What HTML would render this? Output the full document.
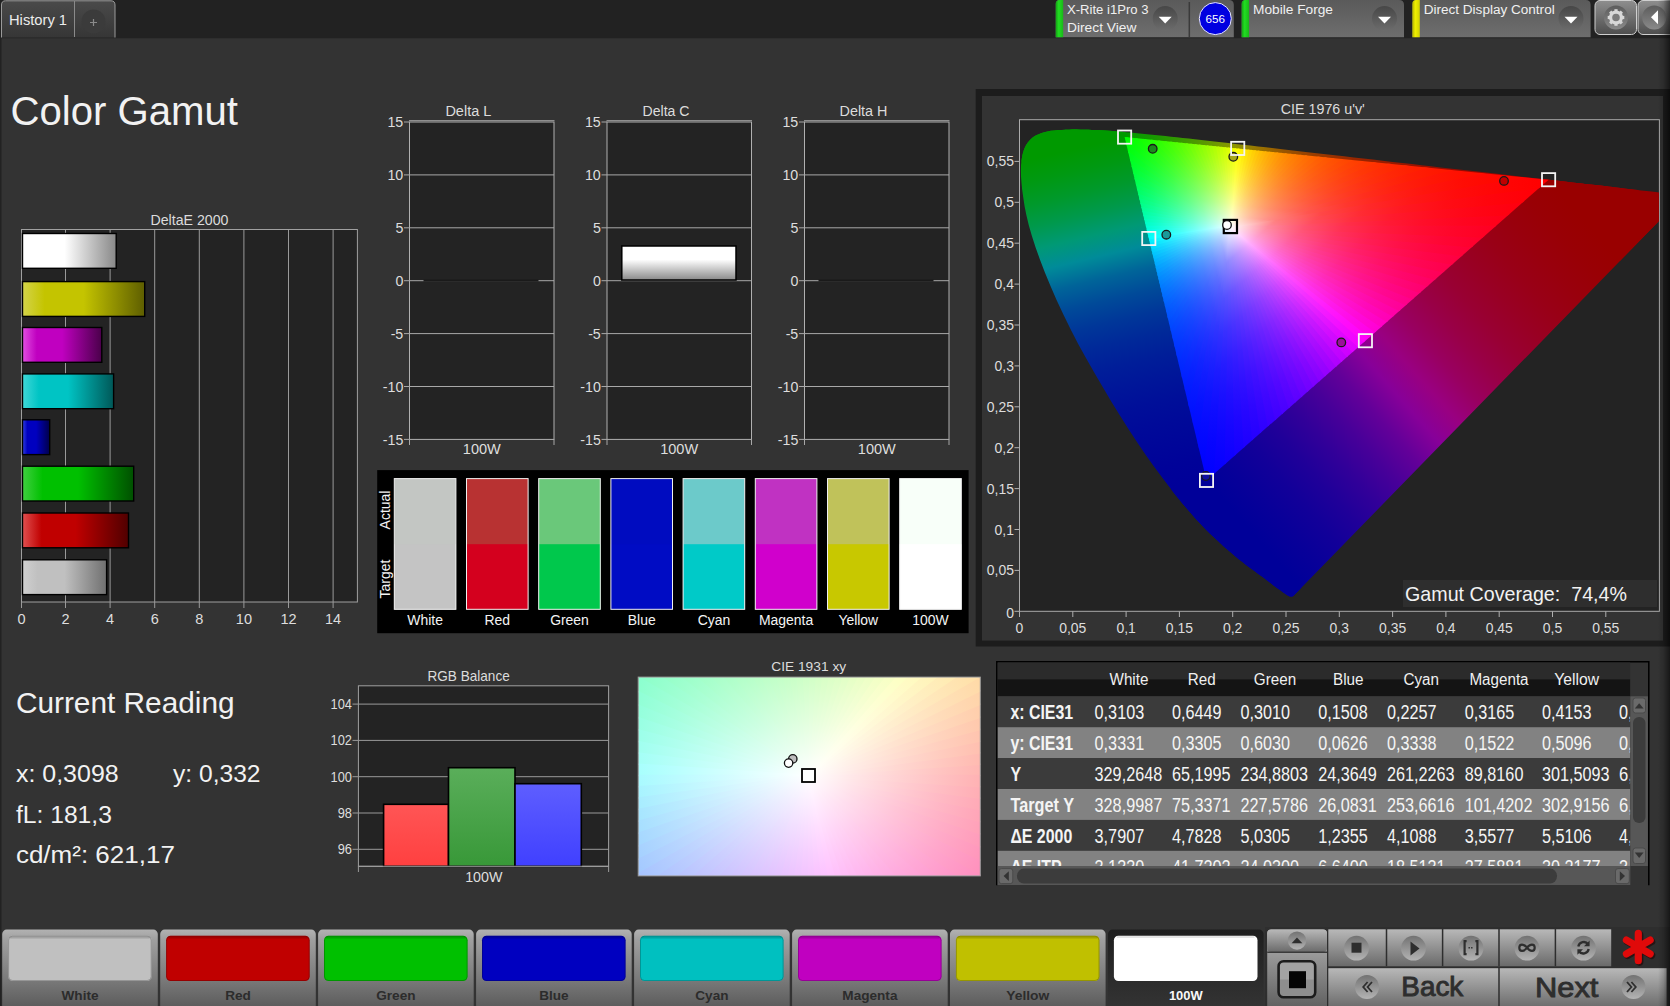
<!DOCTYPE html>
<html><head><meta charset="utf-8"><title>Color Gamut</title>
<style>html,body{margin:0;padding:0;background:#333;overflow:hidden}svg{display:block}text{font-family:"Liberation Sans", sans-serif}</style></head>
<body><svg width="1670" height="1006" viewBox="0 0 1670 1006" font-family='"Liberation Sans", sans-serif' fill="#e6e6e6">
<defs><linearGradient id="rshadow" x1="0" x2="1" y1="0" y2="0"><stop offset="0" stop-color="#333"/><stop offset="1" stop-color="#141414"/></linearGradient><linearGradient id="tabg" x1="0" x2="0" y1="0" y2="1"><stop offset="0" stop-color="#4a4a4a"/><stop offset="1" stop-color="#363636"/></linearGradient><radialGradient id="plusg" cx="0.5" cy="0.4" r="0.6"><stop offset="0" stop-color="#3a3a3a"/><stop offset="1" stop-color="#444"/></radialGradient><linearGradient id="wg" x1="0" x2="0" y1="0" y2="1"><stop offset="0" stop-color="#5a5a5a"/><stop offset="1" stop-color="#6e6e6e"/></linearGradient><linearGradient id="ddg" x1="0" x2="0" y1="0" y2="1"><stop offset="0" stop-color="#474747"/><stop offset="1" stop-color="#6c6c6c"/></linearGradient><linearGradient id="grn" x1="0" x2="1" y1="0" y2="0"><stop offset="0" stop-color="#14a014"/><stop offset="0.4" stop-color="#22dd22"/><stop offset="1" stop-color="#19b819"/></linearGradient><linearGradient id="yel" x1="0" x2="1" y1="0" y2="0"><stop offset="0" stop-color="#b0b000"/><stop offset="0.4" stop-color="#f0f000"/><stop offset="1" stop-color="#d0d000"/></linearGradient><linearGradient id="btg" x1="0" x2="0" y1="0" y2="1"><stop offset="0" stop-color="#8e8e8e"/><stop offset="1" stop-color="#4e4e4e"/></linearGradient><linearGradient id="btc" x1="0" x2="0" y1="0" y2="1"><stop offset="0" stop-color="#5c5c5c"/><stop offset="1" stop-color="#8a8a8a"/></linearGradient><linearGradient id="deb0" x1="0" x2="1" y1="0" y2="0"><stop offset="0" stop-color="#fff"/><stop offset="0.45" stop-color="#fff"/><stop offset="1" stop-color="#888"/></linearGradient><linearGradient id="deb1" x1="0" x2="1" y1="0" y2="0"><stop offset="0" stop-color="#d4d44a"/><stop offset="0.18" stop-color="#c4c400"/><stop offset="0.5" stop-color="#c4c400"/><stop offset="1" stop-color="#5e5e00"/></linearGradient><linearGradient id="deb2" x1="0" x2="1" y1="0" y2="0"><stop offset="0" stop-color="#e050e0"/><stop offset="0.18" stop-color="#c000c0"/><stop offset="0.5" stop-color="#c000c0"/><stop offset="1" stop-color="#4a004a"/></linearGradient><linearGradient id="deb3" x1="0" x2="1" y1="0" y2="0"><stop offset="0" stop-color="#40d8d8"/><stop offset="0.18" stop-color="#00c4c4"/><stop offset="0.5" stop-color="#00c4c4"/><stop offset="1" stop-color="#005858"/></linearGradient><linearGradient id="deb4" x1="0" x2="1" y1="0" y2="0"><stop offset="0" stop-color="#3040e0"/><stop offset="0.18" stop-color="#0000c0"/><stop offset="0.5" stop-color="#0000c0"/><stop offset="1" stop-color="#00004a"/></linearGradient><linearGradient id="deb5" x1="0" x2="1" y1="0" y2="0"><stop offset="0" stop-color="#40d040"/><stop offset="0.18" stop-color="#00c000"/><stop offset="0.5" stop-color="#00c000"/><stop offset="1" stop-color="#005000"/></linearGradient><linearGradient id="deb6" x1="0" x2="1" y1="0" y2="0"><stop offset="0" stop-color="#e05050"/><stop offset="0.18" stop-color="#c00000"/><stop offset="0.5" stop-color="#c00000"/><stop offset="1" stop-color="#500000"/></linearGradient><linearGradient id="deb7" x1="0" x2="1" y1="0" y2="0"><stop offset="0" stop-color="#d0d0d0"/><stop offset="0.18" stop-color="#c0c0c0"/><stop offset="0.5" stop-color="#c0c0c0"/><stop offset="1" stop-color="#707070"/></linearGradient><linearGradient id="dcb" x1="0" x2="0" y1="0" y2="1"><stop offset="0" stop-color="#fff"/><stop offset="0.4" stop-color="#fff"/><stop offset="1" stop-color="#8a8a8a"/></linearGradient><clipPath id="plotclip"><rect x="1020" y="120.2" width="639" height="490.6"/></clipPath><clipPath id="locclip"><path d="M1293.3,596.0 L1293.2,596.0 L1293.2,596.0 L1293.1,596.0 L1293.1,596.0 L1293.0,596.1 L1293.0,596.2 L1292.9,596.2 L1292.8,596.3 L1292.8,596.3 L1292.7,596.3 L1292.6,596.3 L1292.5,596.3 L1292.4,596.4 L1292.3,596.4 L1292.2,596.5 L1292.1,596.6 L1292.0,596.6 L1291.8,596.6 L1291.7,596.6 L1291.5,596.6 L1291.4,596.6 L1291.2,596.6 L1291.0,596.6 L1290.8,596.6 L1290.6,596.6 L1290.4,596.6 L1290.2,596.6 L1289.9,596.6 L1289.6,596.5 L1289.3,596.3 L1288.9,596.1 L1288.4,595.8 L1287.7,595.4 L1287.0,595.0 L1286.2,594.5 L1285.4,594.0 L1284.5,593.3 L1283.5,592.7 L1282.5,591.9 L1281.3,591.1 L1280.0,590.1 L1278.5,589.1 L1277.0,588.0 L1275.3,586.7 L1273.6,585.4 L1271.8,584.0 L1269.9,582.5 L1267.8,581.0 L1265.6,579.3 L1263.4,577.6 L1260.9,575.8 L1258.3,573.9 L1255.4,571.8 L1252.4,569.5 L1249.1,567.2 L1245.8,564.7 L1242.5,562.1 L1239.1,559.4 L1235.5,556.5 L1231.8,553.3 L1227.9,550.0 L1223.8,546.4 L1219.6,542.6 L1215.1,538.3 L1210.5,533.9 L1205.7,529.2 L1200.7,524.0 L1195.1,518.0 L1189.1,511.1 L1182.6,503.5 L1175.7,495.2 L1168.6,486.1 L1161.2,476.3 L1153.4,465.7 L1145.4,454.4 L1137.3,442.4 L1128.9,429.7 L1120.4,416.2 L1111.7,402.2 L1103.3,388.1 L1094.8,373.6 L1086.4,358.8 L1078.2,343.9 L1070.6,329.3 L1063.5,314.8 L1056.8,300.4 L1050.6,286.3 L1045.0,272.8 L1040.1,260.0 L1035.7,247.7 L1031.9,236.1 L1028.8,225.3 L1026.4,215.3 L1024.6,206.2 L1023.3,197.7 L1022.2,189.9 L1021.5,182.8 L1021.0,176.5 L1020.9,170.7 L1021.0,165.3 L1021.5,160.4 L1022.2,156.0 L1023.2,152.0 L1024.4,148.4 L1026.1,145.1 L1028.0,142.3 L1030.2,139.8 L1032.6,137.6 L1035.2,135.8 L1038.0,134.4 L1041.0,133.2 L1044.1,132.2 L1047.4,131.4 L1050.8,130.8 L1054.3,130.5 L1057.9,130.1 L1061.5,129.9 L1065.3,129.7 L1069.1,129.7 L1072.9,129.6 L1076.6,129.6 L1080.4,129.7 L1084.2,129.7 L1088.1,129.8 L1092.0,130.0 L1095.9,130.1 L1099.9,130.3 L1104.0,130.6 L1108.1,130.8 L1112.3,131.1 L1116.6,131.4 L1121.1,131.8 L1125.6,132.2 L1130.1,132.6 L1134.8,133.0 L1139.6,133.5 L1144.6,133.9 L1149.6,134.4 L1154.8,135.0 L1160.1,135.5 L1165.5,136.1 L1171.1,136.7 L1176.8,137.3 L1182.7,137.9 L1188.7,138.6 L1194.9,139.3 L1201.2,140.0 L1207.7,140.7 L1214.4,141.5 L1221.3,142.3 L1228.3,143.0 L1235.5,143.9 L1242.8,144.7 L1250.4,145.6 L1258.1,146.4 L1265.9,147.3 L1274.0,148.3 L1282.2,149.2 L1290.6,150.2 L1299.2,151.2 L1307.9,152.2 L1316.8,153.2 L1325.8,154.2 L1335.0,155.3 L1344.3,156.3 L1353.8,157.4 L1363.3,158.5 L1372.9,159.6 L1382.6,160.7 L1392.4,161.9 L1402.2,163.0 L1411.9,164.1 L1421.4,165.2 L1430.9,166.3 L1440.3,167.4 L1449.6,168.4 L1458.9,169.5 L1468.3,170.6 L1477.4,171.6 L1486.3,172.6 L1495.0,173.6 L1503.4,174.6 L1511.7,175.5 L1519.6,176.4 L1527.4,177.3 L1534.9,178.2 L1542.1,179.0 L1549.1,179.8 L1555.7,180.6 L1562.1,181.3 L1568.2,182.0 L1574.1,182.7 L1579.7,183.3 L1585.0,183.9 L1590.1,184.5 L1595.1,185.1 L1599.8,185.6 L1604.2,186.1 L1608.6,186.6 L1612.7,187.1 L1616.8,187.6 L1620.7,188.0 L1624.4,188.5 L1628.1,188.9 L1631.5,189.3 L1634.8,189.7 L1638.0,190.0 L1641.0,190.4 L1643.9,190.7 L1646.6,191.0 L1649.1,191.3 L1651.5,191.5 L1653.6,191.8 L1655.5,192.0 L1657.4,192.2 L1659.6,192.5 L1662.1,192.8 L1664.8,193.1 L1667.7,193.4 L1670.7,193.8 L1674.2,194.2 L1678.1,194.6 L1681.6,195.0 L1684.0,195.3 L1685.0,195.4 L1684.9,195.4 L1684.3,195.3 L1684.0,195.3 Z"/></clipPath><clipPath id="triclip"><path d="M1548.61,179.70 L1124.61,137.06 L1206.52,480.44 Z"/></clipPath><linearGradient id="oe0" gradientUnits="userSpaceOnUse" x1="1548.6" y1="179.7" x2="1124.6" y2="137.1"><stop offset="0.000" stop-color="#990000"/><stop offset="0.062" stop-color="#990200"/><stop offset="0.125" stop-color="#990500"/><stop offset="0.188" stop-color="#990800"/><stop offset="0.250" stop-color="#990d00"/><stop offset="0.312" stop-color="#991200"/><stop offset="0.375" stop-color="#991a00"/><stop offset="0.438" stop-color="#992300"/><stop offset="0.500" stop-color="#992f00"/><stop offset="0.562" stop-color="#993f00"/><stop offset="0.625" stop-color="#995500"/><stop offset="0.688" stop-color="#997600"/><stop offset="0.750" stop-color="#8a9900"/><stop offset="0.812" stop-color="#5a9900"/><stop offset="0.875" stop-color="#339900"/><stop offset="0.938" stop-color="#159900"/><stop offset="1.000" stop-color="#009900"/></linearGradient><linearGradient id="oe1" gradientUnits="userSpaceOnUse" x1="1124.6" y1="137.1" x2="1206.5" y2="480.4"><stop offset="0.000" stop-color="#009900"/><stop offset="0.062" stop-color="#009912"/><stop offset="0.125" stop-color="#00992b"/><stop offset="0.188" stop-color="#00994c"/><stop offset="0.250" stop-color="#009975"/><stop offset="0.312" stop-color="#008b99"/><stop offset="0.375" stop-color="#006499"/><stop offset="0.438" stop-color="#004a99"/><stop offset="0.500" stop-color="#003799"/><stop offset="0.562" stop-color="#002999"/><stop offset="0.625" stop-color="#001e99"/><stop offset="0.688" stop-color="#001699"/><stop offset="0.750" stop-color="#000f99"/><stop offset="0.812" stop-color="#000a99"/><stop offset="0.875" stop-color="#000699"/><stop offset="0.938" stop-color="#000299"/><stop offset="1.000" stop-color="#000099"/></linearGradient><linearGradient id="oe2" gradientUnits="userSpaceOnUse" x1="1206.5" y1="480.4" x2="1548.6" y2="179.7"><stop offset="0.000" stop-color="#000099"/><stop offset="0.062" stop-color="#080099"/><stop offset="0.125" stop-color="#120099"/><stop offset="0.188" stop-color="#200099"/><stop offset="0.250" stop-color="#320099"/><stop offset="0.312" stop-color="#480099"/><stop offset="0.375" stop-color="#630099"/><stop offset="0.438" stop-color="#870099"/><stop offset="0.500" stop-color="#990081"/><stop offset="0.562" stop-color="#990060"/><stop offset="0.625" stop-color="#990047"/><stop offset="0.688" stop-color="#990033"/><stop offset="0.750" stop-color="#990024"/><stop offset="0.812" stop-color="#990017"/><stop offset="0.875" stop-color="#99000d"/><stop offset="0.938" stop-color="#990005"/><stop offset="1.000" stop-color="#990000"/></linearGradient><linearGradient id="in0" gradientUnits="userSpaceOnUse" x1="1230.4" y1="226.5" x2="1501.8" y2="220.8"><stop offset="0.000" stop-color="#ffffff"/><stop offset="0.143" stop-color="#ff8898"/><stop offset="0.286" stop-color="#ff5066"/><stop offset="0.429" stop-color="#ff2f49"/><stop offset="0.571" stop-color="#ff1b36"/><stop offset="0.714" stop-color="#ff0e29"/><stop offset="0.857" stop-color="#ff0520"/><stop offset="1.000" stop-color="#ff0019"/></linearGradient><linearGradient id="in1" gradientUnits="userSpaceOnUse" x1="1230.4" y1="226.5" x2="1515.8" y2="208.6"><stop offset="0.000" stop-color="#ffffff"/><stop offset="0.143" stop-color="#ff8590"/><stop offset="0.286" stop-color="#ff4d5c"/><stop offset="0.429" stop-color="#ff2e3e"/><stop offset="0.571" stop-color="#ff1a2c"/><stop offset="0.714" stop-color="#ff0e1f"/><stop offset="0.857" stop-color="#ff0516"/><stop offset="1.000" stop-color="#ff000f"/></linearGradient><linearGradient id="in2" gradientUnits="userSpaceOnUse" x1="1230.4" y1="226.5" x2="1531.3" y2="194.9"><stop offset="0.000" stop-color="#ffffff"/><stop offset="0.143" stop-color="#ff8287"/><stop offset="0.286" stop-color="#ff4a52"/><stop offset="0.429" stop-color="#ff2c34"/><stop offset="0.571" stop-color="#ff1922"/><stop offset="0.714" stop-color="#ff0d15"/><stop offset="0.857" stop-color="#ff050d"/><stop offset="1.000" stop-color="#ff0007"/></linearGradient><linearGradient id="in3" gradientUnits="userSpaceOnUse" x1="1230.4" y1="226.5" x2="1547.9" y2="179.6"><stop offset="0.000" stop-color="#ffffff"/><stop offset="0.143" stop-color="#ff7f7e"/><stop offset="0.286" stop-color="#ff4747"/><stop offset="0.429" stop-color="#ff2a2a"/><stop offset="0.571" stop-color="#ff1818"/><stop offset="0.714" stop-color="#ff0c0c"/><stop offset="0.857" stop-color="#ff0505"/><stop offset="1.000" stop-color="#ff0000"/></linearGradient><linearGradient id="in4" gradientUnits="userSpaceOnUse" x1="1230.4" y1="226.5" x2="1500.9" y2="174.9"><stop offset="0.000" stop-color="#ffffff"/><stop offset="0.143" stop-color="#ff8c86"/><stop offset="0.286" stop-color="#ff554e"/><stop offset="0.429" stop-color="#ff372e"/><stop offset="0.571" stop-color="#ff231b"/><stop offset="0.714" stop-color="#ff160e"/><stop offset="0.857" stop-color="#ff0d05"/><stop offset="1.000" stop-color="#ff0700"/></linearGradient><linearGradient id="in5" gradientUnits="userSpaceOnUse" x1="1230.4" y1="226.5" x2="1465.6" y2="171.4"><stop offset="0.000" stop-color="#ffffff"/><stop offset="0.143" stop-color="#ff968d"/><stop offset="0.286" stop-color="#ff6254"/><stop offset="0.429" stop-color="#ff4233"/><stop offset="0.571" stop-color="#ff2e1d"/><stop offset="0.714" stop-color="#ff200f"/><stop offset="0.857" stop-color="#ff1606"/><stop offset="1.000" stop-color="#ff0f00"/></linearGradient><linearGradient id="in6" gradientUnits="userSpaceOnUse" x1="1230.4" y1="226.5" x2="1437.9" y2="168.6"><stop offset="0.000" stop-color="#ffffff"/><stop offset="0.143" stop-color="#ffa092"/><stop offset="0.286" stop-color="#ff6d59"/><stop offset="0.429" stop-color="#ff4d36"/><stop offset="0.571" stop-color="#ff3920"/><stop offset="0.714" stop-color="#ff2a11"/><stop offset="0.857" stop-color="#ff1f06"/><stop offset="1.000" stop-color="#ff1700"/></linearGradient><linearGradient id="in7" gradientUnits="userSpaceOnUse" x1="1230.4" y1="226.5" x2="1415.6" y2="166.3"><stop offset="0.000" stop-color="#ffffff"/><stop offset="0.143" stop-color="#ffa897"/><stop offset="0.286" stop-color="#ff775e"/><stop offset="0.429" stop-color="#ff583a"/><stop offset="0.571" stop-color="#ff4222"/><stop offset="0.714" stop-color="#ff3312"/><stop offset="0.857" stop-color="#ff2807"/><stop offset="1.000" stop-color="#ff1f00"/></linearGradient><linearGradient id="in8" gradientUnits="userSpaceOnUse" x1="1230.4" y1="226.5" x2="1397.2" y2="164.5"><stop offset="0.000" stop-color="#ffffff"/><stop offset="0.143" stop-color="#ffaf9b"/><stop offset="0.286" stop-color="#ff8062"/><stop offset="0.429" stop-color="#ff613d"/><stop offset="0.571" stop-color="#ff4c25"/><stop offset="0.714" stop-color="#ff3c14"/><stop offset="0.857" stop-color="#ff3008"/><stop offset="1.000" stop-color="#ff2700"/></linearGradient><linearGradient id="in9" gradientUnits="userSpaceOnUse" x1="1230.4" y1="226.5" x2="1381.7" y2="162.9"><stop offset="0.000" stop-color="#ffffff"/><stop offset="0.143" stop-color="#ffb59f"/><stop offset="0.286" stop-color="#ff8865"/><stop offset="0.429" stop-color="#ff6a40"/><stop offset="0.571" stop-color="#ff5427"/><stop offset="0.714" stop-color="#ff4415"/><stop offset="0.857" stop-color="#ff3808"/><stop offset="1.000" stop-color="#ff2f00"/></linearGradient><linearGradient id="in10" gradientUnits="userSpaceOnUse" x1="1230.4" y1="226.5" x2="1368.4" y2="161.6"><stop offset="0.000" stop-color="#ffffff"/><stop offset="0.143" stop-color="#ffbaa2"/><stop offset="0.286" stop-color="#ff8f69"/><stop offset="0.429" stop-color="#ff7243"/><stop offset="0.571" stop-color="#ff5d29"/><stop offset="0.714" stop-color="#ff4d16"/><stop offset="0.857" stop-color="#ff4009"/><stop offset="1.000" stop-color="#ff3700"/></linearGradient><linearGradient id="in11" gradientUnits="userSpaceOnUse" x1="1230.4" y1="226.5" x2="1356.8" y2="160.4"><stop offset="0.000" stop-color="#ffffff"/><stop offset="0.143" stop-color="#ffbfa5"/><stop offset="0.286" stop-color="#ff966c"/><stop offset="0.429" stop-color="#ff7a46"/><stop offset="0.571" stop-color="#ff652b"/><stop offset="0.714" stop-color="#ff5517"/><stop offset="0.857" stop-color="#ff4809"/><stop offset="1.000" stop-color="#ff3e00"/></linearGradient><linearGradient id="in12" gradientUnits="userSpaceOnUse" x1="1230.4" y1="226.5" x2="1346.6" y2="159.4"><stop offset="0.000" stop-color="#ffffff"/><stop offset="0.143" stop-color="#ffc4a8"/><stop offset="0.286" stop-color="#ff9d6f"/><stop offset="0.429" stop-color="#ff8148"/><stop offset="0.571" stop-color="#ff6c2c"/><stop offset="0.714" stop-color="#ff5c18"/><stop offset="0.857" stop-color="#ff5009"/><stop offset="1.000" stop-color="#ff4600"/></linearGradient><linearGradient id="in13" gradientUnits="userSpaceOnUse" x1="1230.4" y1="226.5" x2="1337.6" y2="158.5"><stop offset="0.000" stop-color="#ffffff"/><stop offset="0.143" stop-color="#ffc8aa"/><stop offset="0.286" stop-color="#ffa372"/><stop offset="0.429" stop-color="#ff884a"/><stop offset="0.571" stop-color="#ff732e"/><stop offset="0.714" stop-color="#ff6419"/><stop offset="0.857" stop-color="#ff570a"/><stop offset="1.000" stop-color="#ff4d00"/></linearGradient><linearGradient id="in14" gradientUnits="userSpaceOnUse" x1="1230.4" y1="226.5" x2="1329.5" y2="157.7"><stop offset="0.000" stop-color="#ffffff"/><stop offset="0.143" stop-color="#ffccac"/><stop offset="0.286" stop-color="#ffa874"/><stop offset="0.429" stop-color="#ff8e4d"/><stop offset="0.571" stop-color="#ff7a30"/><stop offset="0.714" stop-color="#ff6b1a"/><stop offset="0.857" stop-color="#ff5e0a"/><stop offset="1.000" stop-color="#ff5400"/></linearGradient><linearGradient id="in15" gradientUnits="userSpaceOnUse" x1="1230.4" y1="226.5" x2="1322.1" y2="156.9"><stop offset="0.000" stop-color="#ffffff"/><stop offset="0.143" stop-color="#ffd0af"/><stop offset="0.286" stop-color="#ffae77"/><stop offset="0.429" stop-color="#ff954f"/><stop offset="0.571" stop-color="#ff8131"/><stop offset="0.714" stop-color="#ff721b"/><stop offset="0.857" stop-color="#ff660b"/><stop offset="1.000" stop-color="#ff5b00"/></linearGradient><linearGradient id="in16" gradientUnits="userSpaceOnUse" x1="1230.4" y1="226.5" x2="1315.3" y2="156.2"><stop offset="0.000" stop-color="#ffffff"/><stop offset="0.143" stop-color="#ffd3b0"/><stop offset="0.286" stop-color="#ffb379"/><stop offset="0.429" stop-color="#ff9b51"/><stop offset="0.571" stop-color="#ff8833"/><stop offset="0.714" stop-color="#ff791c"/><stop offset="0.857" stop-color="#ff6d0b"/><stop offset="1.000" stop-color="#ff6300"/></linearGradient><linearGradient id="in17" gradientUnits="userSpaceOnUse" x1="1230.4" y1="226.5" x2="1309.1" y2="155.6"><stop offset="0.000" stop-color="#ffffff"/><stop offset="0.143" stop-color="#ffd6b2"/><stop offset="0.286" stop-color="#ffb87b"/><stop offset="0.429" stop-color="#ffa153"/><stop offset="0.571" stop-color="#ff8e34"/><stop offset="0.714" stop-color="#ff801d"/><stop offset="0.857" stop-color="#ff740c"/><stop offset="1.000" stop-color="#ff6a00"/></linearGradient><linearGradient id="in18" gradientUnits="userSpaceOnUse" x1="1230.4" y1="226.5" x2="1303.4" y2="155.0"><stop offset="0.000" stop-color="#ffffff"/><stop offset="0.143" stop-color="#ffd9b4"/><stop offset="0.286" stop-color="#ffbc7e"/><stop offset="0.429" stop-color="#ffa655"/><stop offset="0.571" stop-color="#ff9536"/><stop offset="0.714" stop-color="#ff861e"/><stop offset="0.857" stop-color="#ff7b0c"/><stop offset="1.000" stop-color="#ff7100"/></linearGradient><linearGradient id="in19" gradientUnits="userSpaceOnUse" x1="1230.4" y1="226.5" x2="1298.0" y2="154.5"><stop offset="0.000" stop-color="#ffffff"/><stop offset="0.143" stop-color="#ffdcb6"/><stop offset="0.286" stop-color="#ffc180"/><stop offset="0.429" stop-color="#ffac57"/><stop offset="0.571" stop-color="#ff9b37"/><stop offset="0.714" stop-color="#ff8d1f"/><stop offset="0.857" stop-color="#ff820c"/><stop offset="1.000" stop-color="#ff7800"/></linearGradient><linearGradient id="in20" gradientUnits="userSpaceOnUse" x1="1230.4" y1="226.5" x2="1293.0" y2="154.0"><stop offset="0.000" stop-color="#ffffff"/><stop offset="0.143" stop-color="#ffdeb7"/><stop offset="0.286" stop-color="#ffc582"/><stop offset="0.429" stop-color="#ffb158"/><stop offset="0.571" stop-color="#ffa139"/><stop offset="0.714" stop-color="#ff9420"/><stop offset="0.857" stop-color="#ff880d"/><stop offset="1.000" stop-color="#ff7f00"/></linearGradient><linearGradient id="in21" gradientUnits="userSpaceOnUse" x1="1230.4" y1="226.5" x2="1288.2" y2="153.5"><stop offset="0.000" stop-color="#ffffff"/><stop offset="0.143" stop-color="#ffe1b9"/><stop offset="0.286" stop-color="#ffca83"/><stop offset="0.429" stop-color="#ffb75a"/><stop offset="0.571" stop-color="#ffa73a"/><stop offset="0.714" stop-color="#ff9a21"/><stop offset="0.857" stop-color="#ff8f0d"/><stop offset="1.000" stop-color="#ff8600"/></linearGradient><linearGradient id="in22" gradientUnits="userSpaceOnUse" x1="1230.4" y1="226.5" x2="1283.7" y2="153.1"><stop offset="0.000" stop-color="#ffffff"/><stop offset="0.143" stop-color="#ffe3ba"/><stop offset="0.286" stop-color="#ffce85"/><stop offset="0.429" stop-color="#ffbc5c"/><stop offset="0.571" stop-color="#ffad3b"/><stop offset="0.714" stop-color="#ffa122"/><stop offset="0.857" stop-color="#ff960e"/><stop offset="1.000" stop-color="#ff8d00"/></linearGradient><linearGradient id="in23" gradientUnits="userSpaceOnUse" x1="1230.4" y1="226.5" x2="1279.5" y2="152.6"><stop offset="0.000" stop-color="#ffffff"/><stop offset="0.143" stop-color="#ffe6bc"/><stop offset="0.286" stop-color="#ffd287"/><stop offset="0.429" stop-color="#ffc15e"/><stop offset="0.571" stop-color="#ffb33d"/><stop offset="0.714" stop-color="#ffa723"/><stop offset="0.857" stop-color="#ff9d0e"/><stop offset="1.000" stop-color="#ff9500"/></linearGradient><linearGradient id="in24" gradientUnits="userSpaceOnUse" x1="1230.4" y1="226.5" x2="1275.4" y2="152.2"><stop offset="0.000" stop-color="#ffffff"/><stop offset="0.143" stop-color="#ffe8bd"/><stop offset="0.286" stop-color="#ffd689"/><stop offset="0.429" stop-color="#ffc65f"/><stop offset="0.571" stop-color="#ffb93e"/><stop offset="0.714" stop-color="#ffae23"/><stop offset="0.857" stop-color="#ffa50e"/><stop offset="1.000" stop-color="#ff9c00"/></linearGradient><linearGradient id="in25" gradientUnits="userSpaceOnUse" x1="1230.4" y1="226.5" x2="1271.4" y2="151.8"><stop offset="0.000" stop-color="#ffffff"/><stop offset="0.143" stop-color="#ffeabe"/><stop offset="0.286" stop-color="#ffd98b"/><stop offset="0.429" stop-color="#ffcb61"/><stop offset="0.571" stop-color="#ffbf3f"/><stop offset="0.714" stop-color="#ffb524"/><stop offset="0.857" stop-color="#ffac0f"/><stop offset="1.000" stop-color="#ffa400"/></linearGradient><linearGradient id="in26" gradientUnits="userSpaceOnUse" x1="1230.4" y1="226.5" x2="1267.7" y2="151.4"><stop offset="0.000" stop-color="#ffffff"/><stop offset="0.143" stop-color="#ffedc0"/><stop offset="0.286" stop-color="#ffdd8c"/><stop offset="0.429" stop-color="#ffd063"/><stop offset="0.571" stop-color="#ffc541"/><stop offset="0.714" stop-color="#ffbc25"/><stop offset="0.857" stop-color="#ffb30f"/><stop offset="1.000" stop-color="#ffac00"/></linearGradient><linearGradient id="in27" gradientUnits="userSpaceOnUse" x1="1230.4" y1="226.5" x2="1264.0" y2="151.1"><stop offset="0.000" stop-color="#ffffff"/><stop offset="0.143" stop-color="#ffefc1"/><stop offset="0.286" stop-color="#ffe18e"/><stop offset="0.429" stop-color="#ffd564"/><stop offset="0.571" stop-color="#ffcb42"/><stop offset="0.714" stop-color="#ffc226"/><stop offset="0.857" stop-color="#ffbb10"/><stop offset="1.000" stop-color="#ffb400"/></linearGradient><linearGradient id="in28" gradientUnits="userSpaceOnUse" x1="1230.4" y1="226.5" x2="1260.4" y2="150.7"><stop offset="0.000" stop-color="#ffffff"/><stop offset="0.143" stop-color="#fff1c2"/><stop offset="0.286" stop-color="#ffe590"/><stop offset="0.429" stop-color="#ffda66"/><stop offset="0.571" stop-color="#ffd144"/><stop offset="0.714" stop-color="#ffc927"/><stop offset="0.857" stop-color="#ffc210"/><stop offset="1.000" stop-color="#ffbc00"/></linearGradient><linearGradient id="in29" gradientUnits="userSpaceOnUse" x1="1230.4" y1="226.5" x2="1256.9" y2="150.4"><stop offset="0.000" stop-color="#ffffff"/><stop offset="0.143" stop-color="#fff3c3"/><stop offset="0.286" stop-color="#ffe991"/><stop offset="0.429" stop-color="#ffe068"/><stop offset="0.571" stop-color="#ffd845"/><stop offset="0.714" stop-color="#ffd128"/><stop offset="0.857" stop-color="#ffca11"/><stop offset="1.000" stop-color="#ffc500"/></linearGradient><linearGradient id="in30" gradientUnits="userSpaceOnUse" x1="1230.4" y1="226.5" x2="1253.5" y2="150.0"><stop offset="0.000" stop-color="#ffffff"/><stop offset="0.143" stop-color="#fff5c4"/><stop offset="0.286" stop-color="#ffec93"/><stop offset="0.429" stop-color="#ffe56a"/><stop offset="0.571" stop-color="#ffde46"/><stop offset="0.714" stop-color="#ffd829"/><stop offset="0.857" stop-color="#ffd311"/><stop offset="1.000" stop-color="#ffce00"/></linearGradient><linearGradient id="in31" gradientUnits="userSpaceOnUse" x1="1230.4" y1="226.5" x2="1250.1" y2="149.7"><stop offset="0.000" stop-color="#ffffff"/><stop offset="0.143" stop-color="#fff7c6"/><stop offset="0.286" stop-color="#fff095"/><stop offset="0.429" stop-color="#ffea6b"/><stop offset="0.571" stop-color="#ffe548"/><stop offset="0.714" stop-color="#ffe02a"/><stop offset="0.857" stop-color="#ffdb12"/><stop offset="1.000" stop-color="#ffd700"/></linearGradient><linearGradient id="in32" gradientUnits="userSpaceOnUse" x1="1230.4" y1="226.5" x2="1246.8" y2="149.3"><stop offset="0.000" stop-color="#ffffff"/><stop offset="0.143" stop-color="#fff9c7"/><stop offset="0.286" stop-color="#fff497"/><stop offset="0.429" stop-color="#ffef6d"/><stop offset="0.571" stop-color="#ffeb49"/><stop offset="0.714" stop-color="#ffe82b"/><stop offset="0.857" stop-color="#ffe412"/><stop offset="1.000" stop-color="#ffe100"/></linearGradient><linearGradient id="in33" gradientUnits="userSpaceOnUse" x1="1230.4" y1="226.5" x2="1243.5" y2="149.0"><stop offset="0.000" stop-color="#ffffff"/><stop offset="0.143" stop-color="#fffbc8"/><stop offset="0.286" stop-color="#fff898"/><stop offset="0.429" stop-color="#fff56f"/><stop offset="0.571" stop-color="#fff24b"/><stop offset="0.714" stop-color="#fff02c"/><stop offset="0.857" stop-color="#ffed13"/><stop offset="1.000" stop-color="#ffeb00"/></linearGradient><linearGradient id="in34" gradientUnits="userSpaceOnUse" x1="1230.4" y1="226.5" x2="1240.2" y2="148.7"><stop offset="0.000" stop-color="#ffffff"/><stop offset="0.143" stop-color="#fffdc9"/><stop offset="0.286" stop-color="#fffc9a"/><stop offset="0.429" stop-color="#fffb71"/><stop offset="0.571" stop-color="#fff94d"/><stop offset="0.714" stop-color="#fff82d"/><stop offset="0.857" stop-color="#fff713"/><stop offset="1.000" stop-color="#fff600"/></linearGradient><linearGradient id="in35" gradientUnits="userSpaceOnUse" x1="1230.4" y1="226.5" x2="1236.9" y2="148.4"><stop offset="0.000" stop-color="#ffffff"/><stop offset="0.143" stop-color="#feffca"/><stop offset="0.286" stop-color="#feff9b"/><stop offset="0.429" stop-color="#feff72"/><stop offset="0.571" stop-color="#fdff4e"/><stop offset="0.714" stop-color="#fdff2e"/><stop offset="0.857" stop-color="#fdff14"/><stop offset="1.000" stop-color="#fcff00"/></linearGradient><linearGradient id="in36" gradientUnits="userSpaceOnUse" x1="1230.4" y1="226.5" x2="1233.7" y2="148.0"><stop offset="0.000" stop-color="#ffffff"/><stop offset="0.143" stop-color="#fcffca"/><stop offset="0.286" stop-color="#faff9b"/><stop offset="0.429" stop-color="#f8ff71"/><stop offset="0.571" stop-color="#f6ff4d"/><stop offset="0.714" stop-color="#f4ff2e"/><stop offset="0.857" stop-color="#f2ff13"/><stop offset="1.000" stop-color="#f1ff00"/></linearGradient><linearGradient id="in37" gradientUnits="userSpaceOnUse" x1="1230.4" y1="226.5" x2="1230.4" y2="147.7"><stop offset="0.000" stop-color="#ffffff"/><stop offset="0.143" stop-color="#faffc9"/><stop offset="0.286" stop-color="#f6ff9a"/><stop offset="0.429" stop-color="#f2ff71"/><stop offset="0.571" stop-color="#eeff4c"/><stop offset="0.714" stop-color="#ebff2d"/><stop offset="0.857" stop-color="#e8ff13"/><stop offset="1.000" stop-color="#e5ff00"/></linearGradient><linearGradient id="in38" gradientUnits="userSpaceOnUse" x1="1230.4" y1="226.5" x2="1227.1" y2="147.4"><stop offset="0.000" stop-color="#ffffff"/><stop offset="0.143" stop-color="#f8ffc9"/><stop offset="0.286" stop-color="#f2ff99"/><stop offset="0.429" stop-color="#ecff70"/><stop offset="0.571" stop-color="#e7ff4c"/><stop offset="0.714" stop-color="#e2ff2d"/><stop offset="0.857" stop-color="#deff13"/><stop offset="1.000" stop-color="#daff00"/></linearGradient><linearGradient id="in39" gradientUnits="userSpaceOnUse" x1="1230.4" y1="226.5" x2="1223.7" y2="147.0"><stop offset="0.000" stop-color="#ffffff"/><stop offset="0.143" stop-color="#f6ffc8"/><stop offset="0.286" stop-color="#eeff99"/><stop offset="0.429" stop-color="#e7ff6f"/><stop offset="0.571" stop-color="#e0ff4b"/><stop offset="0.714" stop-color="#daff2c"/><stop offset="0.857" stop-color="#d4ff13"/><stop offset="1.000" stop-color="#cfff00"/></linearGradient><linearGradient id="in40" gradientUnits="userSpaceOnUse" x1="1230.4" y1="226.5" x2="1220.3" y2="146.7"><stop offset="0.000" stop-color="#ffffff"/><stop offset="0.143" stop-color="#f4ffc8"/><stop offset="0.286" stop-color="#eaff98"/><stop offset="0.429" stop-color="#e1ff6f"/><stop offset="0.571" stop-color="#d9ff4b"/><stop offset="0.714" stop-color="#d1ff2c"/><stop offset="0.857" stop-color="#cbff13"/><stop offset="1.000" stop-color="#c5ff00"/></linearGradient><linearGradient id="in41" gradientUnits="userSpaceOnUse" x1="1230.4" y1="226.5" x2="1216.8" y2="146.3"><stop offset="0.000" stop-color="#ffffff"/><stop offset="0.143" stop-color="#f2ffc7"/><stop offset="0.286" stop-color="#e6ff97"/><stop offset="0.429" stop-color="#dbff6e"/><stop offset="0.571" stop-color="#d2ff4a"/><stop offset="0.714" stop-color="#c9ff2c"/><stop offset="0.857" stop-color="#c1ff12"/><stop offset="1.000" stop-color="#baff00"/></linearGradient><linearGradient id="in42" gradientUnits="userSpaceOnUse" x1="1230.4" y1="226.5" x2="1213.3" y2="146.0"><stop offset="0.000" stop-color="#ffffff"/><stop offset="0.143" stop-color="#efffc7"/><stop offset="0.286" stop-color="#e2ff97"/><stop offset="0.429" stop-color="#d5ff6d"/><stop offset="0.571" stop-color="#caff49"/><stop offset="0.714" stop-color="#c0ff2b"/><stop offset="0.857" stop-color="#b7ff12"/><stop offset="1.000" stop-color="#afff00"/></linearGradient><linearGradient id="in43" gradientUnits="userSpaceOnUse" x1="1230.4" y1="226.5" x2="1209.6" y2="145.6"><stop offset="0.000" stop-color="#ffffff"/><stop offset="0.143" stop-color="#edffc6"/><stop offset="0.286" stop-color="#ddff96"/><stop offset="0.429" stop-color="#d0ff6c"/><stop offset="0.571" stop-color="#c3ff49"/><stop offset="0.714" stop-color="#b8ff2b"/><stop offset="0.857" stop-color="#aeff12"/><stop offset="1.000" stop-color="#a5ff00"/></linearGradient><linearGradient id="in44" gradientUnits="userSpaceOnUse" x1="1230.4" y1="226.5" x2="1205.8" y2="145.2"><stop offset="0.000" stop-color="#ffffff"/><stop offset="0.143" stop-color="#ebffc6"/><stop offset="0.286" stop-color="#d9ff95"/><stop offset="0.429" stop-color="#caff6c"/><stop offset="0.571" stop-color="#bcff48"/><stop offset="0.714" stop-color="#afff2a"/><stop offset="0.857" stop-color="#a4ff12"/><stop offset="1.000" stop-color="#9aff00"/></linearGradient><linearGradient id="in45" gradientUnits="userSpaceOnUse" x1="1230.4" y1="226.5" x2="1201.9" y2="144.8"><stop offset="0.000" stop-color="#ffffff"/><stop offset="0.143" stop-color="#e8ffc5"/><stop offset="0.286" stop-color="#d5ff95"/><stop offset="0.429" stop-color="#c4ff6b"/><stop offset="0.571" stop-color="#b4ff48"/><stop offset="0.714" stop-color="#a7ff2a"/><stop offset="0.857" stop-color="#9aff12"/><stop offset="1.000" stop-color="#90ff00"/></linearGradient><linearGradient id="in46" gradientUnits="userSpaceOnUse" x1="1230.4" y1="226.5" x2="1197.9" y2="144.4"><stop offset="0.000" stop-color="#ffffff"/><stop offset="0.143" stop-color="#e6ffc5"/><stop offset="0.286" stop-color="#d0ff94"/><stop offset="0.429" stop-color="#bdff6a"/><stop offset="0.571" stop-color="#adff47"/><stop offset="0.714" stop-color="#9eff29"/><stop offset="0.857" stop-color="#91ff11"/><stop offset="1.000" stop-color="#85ff00"/></linearGradient><linearGradient id="in47" gradientUnits="userSpaceOnUse" x1="1230.4" y1="226.5" x2="1193.7" y2="144.0"><stop offset="0.000" stop-color="#ffffff"/><stop offset="0.143" stop-color="#e3ffc4"/><stop offset="0.286" stop-color="#ccff93"/><stop offset="0.429" stop-color="#b7ff69"/><stop offset="0.571" stop-color="#a5ff46"/><stop offset="0.714" stop-color="#95ff29"/><stop offset="0.857" stop-color="#87ff11"/><stop offset="1.000" stop-color="#7aff00"/></linearGradient><linearGradient id="in48" gradientUnits="userSpaceOnUse" x1="1230.4" y1="226.5" x2="1189.2" y2="143.6"><stop offset="0.000" stop-color="#ffffff"/><stop offset="0.143" stop-color="#e1ffc4"/><stop offset="0.286" stop-color="#c7ff92"/><stop offset="0.429" stop-color="#b0ff69"/><stop offset="0.571" stop-color="#9dff46"/><stop offset="0.714" stop-color="#8cff28"/><stop offset="0.857" stop-color="#7dff11"/><stop offset="1.000" stop-color="#6fff00"/></linearGradient><linearGradient id="in49" gradientUnits="userSpaceOnUse" x1="1230.4" y1="226.5" x2="1184.5" y2="143.1"><stop offset="0.000" stop-color="#ffffff"/><stop offset="0.143" stop-color="#deffc3"/><stop offset="0.286" stop-color="#c2ff91"/><stop offset="0.429" stop-color="#aaff68"/><stop offset="0.571" stop-color="#95ff45"/><stop offset="0.714" stop-color="#82ff28"/><stop offset="0.857" stop-color="#72ff11"/><stop offset="1.000" stop-color="#64ff00"/></linearGradient><linearGradient id="in50" gradientUnits="userSpaceOnUse" x1="1230.4" y1="226.5" x2="1179.6" y2="142.6"><stop offset="0.000" stop-color="#ffffff"/><stop offset="0.143" stop-color="#dbffc3"/><stop offset="0.286" stop-color="#bdff90"/><stop offset="0.429" stop-color="#a3ff67"/><stop offset="0.571" stop-color="#8cff44"/><stop offset="0.714" stop-color="#79ff28"/><stop offset="0.857" stop-color="#68ff10"/><stop offset="1.000" stop-color="#59ff00"/></linearGradient><linearGradient id="in51" gradientUnits="userSpaceOnUse" x1="1230.4" y1="226.5" x2="1174.3" y2="142.1"><stop offset="0.000" stop-color="#ffffff"/><stop offset="0.143" stop-color="#d8ffc2"/><stop offset="0.286" stop-color="#b7ff90"/><stop offset="0.429" stop-color="#9bff66"/><stop offset="0.571" stop-color="#84ff43"/><stop offset="0.714" stop-color="#6fff27"/><stop offset="0.857" stop-color="#5dff10"/><stop offset="1.000" stop-color="#4eff00"/></linearGradient><linearGradient id="in52" gradientUnits="userSpaceOnUse" x1="1230.4" y1="226.5" x2="1168.6" y2="141.5"><stop offset="0.000" stop-color="#ffffff"/><stop offset="0.143" stop-color="#d5ffc1"/><stop offset="0.286" stop-color="#b1ff8f"/><stop offset="0.429" stop-color="#94ff65"/><stop offset="0.571" stop-color="#7aff43"/><stop offset="0.714" stop-color="#65ff26"/><stop offset="0.857" stop-color="#52ff10"/><stop offset="1.000" stop-color="#43ff00"/></linearGradient><linearGradient id="in53" gradientUnits="userSpaceOnUse" x1="1230.4" y1="226.5" x2="1162.5" y2="140.9"><stop offset="0.000" stop-color="#ffffff"/><stop offset="0.143" stop-color="#d1ffc0"/><stop offset="0.286" stop-color="#abff8e"/><stop offset="0.429" stop-color="#8cff64"/><stop offset="0.571" stop-color="#71ff42"/><stop offset="0.714" stop-color="#5aff26"/><stop offset="0.857" stop-color="#47ff10"/><stop offset="1.000" stop-color="#37ff00"/></linearGradient><linearGradient id="in54" gradientUnits="userSpaceOnUse" x1="1230.4" y1="226.5" x2="1155.9" y2="140.2"><stop offset="0.000" stop-color="#ffffff"/><stop offset="0.143" stop-color="#cdffc0"/><stop offset="0.286" stop-color="#a5ff8c"/><stop offset="0.429" stop-color="#83ff63"/><stop offset="0.571" stop-color="#67ff41"/><stop offset="0.714" stop-color="#4fff25"/><stop offset="0.857" stop-color="#3cff0f"/><stop offset="1.000" stop-color="#2bff00"/></linearGradient><linearGradient id="in55" gradientUnits="userSpaceOnUse" x1="1230.4" y1="226.5" x2="1148.7" y2="139.5"><stop offset="0.000" stop-color="#ffffff"/><stop offset="0.143" stop-color="#c9ffbf"/><stop offset="0.286" stop-color="#9eff8b"/><stop offset="0.429" stop-color="#7aff62"/><stop offset="0.571" stop-color="#5dff40"/><stop offset="0.714" stop-color="#44ff25"/><stop offset="0.857" stop-color="#30ff0f"/><stop offset="1.000" stop-color="#1fff00"/></linearGradient><linearGradient id="in56" gradientUnits="userSpaceOnUse" x1="1230.4" y1="226.5" x2="1140.7" y2="138.7"><stop offset="0.000" stop-color="#ffffff"/><stop offset="0.143" stop-color="#c5ffbe"/><stop offset="0.286" stop-color="#96ff8a"/><stop offset="0.429" stop-color="#70ff60"/><stop offset="0.571" stop-color="#52ff3f"/><stop offset="0.714" stop-color="#38ff24"/><stop offset="0.857" stop-color="#24ff0f"/><stop offset="1.000" stop-color="#13ff00"/></linearGradient><linearGradient id="in57" gradientUnits="userSpaceOnUse" x1="1230.4" y1="226.5" x2="1131.8" y2="137.8"><stop offset="0.000" stop-color="#ffffff"/><stop offset="0.143" stop-color="#c0ffbd"/><stop offset="0.286" stop-color="#8eff88"/><stop offset="0.429" stop-color="#66ff5f"/><stop offset="0.571" stop-color="#46ff3e"/><stop offset="0.714" stop-color="#2cff23"/><stop offset="0.857" stop-color="#17ff0e"/><stop offset="1.000" stop-color="#07ff00"/></linearGradient><linearGradient id="in58" gradientUnits="userSpaceOnUse" x1="1230.4" y1="226.5" x2="1125.2" y2="139.5"><stop offset="0.000" stop-color="#ffffff"/><stop offset="0.143" stop-color="#bcffbd"/><stop offset="0.286" stop-color="#88ff8a"/><stop offset="0.429" stop-color="#5eff61"/><stop offset="0.571" stop-color="#3dff40"/><stop offset="0.714" stop-color="#23ff26"/><stop offset="0.857" stop-color="#0eff11"/><stop offset="1.000" stop-color="#00ff02"/></linearGradient><linearGradient id="in59" gradientUnits="userSpaceOnUse" x1="1230.4" y1="226.5" x2="1127.3" y2="148.3"><stop offset="0.000" stop-color="#ffffff"/><stop offset="0.143" stop-color="#bdffc3"/><stop offset="0.286" stop-color="#8aff93"/><stop offset="0.429" stop-color="#60ff6c"/><stop offset="0.571" stop-color="#3fff4c"/><stop offset="0.714" stop-color="#24ff33"/><stop offset="0.857" stop-color="#0fff1e"/><stop offset="1.000" stop-color="#00ff0d"/></linearGradient><linearGradient id="in60" gradientUnits="userSpaceOnUse" x1="1230.4" y1="226.5" x2="1129.2" y2="156.2"><stop offset="0.000" stop-color="#ffffff"/><stop offset="0.143" stop-color="#bfffc7"/><stop offset="0.286" stop-color="#8bff9b"/><stop offset="0.429" stop-color="#62ff76"/><stop offset="0.571" stop-color="#40ff58"/><stop offset="0.714" stop-color="#25ff3f"/><stop offset="0.857" stop-color="#0fff2a"/><stop offset="1.000" stop-color="#00ff1a"/></linearGradient><linearGradient id="in61" gradientUnits="userSpaceOnUse" x1="1230.4" y1="226.5" x2="1130.9" y2="163.4"><stop offset="0.000" stop-color="#ffffff"/><stop offset="0.143" stop-color="#c0ffcc"/><stop offset="0.286" stop-color="#8dffa2"/><stop offset="0.429" stop-color="#63ff80"/><stop offset="0.571" stop-color="#41ff63"/><stop offset="0.714" stop-color="#25ff4b"/><stop offset="0.857" stop-color="#0fff37"/><stop offset="1.000" stop-color="#00ff26"/></linearGradient><linearGradient id="in62" gradientUnits="userSpaceOnUse" x1="1230.4" y1="226.5" x2="1132.5" y2="170.0"><stop offset="0.000" stop-color="#ffffff"/><stop offset="0.143" stop-color="#c1ffd0"/><stop offset="0.286" stop-color="#8effaa"/><stop offset="0.429" stop-color="#64ff89"/><stop offset="0.571" stop-color="#42ff6e"/><stop offset="0.714" stop-color="#26ff57"/><stop offset="0.857" stop-color="#10ff43"/><stop offset="1.000" stop-color="#00ff33"/></linearGradient><linearGradient id="in63" gradientUnits="userSpaceOnUse" x1="1230.4" y1="226.5" x2="1133.9" y2="176.1"><stop offset="0.000" stop-color="#ffffff"/><stop offset="0.143" stop-color="#c2ffd4"/><stop offset="0.286" stop-color="#8fffb0"/><stop offset="0.429" stop-color="#66ff92"/><stop offset="0.571" stop-color="#43ff79"/><stop offset="0.714" stop-color="#27ff63"/><stop offset="0.857" stop-color="#10ff50"/><stop offset="1.000" stop-color="#00ff3f"/></linearGradient><linearGradient id="in64" gradientUnits="userSpaceOnUse" x1="1230.4" y1="226.5" x2="1135.3" y2="181.8"><stop offset="0.000" stop-color="#ffffff"/><stop offset="0.143" stop-color="#c3ffd8"/><stop offset="0.286" stop-color="#91ffb7"/><stop offset="0.429" stop-color="#67ff9b"/><stop offset="0.571" stop-color="#44ff83"/><stop offset="0.714" stop-color="#28ff6e"/><stop offset="0.857" stop-color="#10ff5c"/><stop offset="1.000" stop-color="#00ff4c"/></linearGradient><linearGradient id="in65" gradientUnits="userSpaceOnUse" x1="1230.4" y1="226.5" x2="1136.5" y2="187.1"><stop offset="0.000" stop-color="#ffffff"/><stop offset="0.143" stop-color="#c3ffdb"/><stop offset="0.286" stop-color="#92ffbd"/><stop offset="0.429" stop-color="#68ffa3"/><stop offset="0.571" stop-color="#45ff8c"/><stop offset="0.714" stop-color="#28ff79"/><stop offset="0.857" stop-color="#11ff68"/><stop offset="1.000" stop-color="#00ff59"/></linearGradient><linearGradient id="in66" gradientUnits="userSpaceOnUse" x1="1230.4" y1="226.5" x2="1137.7" y2="192.1"><stop offset="0.000" stop-color="#ffffff"/><stop offset="0.143" stop-color="#c4ffdf"/><stop offset="0.286" stop-color="#93ffc3"/><stop offset="0.429" stop-color="#69ffab"/><stop offset="0.571" stop-color="#46ff96"/><stop offset="0.714" stop-color="#29ff84"/><stop offset="0.857" stop-color="#11ff73"/><stop offset="1.000" stop-color="#00ff65"/></linearGradient><linearGradient id="in67" gradientUnits="userSpaceOnUse" x1="1230.4" y1="226.5" x2="1138.9" y2="196.8"><stop offset="0.000" stop-color="#ffffff"/><stop offset="0.143" stop-color="#c5ffe2"/><stop offset="0.286" stop-color="#94ffc9"/><stop offset="0.429" stop-color="#6affb3"/><stop offset="0.571" stop-color="#47ff9f"/><stop offset="0.714" stop-color="#29ff8e"/><stop offset="0.857" stop-color="#11ff7f"/><stop offset="1.000" stop-color="#00ff72"/></linearGradient><linearGradient id="in68" gradientUnits="userSpaceOnUse" x1="1230.4" y1="226.5" x2="1139.9" y2="201.3"><stop offset="0.000" stop-color="#ffffff"/><stop offset="0.143" stop-color="#c6ffe5"/><stop offset="0.286" stop-color="#95ffce"/><stop offset="0.429" stop-color="#6bffba"/><stop offset="0.571" stop-color="#48ffa8"/><stop offset="0.714" stop-color="#2aff99"/><stop offset="0.857" stop-color="#12ff8a"/><stop offset="1.000" stop-color="#00ff7e"/></linearGradient><linearGradient id="in69" gradientUnits="userSpaceOnUse" x1="1230.4" y1="226.5" x2="1140.9" y2="205.5"><stop offset="0.000" stop-color="#ffffff"/><stop offset="0.143" stop-color="#c6ffe8"/><stop offset="0.286" stop-color="#96ffd3"/><stop offset="0.429" stop-color="#6cffc1"/><stop offset="0.571" stop-color="#49ffb1"/><stop offset="0.714" stop-color="#2bffa3"/><stop offset="0.857" stop-color="#12ff96"/><stop offset="1.000" stop-color="#00ff8a"/></linearGradient><linearGradient id="in70" gradientUnits="userSpaceOnUse" x1="1230.4" y1="226.5" x2="1141.9" y2="209.6"><stop offset="0.000" stop-color="#ffffff"/><stop offset="0.143" stop-color="#c7ffeb"/><stop offset="0.286" stop-color="#97ffd8"/><stop offset="0.429" stop-color="#6dffc8"/><stop offset="0.571" stop-color="#4affba"/><stop offset="0.714" stop-color="#2bffad"/><stop offset="0.857" stop-color="#12ffa1"/><stop offset="1.000" stop-color="#00ff97"/></linearGradient><linearGradient id="in71" gradientUnits="userSpaceOnUse" x1="1230.4" y1="226.5" x2="1142.9" y2="213.6"><stop offset="0.000" stop-color="#ffffff"/><stop offset="0.143" stop-color="#c8ffed"/><stop offset="0.286" stop-color="#98ffde"/><stop offset="0.429" stop-color="#6effcf"/><stop offset="0.571" stop-color="#4affc3"/><stop offset="0.714" stop-color="#2cffb7"/><stop offset="0.857" stop-color="#12ffad"/><stop offset="1.000" stop-color="#00ffa3"/></linearGradient><linearGradient id="in72" gradientUnits="userSpaceOnUse" x1="1230.4" y1="226.5" x2="1143.8" y2="217.4"><stop offset="0.000" stop-color="#ffffff"/><stop offset="0.143" stop-color="#c8fff0"/><stop offset="0.286" stop-color="#99ffe2"/><stop offset="0.429" stop-color="#6fffd6"/><stop offset="0.571" stop-color="#4bffcb"/><stop offset="0.714" stop-color="#2cffc1"/><stop offset="0.857" stop-color="#13ffb8"/><stop offset="1.000" stop-color="#00ffb0"/></linearGradient><linearGradient id="in73" gradientUnits="userSpaceOnUse" x1="1230.4" y1="226.5" x2="1144.7" y2="221.1"><stop offset="0.000" stop-color="#ffffff"/><stop offset="0.143" stop-color="#c9fff3"/><stop offset="0.286" stop-color="#9affe7"/><stop offset="0.429" stop-color="#70ffdd"/><stop offset="0.571" stop-color="#4cffd4"/><stop offset="0.714" stop-color="#2dffcb"/><stop offset="0.857" stop-color="#13ffc4"/><stop offset="1.000" stop-color="#00ffbc"/></linearGradient><linearGradient id="in74" gradientUnits="userSpaceOnUse" x1="1230.4" y1="226.5" x2="1145.5" y2="224.7"><stop offset="0.000" stop-color="#ffffff"/><stop offset="0.143" stop-color="#cafff5"/><stop offset="0.286" stop-color="#9affec"/><stop offset="0.429" stop-color="#71ffe4"/><stop offset="0.571" stop-color="#4dffdc"/><stop offset="0.714" stop-color="#2effd5"/><stop offset="0.857" stop-color="#13ffcf"/><stop offset="1.000" stop-color="#00ffc9"/></linearGradient><linearGradient id="in75" gradientUnits="userSpaceOnUse" x1="1230.4" y1="226.5" x2="1146.4" y2="228.3"><stop offset="0.000" stop-color="#ffffff"/><stop offset="0.143" stop-color="#cafff8"/><stop offset="0.286" stop-color="#9bfff1"/><stop offset="0.429" stop-color="#72ffeb"/><stop offset="0.571" stop-color="#4effe5"/><stop offset="0.714" stop-color="#2effe0"/><stop offset="0.857" stop-color="#14ffdb"/><stop offset="1.000" stop-color="#00ffd6"/></linearGradient><linearGradient id="in76" gradientUnits="userSpaceOnUse" x1="1230.4" y1="226.5" x2="1147.2" y2="231.7"><stop offset="0.000" stop-color="#ffffff"/><stop offset="0.143" stop-color="#cbfffa"/><stop offset="0.286" stop-color="#9cfff6"/><stop offset="0.429" stop-color="#73fff1"/><stop offset="0.571" stop-color="#4fffee"/><stop offset="0.714" stop-color="#2fffea"/><stop offset="0.857" stop-color="#14ffe7"/><stop offset="1.000" stop-color="#00ffe4"/></linearGradient><linearGradient id="in77" gradientUnits="userSpaceOnUse" x1="1230.4" y1="226.5" x2="1148.0" y2="235.2"><stop offset="0.000" stop-color="#ffffff"/><stop offset="0.143" stop-color="#cbfffd"/><stop offset="0.286" stop-color="#9dfffa"/><stop offset="0.429" stop-color="#74fff8"/><stop offset="0.571" stop-color="#4ffff6"/><stop offset="0.714" stop-color="#2ffff5"/><stop offset="0.857" stop-color="#14fff3"/><stop offset="1.000" stop-color="#00fff1"/></linearGradient><linearGradient id="in78" gradientUnits="userSpaceOnUse" x1="1230.4" y1="226.5" x2="1148.8" y2="238.6"><stop offset="0.000" stop-color="#ffffff"/><stop offset="0.143" stop-color="#ccffff"/><stop offset="0.286" stop-color="#9effff"/><stop offset="0.429" stop-color="#75ffff"/><stop offset="0.571" stop-color="#50ffff"/><stop offset="0.714" stop-color="#30ffff"/><stop offset="0.857" stop-color="#14ffff"/><stop offset="1.000" stop-color="#00ffff"/></linearGradient><linearGradient id="in79" gradientUnits="userSpaceOnUse" x1="1230.4" y1="226.5" x2="1149.6" y2="241.9"><stop offset="0.000" stop-color="#ffffff"/><stop offset="0.143" stop-color="#cbfdff"/><stop offset="0.286" stop-color="#9cfaff"/><stop offset="0.429" stop-color="#73f8ff"/><stop offset="0.571" stop-color="#4ef6ff"/><stop offset="0.714" stop-color="#2ff4ff"/><stop offset="0.857" stop-color="#14f3ff"/><stop offset="1.000" stop-color="#00f1ff"/></linearGradient><linearGradient id="in80" gradientUnits="userSpaceOnUse" x1="1230.4" y1="226.5" x2="1150.4" y2="245.3"><stop offset="0.000" stop-color="#ffffff"/><stop offset="0.143" stop-color="#c9faff"/><stop offset="0.286" stop-color="#9af6ff"/><stop offset="0.429" stop-color="#70f2ff"/><stop offset="0.571" stop-color="#4ceeff"/><stop offset="0.714" stop-color="#2debff"/><stop offset="0.857" stop-color="#13e8ff"/><stop offset="1.000" stop-color="#00e5ff"/></linearGradient><linearGradient id="in81" gradientUnits="userSpaceOnUse" x1="1230.4" y1="226.5" x2="1151.2" y2="248.6"><stop offset="0.000" stop-color="#ffffff"/><stop offset="0.143" stop-color="#c8f8ff"/><stop offset="0.286" stop-color="#98f1ff"/><stop offset="0.429" stop-color="#6eebff"/><stop offset="0.571" stop-color="#4be6ff"/><stop offset="0.714" stop-color="#2ce1ff"/><stop offset="0.857" stop-color="#13ddff"/><stop offset="1.000" stop-color="#00d9ff"/></linearGradient><linearGradient id="in82" gradientUnits="userSpaceOnUse" x1="1230.4" y1="226.5" x2="1152.0" y2="252.0"><stop offset="0.000" stop-color="#ffffff"/><stop offset="0.143" stop-color="#c7f5ff"/><stop offset="0.286" stop-color="#96edff"/><stop offset="0.429" stop-color="#6de5ff"/><stop offset="0.571" stop-color="#49dfff"/><stop offset="0.714" stop-color="#2bd9ff"/><stop offset="0.857" stop-color="#12d3ff"/><stop offset="1.000" stop-color="#00ceff"/></linearGradient><linearGradient id="in83" gradientUnits="userSpaceOnUse" x1="1230.4" y1="226.5" x2="1152.8" y2="255.4"><stop offset="0.000" stop-color="#ffffff"/><stop offset="0.143" stop-color="#c5f3ff"/><stop offset="0.286" stop-color="#94e9ff"/><stop offset="0.429" stop-color="#6be0ff"/><stop offset="0.571" stop-color="#47d7ff"/><stop offset="0.714" stop-color="#2ad0ff"/><stop offset="0.857" stop-color="#11c9ff"/><stop offset="1.000" stop-color="#00c4ff"/></linearGradient><linearGradient id="in84" gradientUnits="userSpaceOnUse" x1="1230.4" y1="226.5" x2="1153.6" y2="258.8"><stop offset="0.000" stop-color="#ffffff"/><stop offset="0.143" stop-color="#c4f1ff"/><stop offset="0.286" stop-color="#92e5ff"/><stop offset="0.429" stop-color="#69daff"/><stop offset="0.571" stop-color="#46d0ff"/><stop offset="0.714" stop-color="#29c8ff"/><stop offset="0.857" stop-color="#11c0ff"/><stop offset="1.000" stop-color="#00baff"/></linearGradient><linearGradient id="in85" gradientUnits="userSpaceOnUse" x1="1230.4" y1="226.5" x2="1154.5" y2="262.2"><stop offset="0.000" stop-color="#ffffff"/><stop offset="0.143" stop-color="#c3efff"/><stop offset="0.286" stop-color="#91e0ff"/><stop offset="0.429" stop-color="#67d4ff"/><stop offset="0.571" stop-color="#44caff"/><stop offset="0.714" stop-color="#28c0ff"/><stop offset="0.857" stop-color="#10b8ff"/><stop offset="1.000" stop-color="#00b0ff"/></linearGradient><linearGradient id="in86" gradientUnits="userSpaceOnUse" x1="1230.4" y1="226.5" x2="1155.3" y2="265.8"><stop offset="0.000" stop-color="#ffffff"/><stop offset="0.143" stop-color="#c1ecff"/><stop offset="0.286" stop-color="#8fdcff"/><stop offset="0.429" stop-color="#65cfff"/><stop offset="0.571" stop-color="#43c3ff"/><stop offset="0.714" stop-color="#27b9ff"/><stop offset="0.857" stop-color="#10b0ff"/><stop offset="1.000" stop-color="#00a8ff"/></linearGradient><linearGradient id="in87" gradientUnits="userSpaceOnUse" x1="1230.4" y1="226.5" x2="1156.2" y2="269.4"><stop offset="0.000" stop-color="#ffffff"/><stop offset="0.143" stop-color="#c0eaff"/><stop offset="0.286" stop-color="#8dd8ff"/><stop offset="0.429" stop-color="#63c9ff"/><stop offset="0.571" stop-color="#41bcff"/><stop offset="0.714" stop-color="#26b1ff"/><stop offset="0.857" stop-color="#0fa7ff"/><stop offset="1.000" stop-color="#009fff"/></linearGradient><linearGradient id="in88" gradientUnits="userSpaceOnUse" x1="1230.4" y1="226.5" x2="1157.1" y2="273.1"><stop offset="0.000" stop-color="#ffffff"/><stop offset="0.143" stop-color="#bfe7ff"/><stop offset="0.286" stop-color="#8bd4ff"/><stop offset="0.429" stop-color="#62c4ff"/><stop offset="0.571" stop-color="#40b6ff"/><stop offset="0.714" stop-color="#25aaff"/><stop offset="0.857" stop-color="#0fa0ff"/><stop offset="1.000" stop-color="#0097ff"/></linearGradient><linearGradient id="in89" gradientUnits="userSpaceOnUse" x1="1230.4" y1="226.5" x2="1158.0" y2="276.9"><stop offset="0.000" stop-color="#ffffff"/><stop offset="0.143" stop-color="#bde5ff"/><stop offset="0.286" stop-color="#89d0ff"/><stop offset="0.429" stop-color="#60beff"/><stop offset="0.571" stop-color="#3eb0ff"/><stop offset="0.714" stop-color="#24a3ff"/><stop offset="0.857" stop-color="#0f98ff"/><stop offset="1.000" stop-color="#008fff"/></linearGradient><linearGradient id="in90" gradientUnits="userSpaceOnUse" x1="1230.4" y1="226.5" x2="1158.9" y2="280.8"><stop offset="0.000" stop-color="#ffffff"/><stop offset="0.143" stop-color="#bce3ff"/><stop offset="0.286" stop-color="#87ccff"/><stop offset="0.429" stop-color="#5eb9ff"/><stop offset="0.571" stop-color="#3da9ff"/><stop offset="0.714" stop-color="#239cff"/><stop offset="0.857" stop-color="#0e91ff"/><stop offset="1.000" stop-color="#0087ff"/></linearGradient><linearGradient id="in91" gradientUnits="userSpaceOnUse" x1="1230.4" y1="226.5" x2="1159.9" y2="284.9"><stop offset="0.000" stop-color="#ffffff"/><stop offset="0.143" stop-color="#bae0ff"/><stop offset="0.286" stop-color="#86c8ff"/><stop offset="0.429" stop-color="#5cb4ff"/><stop offset="0.571" stop-color="#3ca3ff"/><stop offset="0.714" stop-color="#2295ff"/><stop offset="0.857" stop-color="#0e8aff"/><stop offset="1.000" stop-color="#0080ff"/></linearGradient><linearGradient id="in92" gradientUnits="userSpaceOnUse" x1="1230.4" y1="226.5" x2="1160.9" y2="289.1"><stop offset="0.000" stop-color="#ffffff"/><stop offset="0.143" stop-color="#b9deff"/><stop offset="0.286" stop-color="#84c3ff"/><stop offset="0.429" stop-color="#5baeff"/><stop offset="0.571" stop-color="#3a9dff"/><stop offset="0.714" stop-color="#218fff"/><stop offset="0.857" stop-color="#0d83ff"/><stop offset="1.000" stop-color="#0078ff"/></linearGradient><linearGradient id="in93" gradientUnits="userSpaceOnUse" x1="1230.4" y1="226.5" x2="1161.9" y2="293.5"><stop offset="0.000" stop-color="#ffffff"/><stop offset="0.143" stop-color="#b7dbff"/><stop offset="0.286" stop-color="#82bfff"/><stop offset="0.429" stop-color="#59a9ff"/><stop offset="0.571" stop-color="#3997ff"/><stop offset="0.714" stop-color="#2088ff"/><stop offset="0.857" stop-color="#0d7cff"/><stop offset="1.000" stop-color="#0071ff"/></linearGradient><linearGradient id="in94" gradientUnits="userSpaceOnUse" x1="1230.4" y1="226.5" x2="1163.1" y2="298.2"><stop offset="0.000" stop-color="#ffffff"/><stop offset="0.143" stop-color="#b6d8ff"/><stop offset="0.286" stop-color="#80bbff"/><stop offset="0.429" stop-color="#57a3ff"/><stop offset="0.571" stop-color="#3791ff"/><stop offset="0.714" stop-color="#1f81ff"/><stop offset="0.857" stop-color="#0d75ff"/><stop offset="1.000" stop-color="#006aff"/></linearGradient><linearGradient id="in95" gradientUnits="userSpaceOnUse" x1="1230.4" y1="226.5" x2="1164.2" y2="303.2"><stop offset="0.000" stop-color="#ffffff"/><stop offset="0.143" stop-color="#b4d5ff"/><stop offset="0.286" stop-color="#7eb6ff"/><stop offset="0.429" stop-color="#559eff"/><stop offset="0.571" stop-color="#368aff"/><stop offset="0.714" stop-color="#1e7bff"/><stop offset="0.857" stop-color="#0c6eff"/><stop offset="1.000" stop-color="#0063ff"/></linearGradient><linearGradient id="in96" gradientUnits="userSpaceOnUse" x1="1230.4" y1="226.5" x2="1165.5" y2="308.4"><stop offset="0.000" stop-color="#ffffff"/><stop offset="0.143" stop-color="#b3d2ff"/><stop offset="0.286" stop-color="#7cb1ff"/><stop offset="0.429" stop-color="#5398ff"/><stop offset="0.571" stop-color="#3584ff"/><stop offset="0.714" stop-color="#1d74ff"/><stop offset="0.857" stop-color="#0c67ff"/><stop offset="1.000" stop-color="#005cff"/></linearGradient><linearGradient id="in97" gradientUnits="userSpaceOnUse" x1="1230.4" y1="226.5" x2="1166.8" y2="314.0"><stop offset="0.000" stop-color="#ffffff"/><stop offset="0.143" stop-color="#b1cfff"/><stop offset="0.286" stop-color="#7aacff"/><stop offset="0.429" stop-color="#5192ff"/><stop offset="0.571" stop-color="#337eff"/><stop offset="0.714" stop-color="#1c6eff"/><stop offset="0.857" stop-color="#0b60ff"/><stop offset="1.000" stop-color="#0055ff"/></linearGradient><linearGradient id="in98" gradientUnits="userSpaceOnUse" x1="1230.4" y1="226.5" x2="1168.3" y2="320.0"><stop offset="0.000" stop-color="#ffffff"/><stop offset="0.143" stop-color="#afccff"/><stop offset="0.286" stop-color="#77a7ff"/><stop offset="0.429" stop-color="#4f8cff"/><stop offset="0.571" stop-color="#3277ff"/><stop offset="0.714" stop-color="#1b67ff"/><stop offset="0.857" stop-color="#0b5aff"/><stop offset="1.000" stop-color="#004fff"/></linearGradient><linearGradient id="in99" gradientUnits="userSpaceOnUse" x1="1230.4" y1="226.5" x2="1169.8" y2="326.5"><stop offset="0.000" stop-color="#ffffff"/><stop offset="0.143" stop-color="#adc8ff"/><stop offset="0.286" stop-color="#75a2ff"/><stop offset="0.429" stop-color="#4d86ff"/><stop offset="0.571" stop-color="#3071ff"/><stop offset="0.714" stop-color="#1a60ff"/><stop offset="0.857" stop-color="#0a53ff"/><stop offset="1.000" stop-color="#0048ff"/></linearGradient><linearGradient id="in100" gradientUnits="userSpaceOnUse" x1="1230.4" y1="226.5" x2="1171.5" y2="333.6"><stop offset="0.000" stop-color="#ffffff"/><stop offset="0.143" stop-color="#abc5ff"/><stop offset="0.286" stop-color="#739dff"/><stop offset="0.429" stop-color="#4b80ff"/><stop offset="0.571" stop-color="#2f6aff"/><stop offset="0.714" stop-color="#1959ff"/><stop offset="0.857" stop-color="#0a4cff"/><stop offset="1.000" stop-color="#0041ff"/></linearGradient><linearGradient id="in101" gradientUnits="userSpaceOnUse" x1="1230.4" y1="226.5" x2="1173.4" y2="341.4"><stop offset="0.000" stop-color="#ffffff"/><stop offset="0.143" stop-color="#a9c1ff"/><stop offset="0.286" stop-color="#7097ff"/><stop offset="0.429" stop-color="#4979ff"/><stop offset="0.571" stop-color="#2d63ff"/><stop offset="0.714" stop-color="#1852ff"/><stop offset="0.857" stop-color="#0a45ff"/><stop offset="1.000" stop-color="#003aff"/></linearGradient><linearGradient id="in102" gradientUnits="userSpaceOnUse" x1="1230.4" y1="226.5" x2="1175.4" y2="350.0"><stop offset="0.000" stop-color="#ffffff"/><stop offset="0.143" stop-color="#a6bcff"/><stop offset="0.286" stop-color="#6d91ff"/><stop offset="0.429" stop-color="#4773ff"/><stop offset="0.571" stop-color="#2b5cff"/><stop offset="0.714" stop-color="#174bff"/><stop offset="0.857" stop-color="#093eff"/><stop offset="1.000" stop-color="#0034ff"/></linearGradient><linearGradient id="in103" gradientUnits="userSpaceOnUse" x1="1230.4" y1="226.5" x2="1177.7" y2="359.6"><stop offset="0.000" stop-color="#ffffff"/><stop offset="0.143" stop-color="#a3b8ff"/><stop offset="0.286" stop-color="#6a8aff"/><stop offset="0.429" stop-color="#446bff"/><stop offset="0.571" stop-color="#2a55ff"/><stop offset="0.714" stop-color="#1644ff"/><stop offset="0.857" stop-color="#0937ff"/><stop offset="1.000" stop-color="#002dff"/></linearGradient><linearGradient id="in104" gradientUnits="userSpaceOnUse" x1="1230.4" y1="226.5" x2="1180.3" y2="370.4"><stop offset="0.000" stop-color="#ffffff"/><stop offset="0.143" stop-color="#a1b3ff"/><stop offset="0.286" stop-color="#6784ff"/><stop offset="0.429" stop-color="#4264ff"/><stop offset="0.571" stop-color="#284dff"/><stop offset="0.714" stop-color="#153dff"/><stop offset="0.857" stop-color="#0830ff"/><stop offset="1.000" stop-color="#0026ff"/></linearGradient><linearGradient id="in105" gradientUnits="userSpaceOnUse" x1="1230.4" y1="226.5" x2="1183.2" y2="382.8"><stop offset="0.000" stop-color="#ffffff"/><stop offset="0.143" stop-color="#9dadff"/><stop offset="0.286" stop-color="#647cff"/><stop offset="0.429" stop-color="#3f5cff"/><stop offset="0.571" stop-color="#2646ff"/><stop offset="0.714" stop-color="#1435ff"/><stop offset="0.857" stop-color="#0829ff"/><stop offset="1.000" stop-color="#001fff"/></linearGradient><linearGradient id="in106" gradientUnits="userSpaceOnUse" x1="1230.4" y1="226.5" x2="1186.6" y2="397.0"><stop offset="0.000" stop-color="#ffffff"/><stop offset="0.143" stop-color="#9aa7ff"/><stop offset="0.286" stop-color="#6074ff"/><stop offset="0.429" stop-color="#3c54ff"/><stop offset="0.571" stop-color="#243dff"/><stop offset="0.714" stop-color="#132dff"/><stop offset="0.857" stop-color="#0721ff"/><stop offset="1.000" stop-color="#0018ff"/></linearGradient><linearGradient id="in107" gradientUnits="userSpaceOnUse" x1="1230.4" y1="226.5" x2="1190.6" y2="413.7"><stop offset="0.000" stop-color="#ffffff"/><stop offset="0.143" stop-color="#96a0ff"/><stop offset="0.286" stop-color="#5c6cff"/><stop offset="0.429" stop-color="#394bff"/><stop offset="0.571" stop-color="#2235ff"/><stop offset="0.714" stop-color="#1225ff"/><stop offset="0.857" stop-color="#071aff"/><stop offset="1.000" stop-color="#0011ff"/></linearGradient><linearGradient id="in108" gradientUnits="userSpaceOnUse" x1="1230.4" y1="226.5" x2="1195.4" y2="433.6"><stop offset="0.000" stop-color="#ffffff"/><stop offset="0.143" stop-color="#9198ff"/><stop offset="0.286" stop-color="#5862ff"/><stop offset="0.429" stop-color="#3641ff"/><stop offset="0.571" stop-color="#202cff"/><stop offset="0.714" stop-color="#111dff"/><stop offset="0.857" stop-color="#0612ff"/><stop offset="1.000" stop-color="#000bff"/></linearGradient><linearGradient id="in109" gradientUnits="userSpaceOnUse" x1="1230.4" y1="226.5" x2="1201.2" y2="457.9"><stop offset="0.000" stop-color="#ffffff"/><stop offset="0.143" stop-color="#8c8fff"/><stop offset="0.286" stop-color="#5358ff"/><stop offset="0.429" stop-color="#3237ff"/><stop offset="0.571" stop-color="#1d23ff"/><stop offset="0.714" stop-color="#0f15ff"/><stop offset="0.857" stop-color="#060bff"/><stop offset="1.000" stop-color="#0004ff"/></linearGradient><linearGradient id="in110" gradientUnits="userSpaceOnUse" x1="1230.4" y1="226.5" x2="1209.3" y2="478.0"><stop offset="0.000" stop-color="#ffffff"/><stop offset="0.143" stop-color="#8988ff"/><stop offset="0.286" stop-color="#5150ff"/><stop offset="0.429" stop-color="#3130ff"/><stop offset="0.571" stop-color="#1d1cff"/><stop offset="0.714" stop-color="#100eff"/><stop offset="0.857" stop-color="#0705ff"/><stop offset="1.000" stop-color="#0100ff"/></linearGradient><linearGradient id="in111" gradientUnits="userSpaceOnUse" x1="1230.4" y1="226.5" x2="1220.3" y2="468.4"><stop offset="0.000" stop-color="#ffffff"/><stop offset="0.143" stop-color="#908aff"/><stop offset="0.286" stop-color="#5952ff"/><stop offset="0.429" stop-color="#3a31ff"/><stop offset="0.571" stop-color="#251cff"/><stop offset="0.714" stop-color="#180fff"/><stop offset="0.857" stop-color="#0e06ff"/><stop offset="1.000" stop-color="#0700ff"/></linearGradient><linearGradient id="in112" gradientUnits="userSpaceOnUse" x1="1230.4" y1="226.5" x2="1230.4" y2="459.5"><stop offset="0.000" stop-color="#ffffff"/><stop offset="0.143" stop-color="#968dff"/><stop offset="0.286" stop-color="#6154ff"/><stop offset="0.429" stop-color="#4232ff"/><stop offset="0.571" stop-color="#2e1dff"/><stop offset="0.714" stop-color="#200fff"/><stop offset="0.857" stop-color="#1606ff"/><stop offset="1.000" stop-color="#0e00ff"/></linearGradient><linearGradient id="in113" gradientUnits="userSpaceOnUse" x1="1230.4" y1="226.5" x2="1239.8" y2="451.2"><stop offset="0.000" stop-color="#ffffff"/><stop offset="0.143" stop-color="#9c8fff"/><stop offset="0.286" stop-color="#6955ff"/><stop offset="0.429" stop-color="#4a34ff"/><stop offset="0.571" stop-color="#361eff"/><stop offset="0.714" stop-color="#2810ff"/><stop offset="0.857" stop-color="#1e06ff"/><stop offset="1.000" stop-color="#1600ff"/></linearGradient><linearGradient id="in114" gradientUnits="userSpaceOnUse" x1="1230.4" y1="226.5" x2="1248.6" y2="443.4"><stop offset="0.000" stop-color="#ffffff"/><stop offset="0.143" stop-color="#a290ff"/><stop offset="0.286" stop-color="#7057ff"/><stop offset="0.429" stop-color="#5235ff"/><stop offset="0.571" stop-color="#3e1fff"/><stop offset="0.714" stop-color="#3010ff"/><stop offset="0.857" stop-color="#2606ff"/><stop offset="1.000" stop-color="#1e00ff"/></linearGradient><linearGradient id="in115" gradientUnits="userSpaceOnUse" x1="1230.4" y1="226.5" x2="1256.9" y2="436.2"><stop offset="0.000" stop-color="#ffffff"/><stop offset="0.143" stop-color="#a792ff"/><stop offset="0.286" stop-color="#7859ff"/><stop offset="0.429" stop-color="#5a36ff"/><stop offset="0.571" stop-color="#4720ff"/><stop offset="0.714" stop-color="#3911ff"/><stop offset="0.857" stop-color="#2e06ff"/><stop offset="1.000" stop-color="#2600ff"/></linearGradient><linearGradient id="in116" gradientUnits="userSpaceOnUse" x1="1230.4" y1="226.5" x2="1264.7" y2="429.3"><stop offset="0.000" stop-color="#ffffff"/><stop offset="0.143" stop-color="#ac94ff"/><stop offset="0.286" stop-color="#7f5bff"/><stop offset="0.429" stop-color="#6338ff"/><stop offset="0.571" stop-color="#4f21ff"/><stop offset="0.714" stop-color="#4111ff"/><stop offset="0.857" stop-color="#3707ff"/><stop offset="1.000" stop-color="#2f00ff"/></linearGradient><linearGradient id="in117" gradientUnits="userSpaceOnUse" x1="1230.4" y1="226.5" x2="1272.1" y2="422.8"><stop offset="0.000" stop-color="#ffffff"/><stop offset="0.143" stop-color="#b296ff"/><stop offset="0.286" stop-color="#865cff"/><stop offset="0.429" stop-color="#6b39ff"/><stop offset="0.571" stop-color="#5822ff"/><stop offset="0.714" stop-color="#4a12ff"/><stop offset="0.857" stop-color="#4007ff"/><stop offset="1.000" stop-color="#3800ff"/></linearGradient><linearGradient id="in118" gradientUnits="userSpaceOnUse" x1="1230.4" y1="226.5" x2="1279.2" y2="416.6"><stop offset="0.000" stop-color="#ffffff"/><stop offset="0.143" stop-color="#b797ff"/><stop offset="0.286" stop-color="#8d5eff"/><stop offset="0.429" stop-color="#733aff"/><stop offset="0.571" stop-color="#6023ff"/><stop offset="0.714" stop-color="#5312ff"/><stop offset="0.857" stop-color="#4907ff"/><stop offset="1.000" stop-color="#4100ff"/></linearGradient><linearGradient id="in119" gradientUnits="userSpaceOnUse" x1="1230.4" y1="226.5" x2="1286.0" y2="410.6"><stop offset="0.000" stop-color="#ffffff"/><stop offset="0.143" stop-color="#bc99ff"/><stop offset="0.286" stop-color="#945fff"/><stop offset="0.429" stop-color="#7b3bff"/><stop offset="0.571" stop-color="#6923ff"/><stop offset="0.714" stop-color="#5c13ff"/><stop offset="0.857" stop-color="#5207ff"/><stop offset="1.000" stop-color="#4a00ff"/></linearGradient><linearGradient id="in120" gradientUnits="userSpaceOnUse" x1="1230.4" y1="226.5" x2="1292.5" y2="404.9"><stop offset="0.000" stop-color="#ffffff"/><stop offset="0.143" stop-color="#c19bff"/><stop offset="0.286" stop-color="#9b61ff"/><stop offset="0.429" stop-color="#833dff"/><stop offset="0.571" stop-color="#7224ff"/><stop offset="0.714" stop-color="#6513ff"/><stop offset="0.857" stop-color="#5b07ff"/><stop offset="1.000" stop-color="#5400ff"/></linearGradient><linearGradient id="in121" gradientUnits="userSpaceOnUse" x1="1230.4" y1="226.5" x2="1298.8" y2="399.3"><stop offset="0.000" stop-color="#ffffff"/><stop offset="0.143" stop-color="#c59cff"/><stop offset="0.286" stop-color="#a363ff"/><stop offset="0.429" stop-color="#8b3eff"/><stop offset="0.571" stop-color="#7b25ff"/><stop offset="0.714" stop-color="#6f14ff"/><stop offset="0.857" stop-color="#6508ff"/><stop offset="1.000" stop-color="#5d00ff"/></linearGradient><linearGradient id="in122" gradientUnits="userSpaceOnUse" x1="1230.4" y1="226.5" x2="1304.9" y2="393.9"><stop offset="0.000" stop-color="#ffffff"/><stop offset="0.143" stop-color="#ca9eff"/><stop offset="0.286" stop-color="#aa64ff"/><stop offset="0.429" stop-color="#943fff"/><stop offset="0.571" stop-color="#8426ff"/><stop offset="0.714" stop-color="#7814ff"/><stop offset="0.857" stop-color="#6f08ff"/><stop offset="1.000" stop-color="#6800ff"/></linearGradient><linearGradient id="in123" gradientUnits="userSpaceOnUse" x1="1230.4" y1="226.5" x2="1310.9" y2="388.7"><stop offset="0.000" stop-color="#ffffff"/><stop offset="0.143" stop-color="#cf9fff"/><stop offset="0.286" stop-color="#b166ff"/><stop offset="0.429" stop-color="#9c41ff"/><stop offset="0.571" stop-color="#8d27ff"/><stop offset="0.714" stop-color="#8215ff"/><stop offset="0.857" stop-color="#7908ff"/><stop offset="1.000" stop-color="#7300ff"/></linearGradient><linearGradient id="in124" gradientUnits="userSpaceOnUse" x1="1230.4" y1="226.5" x2="1316.7" y2="383.6"><stop offset="0.000" stop-color="#ffffff"/><stop offset="0.143" stop-color="#d4a1ff"/><stop offset="0.286" stop-color="#b867ff"/><stop offset="0.429" stop-color="#a542ff"/><stop offset="0.571" stop-color="#9728ff"/><stop offset="0.714" stop-color="#8d15ff"/><stop offset="0.857" stop-color="#8408ff"/><stop offset="1.000" stop-color="#7e00ff"/></linearGradient><linearGradient id="in125" gradientUnits="userSpaceOnUse" x1="1230.4" y1="226.5" x2="1322.4" y2="378.5"><stop offset="0.000" stop-color="#ffffff"/><stop offset="0.143" stop-color="#d8a2ff"/><stop offset="0.286" stop-color="#bf69ff"/><stop offset="0.429" stop-color="#ae43ff"/><stop offset="0.571" stop-color="#a129ff"/><stop offset="0.714" stop-color="#9716ff"/><stop offset="0.857" stop-color="#9009ff"/><stop offset="1.000" stop-color="#8900ff"/></linearGradient><linearGradient id="in126" gradientUnits="userSpaceOnUse" x1="1230.4" y1="226.5" x2="1328.1" y2="373.6"><stop offset="0.000" stop-color="#ffffff"/><stop offset="0.143" stop-color="#dda4ff"/><stop offset="0.286" stop-color="#c76bff"/><stop offset="0.429" stop-color="#b745ff"/><stop offset="0.571" stop-color="#ab2aff"/><stop offset="0.714" stop-color="#a317ff"/><stop offset="0.857" stop-color="#9b09ff"/><stop offset="1.000" stop-color="#9600ff"/></linearGradient><linearGradient id="in127" gradientUnits="userSpaceOnUse" x1="1230.4" y1="226.5" x2="1333.7" y2="368.7"><stop offset="0.000" stop-color="#ffffff"/><stop offset="0.143" stop-color="#e2a5ff"/><stop offset="0.286" stop-color="#ce6cff"/><stop offset="0.429" stop-color="#c146ff"/><stop offset="0.571" stop-color="#b62bff"/><stop offset="0.714" stop-color="#ae17ff"/><stop offset="0.857" stop-color="#a809ff"/><stop offset="1.000" stop-color="#a300ff"/></linearGradient><linearGradient id="in128" gradientUnits="userSpaceOnUse" x1="1230.4" y1="226.5" x2="1339.2" y2="363.8"><stop offset="0.000" stop-color="#ffffff"/><stop offset="0.143" stop-color="#e7a7ff"/><stop offset="0.286" stop-color="#d66eff"/><stop offset="0.429" stop-color="#ca47ff"/><stop offset="0.571" stop-color="#c12cff"/><stop offset="0.714" stop-color="#ba18ff"/><stop offset="0.857" stop-color="#b509ff"/><stop offset="1.000" stop-color="#b000ff"/></linearGradient><linearGradient id="in129" gradientUnits="userSpaceOnUse" x1="1230.4" y1="226.5" x2="1344.7" y2="359.0"><stop offset="0.000" stop-color="#ffffff"/><stop offset="0.143" stop-color="#eca8ff"/><stop offset="0.286" stop-color="#de70ff"/><stop offset="0.429" stop-color="#d549ff"/><stop offset="0.571" stop-color="#cd2dff"/><stop offset="0.714" stop-color="#c718ff"/><stop offset="0.857" stop-color="#c30aff"/><stop offset="1.000" stop-color="#bf00ff"/></linearGradient><linearGradient id="in130" gradientUnits="userSpaceOnUse" x1="1230.4" y1="226.5" x2="1350.2" y2="354.1"><stop offset="0.000" stop-color="#ffffff"/><stop offset="0.143" stop-color="#f1aaff"/><stop offset="0.286" stop-color="#e772ff"/><stop offset="0.429" stop-color="#df4aff"/><stop offset="0.571" stop-color="#d92eff"/><stop offset="0.714" stop-color="#d519ff"/><stop offset="0.857" stop-color="#d10aff"/><stop offset="1.000" stop-color="#ce00ff"/></linearGradient><linearGradient id="in131" gradientUnits="userSpaceOnUse" x1="1230.4" y1="226.5" x2="1355.7" y2="349.3"><stop offset="0.000" stop-color="#ffffff"/><stop offset="0.143" stop-color="#f6acff"/><stop offset="0.286" stop-color="#ef74ff"/><stop offset="0.429" stop-color="#ea4cff"/><stop offset="0.571" stop-color="#e62fff"/><stop offset="0.714" stop-color="#e31aff"/><stop offset="0.857" stop-color="#e10aff"/><stop offset="1.000" stop-color="#df00ff"/></linearGradient><linearGradient id="in132" gradientUnits="userSpaceOnUse" x1="1230.4" y1="226.5" x2="1361.3" y2="344.4"><stop offset="0.000" stop-color="#ffffff"/><stop offset="0.143" stop-color="#fbadff"/><stop offset="0.286" stop-color="#f876ff"/><stop offset="0.429" stop-color="#f64eff"/><stop offset="0.571" stop-color="#f430ff"/><stop offset="0.714" stop-color="#f31bff"/><stop offset="0.857" stop-color="#f20bff"/><stop offset="1.000" stop-color="#f100ff"/></linearGradient><linearGradient id="in133" gradientUnits="userSpaceOnUse" x1="1230.4" y1="226.5" x2="1366.9" y2="339.4"><stop offset="0.000" stop-color="#ffffff"/><stop offset="0.143" stop-color="#ffaefe"/><stop offset="0.286" stop-color="#ff76fd"/><stop offset="0.429" stop-color="#ff4efc"/><stop offset="0.571" stop-color="#ff31fb"/><stop offset="0.714" stop-color="#ff1bfb"/><stop offset="0.857" stop-color="#ff0bfa"/><stop offset="1.000" stop-color="#ff00fa"/></linearGradient><linearGradient id="in134" gradientUnits="userSpaceOnUse" x1="1230.4" y1="226.5" x2="1372.6" y2="334.4"><stop offset="0.000" stop-color="#ffffff"/><stop offset="0.143" stop-color="#ffacf8"/><stop offset="0.286" stop-color="#ff74f3"/><stop offset="0.429" stop-color="#ff4cf0"/><stop offset="0.571" stop-color="#ff30ed"/><stop offset="0.714" stop-color="#ff1aea"/><stop offset="0.857" stop-color="#ff0ae9"/><stop offset="1.000" stop-color="#ff00e7"/></linearGradient><linearGradient id="in135" gradientUnits="userSpaceOnUse" x1="1230.4" y1="226.5" x2="1378.4" y2="329.4"><stop offset="0.000" stop-color="#ffffff"/><stop offset="0.143" stop-color="#ffaaf3"/><stop offset="0.286" stop-color="#ff72ea"/><stop offset="0.429" stop-color="#ff4ae4"/><stop offset="0.571" stop-color="#ff2edf"/><stop offset="0.714" stop-color="#ff19db"/><stop offset="0.857" stop-color="#ff0ad8"/><stop offset="1.000" stop-color="#ff00d5"/></linearGradient><linearGradient id="in136" gradientUnits="userSpaceOnUse" x1="1230.4" y1="226.5" x2="1384.3" y2="324.2"><stop offset="0.000" stop-color="#ffffff"/><stop offset="0.143" stop-color="#ffa8ed"/><stop offset="0.286" stop-color="#ff70e1"/><stop offset="0.429" stop-color="#ff49d9"/><stop offset="0.571" stop-color="#ff2dd2"/><stop offset="0.714" stop-color="#ff18cd"/><stop offset="0.857" stop-color="#ff0ac8"/><stop offset="1.000" stop-color="#ff00c5"/></linearGradient><linearGradient id="in137" gradientUnits="userSpaceOnUse" x1="1230.4" y1="226.5" x2="1390.3" y2="318.9"><stop offset="0.000" stop-color="#ffffff"/><stop offset="0.143" stop-color="#ffa6e8"/><stop offset="0.286" stop-color="#ff6dd9"/><stop offset="0.429" stop-color="#ff47cd"/><stop offset="0.571" stop-color="#ff2bc5"/><stop offset="0.714" stop-color="#ff18bf"/><stop offset="0.857" stop-color="#ff09b9"/><stop offset="1.000" stop-color="#ff00b5"/></linearGradient><linearGradient id="in138" gradientUnits="userSpaceOnUse" x1="1230.4" y1="226.5" x2="1396.5" y2="313.4"><stop offset="0.000" stop-color="#ffffff"/><stop offset="0.143" stop-color="#ffa4e3"/><stop offset="0.286" stop-color="#ff6bd0"/><stop offset="0.429" stop-color="#ff45c3"/><stop offset="0.571" stop-color="#ff2ab9"/><stop offset="0.714" stop-color="#ff17b1"/><stop offset="0.857" stop-color="#ff09ab"/><stop offset="1.000" stop-color="#ff00a6"/></linearGradient><linearGradient id="in139" gradientUnits="userSpaceOnUse" x1="1230.4" y1="226.5" x2="1403.0" y2="307.7"><stop offset="0.000" stop-color="#ffffff"/><stop offset="0.143" stop-color="#ffa2dd"/><stop offset="0.286" stop-color="#ff69c7"/><stop offset="0.429" stop-color="#ff43b8"/><stop offset="0.571" stop-color="#ff29ad"/><stop offset="0.714" stop-color="#ff16a4"/><stop offset="0.857" stop-color="#ff099d"/><stop offset="1.000" stop-color="#ff0098"/></linearGradient><linearGradient id="in140" gradientUnits="userSpaceOnUse" x1="1230.4" y1="226.5" x2="1409.6" y2="301.9"><stop offset="0.000" stop-color="#ffffff"/><stop offset="0.143" stop-color="#ffa0d8"/><stop offset="0.286" stop-color="#ff67bf"/><stop offset="0.429" stop-color="#ff41ae"/><stop offset="0.571" stop-color="#ff28a1"/><stop offset="0.714" stop-color="#ff1598"/><stop offset="0.857" stop-color="#ff0890"/><stop offset="1.000" stop-color="#ff008a"/></linearGradient><linearGradient id="in141" gradientUnits="userSpaceOnUse" x1="1230.4" y1="226.5" x2="1416.6" y2="295.8"><stop offset="0.000" stop-color="#ffffff"/><stop offset="0.143" stop-color="#ff9ed2"/><stop offset="0.286" stop-color="#ff65b6"/><stop offset="0.429" stop-color="#ff40a3"/><stop offset="0.571" stop-color="#ff2696"/><stop offset="0.714" stop-color="#ff148b"/><stop offset="0.857" stop-color="#ff0883"/><stop offset="1.000" stop-color="#ff007d"/></linearGradient><linearGradient id="in142" gradientUnits="userSpaceOnUse" x1="1230.4" y1="226.5" x2="1423.9" y2="289.4"><stop offset="0.000" stop-color="#ffffff"/><stop offset="0.143" stop-color="#ff9ccc"/><stop offset="0.286" stop-color="#ff62ae"/><stop offset="0.429" stop-color="#ff3e99"/><stop offset="0.571" stop-color="#ff258b"/><stop offset="0.714" stop-color="#ff1480"/><stop offset="0.857" stop-color="#ff0877"/><stop offset="1.000" stop-color="#ff0070"/></linearGradient><linearGradient id="in143" gradientUnits="userSpaceOnUse" x1="1230.4" y1="226.5" x2="1431.5" y2="282.7"><stop offset="0.000" stop-color="#ffffff"/><stop offset="0.143" stop-color="#ff9ac7"/><stop offset="0.286" stop-color="#ff60a5"/><stop offset="0.429" stop-color="#ff3c8f"/><stop offset="0.571" stop-color="#ff2480"/><stop offset="0.714" stop-color="#ff1374"/><stop offset="0.857" stop-color="#ff076b"/><stop offset="1.000" stop-color="#ff0064"/></linearGradient><linearGradient id="in144" gradientUnits="userSpaceOnUse" x1="1230.4" y1="226.5" x2="1439.6" y2="275.6"><stop offset="0.000" stop-color="#ffffff"/><stop offset="0.143" stop-color="#ff98c1"/><stop offset="0.286" stop-color="#ff5e9d"/><stop offset="0.429" stop-color="#ff3a85"/><stop offset="0.571" stop-color="#ff2375"/><stop offset="0.714" stop-color="#ff1269"/><stop offset="0.857" stop-color="#ff0760"/><stop offset="1.000" stop-color="#ff0058"/></linearGradient><linearGradient id="in145" gradientUnits="userSpaceOnUse" x1="1230.4" y1="226.5" x2="1448.1" y2="268.0"><stop offset="0.000" stop-color="#ffffff"/><stop offset="0.143" stop-color="#ff95ba"/><stop offset="0.286" stop-color="#ff5c94"/><stop offset="0.429" stop-color="#ff397b"/><stop offset="0.571" stop-color="#ff216a"/><stop offset="0.714" stop-color="#ff125e"/><stop offset="0.857" stop-color="#ff0754"/><stop offset="1.000" stop-color="#ff004d"/></linearGradient><linearGradient id="in146" gradientUnits="userSpaceOnUse" x1="1230.4" y1="226.5" x2="1457.3" y2="260.0"><stop offset="0.000" stop-color="#ffffff"/><stop offset="0.143" stop-color="#ff93b4"/><stop offset="0.286" stop-color="#ff598b"/><stop offset="0.429" stop-color="#ff3771"/><stop offset="0.571" stop-color="#ff2060"/><stop offset="0.714" stop-color="#ff1153"/><stop offset="0.857" stop-color="#ff0749"/><stop offset="1.000" stop-color="#ff0042"/></linearGradient><linearGradient id="in147" gradientUnits="userSpaceOnUse" x1="1230.4" y1="226.5" x2="1467.1" y2="251.4"><stop offset="0.000" stop-color="#ffffff"/><stop offset="0.143" stop-color="#ff90ad"/><stop offset="0.286" stop-color="#ff5782"/><stop offset="0.429" stop-color="#ff3567"/><stop offset="0.571" stop-color="#ff1f55"/><stop offset="0.714" stop-color="#ff1048"/><stop offset="0.857" stop-color="#ff063f"/><stop offset="1.000" stop-color="#ff0037"/></linearGradient><linearGradient id="in148" gradientUnits="userSpaceOnUse" x1="1230.4" y1="226.5" x2="1477.7" y2="242.1"><stop offset="0.000" stop-color="#ffffff"/><stop offset="0.143" stop-color="#ff8ea7"/><stop offset="0.286" stop-color="#ff5579"/><stop offset="0.429" stop-color="#ff335d"/><stop offset="0.571" stop-color="#ff1e4b"/><stop offset="0.714" stop-color="#ff103e"/><stop offset="0.857" stop-color="#ff0634"/><stop offset="1.000" stop-color="#ff002d"/></linearGradient><linearGradient id="in149" gradientUnits="userSpaceOnUse" x1="1230.4" y1="226.5" x2="1489.2" y2="231.9"><stop offset="0.000" stop-color="#ffffff"/><stop offset="0.143" stop-color="#ff8b9f"/><stop offset="0.286" stop-color="#ff526f"/><stop offset="0.429" stop-color="#ff3153"/><stop offset="0.571" stop-color="#ff1d40"/><stop offset="0.714" stop-color="#ff0f33"/><stop offset="0.857" stop-color="#ff062a"/><stop offset="1.000" stop-color="#ff0023"/></linearGradient><linearGradient id="rbr" x1="0" x2="0" y1="0" y2="1"><stop offset="0" stop-color="#ff5555"/><stop offset="1" stop-color="#ff4040"/></linearGradient><linearGradient id="rbg" x1="0" x2="0" y1="0" y2="1"><stop offset="0" stop-color="#5aae5a"/><stop offset="1" stop-color="#389838"/></linearGradient><linearGradient id="rbb" x1="0" x2="0" y1="0" y2="1"><stop offset="0" stop-color="#5e5eff"/><stop offset="1" stop-color="#4040ff"/></linearGradient><clipPath id="xyclip"><rect x="638.2" y="677.1" width="342.1" height="198.8"/></clipPath><linearGradient id="xy0" gradientUnits="userSpaceOnUse" x1="808.5" y1="775.5" x2="984.3" y2="769.7"><stop offset="0.000" stop-color="#ffffff"/><stop offset="0.250" stop-color="#ffe9e8"/><stop offset="0.500" stop-color="#ffd5d3"/><stop offset="0.750" stop-color="#ffc4c1"/><stop offset="1.000" stop-color="#ffb5b1"/></linearGradient><linearGradient id="xy1" gradientUnits="userSpaceOnUse" x1="808.5" y1="775.5" x2="984.3" y2="758.2"><stop offset="0.000" stop-color="#ffffff"/><stop offset="0.250" stop-color="#ffeae7"/><stop offset="0.500" stop-color="#ffd8d2"/><stop offset="0.750" stop-color="#ffc8c0"/><stop offset="1.000" stop-color="#ffb9af"/></linearGradient><linearGradient id="xy2" gradientUnits="userSpaceOnUse" x1="808.5" y1="775.5" x2="984.2" y2="746.5"><stop offset="0.000" stop-color="#ffffff"/><stop offset="0.250" stop-color="#ffece7"/><stop offset="0.500" stop-color="#ffdbd2"/><stop offset="0.750" stop-color="#ffccbf"/><stop offset="1.000" stop-color="#ffbeae"/></linearGradient><linearGradient id="xy3" gradientUnits="userSpaceOnUse" x1="808.5" y1="775.5" x2="984.2" y2="734.5"><stop offset="0.000" stop-color="#ffffff"/><stop offset="0.250" stop-color="#ffede7"/><stop offset="0.500" stop-color="#ffded1"/><stop offset="0.750" stop-color="#ffcfbe"/><stop offset="1.000" stop-color="#ffc3ad"/></linearGradient><linearGradient id="xy4" gradientUnits="userSpaceOnUse" x1="808.5" y1="775.5" x2="984.1" y2="722.2"><stop offset="0.000" stop-color="#ffffff"/><stop offset="0.250" stop-color="#ffefe6"/><stop offset="0.500" stop-color="#ffe0d0"/><stop offset="0.750" stop-color="#ffd3bd"/><stop offset="1.000" stop-color="#ffc8ab"/></linearGradient><linearGradient id="xy5" gradientUnits="userSpaceOnUse" x1="808.5" y1="775.5" x2="984.0" y2="709.4"><stop offset="0.000" stop-color="#ffffff"/><stop offset="0.250" stop-color="#fff0e6"/><stop offset="0.500" stop-color="#ffe3cf"/><stop offset="0.750" stop-color="#ffd8bc"/><stop offset="1.000" stop-color="#ffcdaa"/></linearGradient><linearGradient id="xy6" gradientUnits="userSpaceOnUse" x1="808.5" y1="775.5" x2="983.9" y2="696.0"><stop offset="0.000" stop-color="#ffffff"/><stop offset="0.250" stop-color="#fff2e5"/><stop offset="0.500" stop-color="#ffe7cf"/><stop offset="0.750" stop-color="#ffdcba"/><stop offset="1.000" stop-color="#ffd3a8"/></linearGradient><linearGradient id="xy7" gradientUnits="userSpaceOnUse" x1="808.5" y1="775.5" x2="983.8" y2="681.8"><stop offset="0.000" stop-color="#ffffff"/><stop offset="0.250" stop-color="#fff4e5"/><stop offset="0.500" stop-color="#ffeace"/><stop offset="0.750" stop-color="#ffe1b9"/><stop offset="1.000" stop-color="#ffd9a6"/></linearGradient><linearGradient id="xy8" gradientUnits="userSpaceOnUse" x1="808.5" y1="775.5" x2="970.1" y2="675.0"><stop offset="0.000" stop-color="#ffffff"/><stop offset="0.250" stop-color="#fff7e6"/><stop offset="0.500" stop-color="#ffefd0"/><stop offset="0.750" stop-color="#ffe8bc"/><stop offset="1.000" stop-color="#ffe1aa"/></linearGradient><linearGradient id="xy9" gradientUnits="userSpaceOnUse" x1="808.5" y1="775.5" x2="949.1" y2="674.8"><stop offset="0.000" stop-color="#ffffff"/><stop offset="0.250" stop-color="#fff9e9"/><stop offset="0.500" stop-color="#fff4d5"/><stop offset="0.750" stop-color="#ffefc3"/><stop offset="1.000" stop-color="#ffebb2"/></linearGradient><linearGradient id="xy10" gradientUnits="userSpaceOnUse" x1="808.5" y1="775.5" x2="931.5" y2="674.6"><stop offset="0.000" stop-color="#ffffff"/><stop offset="0.250" stop-color="#fffceb"/><stop offset="0.500" stop-color="#fff9d9"/><stop offset="0.750" stop-color="#fff6c8"/><stop offset="1.000" stop-color="#fff3b9"/></linearGradient><linearGradient id="xy11" gradientUnits="userSpaceOnUse" x1="808.5" y1="775.5" x2="916.5" y2="674.4"><stop offset="0.000" stop-color="#ffffff"/><stop offset="0.250" stop-color="#fffeed"/><stop offset="0.500" stop-color="#fffddd"/><stop offset="0.750" stop-color="#fffbcd"/><stop offset="1.000" stop-color="#fffabf"/></linearGradient><linearGradient id="xy12" gradientUnits="userSpaceOnUse" x1="808.5" y1="775.5" x2="903.4" y2="674.2"><stop offset="0.000" stop-color="#ffffff"/><stop offset="0.250" stop-color="#feffee"/><stop offset="0.500" stop-color="#feffdf"/><stop offset="0.750" stop-color="#fdffd0"/><stop offset="1.000" stop-color="#fdffc2"/></linearGradient><linearGradient id="xy13" gradientUnits="userSpaceOnUse" x1="808.5" y1="775.5" x2="891.8" y2="674.0"><stop offset="0.000" stop-color="#ffffff"/><stop offset="0.250" stop-color="#fdffee"/><stop offset="0.500" stop-color="#fbffdf"/><stop offset="0.750" stop-color="#f9ffd0"/><stop offset="1.000" stop-color="#f7ffc3"/></linearGradient><linearGradient id="xy14" gradientUnits="userSpaceOnUse" x1="808.5" y1="775.5" x2="881.3" y2="673.8"><stop offset="0.000" stop-color="#ffffff"/><stop offset="0.250" stop-color="#fbffef"/><stop offset="0.500" stop-color="#f8ffdf"/><stop offset="0.750" stop-color="#f5ffd0"/><stop offset="1.000" stop-color="#f2ffc3"/></linearGradient><linearGradient id="xy15" gradientUnits="userSpaceOnUse" x1="808.5" y1="775.5" x2="871.8" y2="673.7"><stop offset="0.000" stop-color="#ffffff"/><stop offset="0.250" stop-color="#faffef"/><stop offset="0.500" stop-color="#f6ffdf"/><stop offset="0.750" stop-color="#f1ffd1"/><stop offset="1.000" stop-color="#edffc3"/></linearGradient><linearGradient id="xy16" gradientUnits="userSpaceOnUse" x1="808.5" y1="775.5" x2="863.0" y2="673.6"><stop offset="0.000" stop-color="#ffffff"/><stop offset="0.250" stop-color="#f9ffef"/><stop offset="0.500" stop-color="#f3ffdf"/><stop offset="0.750" stop-color="#eeffd1"/><stop offset="1.000" stop-color="#e9ffc3"/></linearGradient><linearGradient id="xy17" gradientUnits="userSpaceOnUse" x1="808.5" y1="775.5" x2="854.7" y2="673.5"><stop offset="0.000" stop-color="#ffffff"/><stop offset="0.250" stop-color="#f8ffef"/><stop offset="0.500" stop-color="#f1ffdf"/><stop offset="0.750" stop-color="#ebffd1"/><stop offset="1.000" stop-color="#e5ffc3"/></linearGradient><linearGradient id="xy18" gradientUnits="userSpaceOnUse" x1="808.5" y1="775.5" x2="846.9" y2="673.4"><stop offset="0.000" stop-color="#ffffff"/><stop offset="0.250" stop-color="#f7ffef"/><stop offset="0.500" stop-color="#efffdf"/><stop offset="0.750" stop-color="#e8ffd1"/><stop offset="1.000" stop-color="#e1ffc4"/></linearGradient><linearGradient id="xy19" gradientUnits="userSpaceOnUse" x1="808.5" y1="775.5" x2="839.5" y2="673.3"><stop offset="0.000" stop-color="#ffffff"/><stop offset="0.250" stop-color="#f6ffef"/><stop offset="0.500" stop-color="#edffdf"/><stop offset="0.750" stop-color="#e5ffd1"/><stop offset="1.000" stop-color="#ddffc4"/></linearGradient><linearGradient id="xy20" gradientUnits="userSpaceOnUse" x1="808.5" y1="775.5" x2="832.4" y2="673.2"><stop offset="0.000" stop-color="#ffffff"/><stop offset="0.250" stop-color="#f5ffef"/><stop offset="0.500" stop-color="#ebffdf"/><stop offset="0.750" stop-color="#e2ffd1"/><stop offset="1.000" stop-color="#daffc4"/></linearGradient><linearGradient id="xy21" gradientUnits="userSpaceOnUse" x1="808.5" y1="775.5" x2="825.4" y2="673.2"><stop offset="0.000" stop-color="#ffffff"/><stop offset="0.250" stop-color="#f4ffef"/><stop offset="0.500" stop-color="#e9ffdf"/><stop offset="0.750" stop-color="#e0ffd1"/><stop offset="1.000" stop-color="#d7ffc4"/></linearGradient><linearGradient id="xy22" gradientUnits="userSpaceOnUse" x1="808.5" y1="775.5" x2="818.6" y2="673.1"><stop offset="0.000" stop-color="#ffffff"/><stop offset="0.250" stop-color="#f3ffef"/><stop offset="0.500" stop-color="#e8ffdf"/><stop offset="0.750" stop-color="#ddffd1"/><stop offset="1.000" stop-color="#d4ffc4"/></linearGradient><linearGradient id="xy23" gradientUnits="userSpaceOnUse" x1="808.5" y1="775.5" x2="811.9" y2="673.1"><stop offset="0.000" stop-color="#ffffff"/><stop offset="0.250" stop-color="#f2ffef"/><stop offset="0.500" stop-color="#e6ffe0"/><stop offset="0.750" stop-color="#dbffd2"/><stop offset="1.000" stop-color="#d0ffc4"/></linearGradient><linearGradient id="xy24" gradientUnits="userSpaceOnUse" x1="808.5" y1="775.5" x2="805.1" y2="673.1"><stop offset="0.000" stop-color="#ffffff"/><stop offset="0.250" stop-color="#f1ffef"/><stop offset="0.500" stop-color="#e4ffe0"/><stop offset="0.750" stop-color="#d9ffd2"/><stop offset="1.000" stop-color="#cdffc5"/></linearGradient><linearGradient id="xy25" gradientUnits="userSpaceOnUse" x1="808.5" y1="775.5" x2="798.4" y2="673.1"><stop offset="0.000" stop-color="#ffffff"/><stop offset="0.250" stop-color="#f0ffef"/><stop offset="0.500" stop-color="#e3ffe0"/><stop offset="0.750" stop-color="#d6ffd2"/><stop offset="1.000" stop-color="#caffc5"/></linearGradient><linearGradient id="xy26" gradientUnits="userSpaceOnUse" x1="808.5" y1="775.5" x2="791.6" y2="673.2"><stop offset="0.000" stop-color="#ffffff"/><stop offset="0.250" stop-color="#efffef"/><stop offset="0.500" stop-color="#e1ffe0"/><stop offset="0.750" stop-color="#d4ffd2"/><stop offset="1.000" stop-color="#c7ffc5"/></linearGradient><linearGradient id="xy27" gradientUnits="userSpaceOnUse" x1="808.5" y1="775.5" x2="784.6" y2="673.2"><stop offset="0.000" stop-color="#ffffff"/><stop offset="0.250" stop-color="#efffef"/><stop offset="0.500" stop-color="#dfffe0"/><stop offset="0.750" stop-color="#d1ffd2"/><stop offset="1.000" stop-color="#c4ffc5"/></linearGradient><linearGradient id="xy28" gradientUnits="userSpaceOnUse" x1="808.5" y1="775.5" x2="777.5" y2="673.3"><stop offset="0.000" stop-color="#ffffff"/><stop offset="0.250" stop-color="#eeffef"/><stop offset="0.500" stop-color="#deffe0"/><stop offset="0.750" stop-color="#cfffd2"/><stop offset="1.000" stop-color="#c1ffc6"/></linearGradient><linearGradient id="xy29" gradientUnits="userSpaceOnUse" x1="808.5" y1="775.5" x2="770.1" y2="673.4"><stop offset="0.000" stop-color="#ffffff"/><stop offset="0.250" stop-color="#edffef"/><stop offset="0.500" stop-color="#dcffe0"/><stop offset="0.750" stop-color="#ccffd2"/><stop offset="1.000" stop-color="#beffc6"/></linearGradient><linearGradient id="xy30" gradientUnits="userSpaceOnUse" x1="808.5" y1="775.5" x2="762.3" y2="673.5"><stop offset="0.000" stop-color="#ffffff"/><stop offset="0.250" stop-color="#ecffef"/><stop offset="0.500" stop-color="#daffe0"/><stop offset="0.750" stop-color="#caffd3"/><stop offset="1.000" stop-color="#bbffc6"/></linearGradient><linearGradient id="xy31" gradientUnits="userSpaceOnUse" x1="808.5" y1="775.5" x2="754.0" y2="673.6"><stop offset="0.000" stop-color="#ffffff"/><stop offset="0.250" stop-color="#ebffef"/><stop offset="0.500" stop-color="#d8ffe0"/><stop offset="0.750" stop-color="#c7ffd3"/><stop offset="1.000" stop-color="#b7ffc6"/></linearGradient><linearGradient id="xy32" gradientUnits="userSpaceOnUse" x1="808.5" y1="775.5" x2="745.2" y2="673.7"><stop offset="0.000" stop-color="#ffffff"/><stop offset="0.250" stop-color="#e9ffef"/><stop offset="0.500" stop-color="#d6ffe0"/><stop offset="0.750" stop-color="#c4ffd3"/><stop offset="1.000" stop-color="#b3ffc7"/></linearGradient><linearGradient id="xy33" gradientUnits="userSpaceOnUse" x1="808.5" y1="775.5" x2="735.7" y2="673.8"><stop offset="0.000" stop-color="#ffffff"/><stop offset="0.250" stop-color="#e8ffef"/><stop offset="0.500" stop-color="#d4ffe1"/><stop offset="0.750" stop-color="#c1ffd3"/><stop offset="1.000" stop-color="#b0ffc7"/></linearGradient><linearGradient id="xy34" gradientUnits="userSpaceOnUse" x1="808.5" y1="775.5" x2="725.2" y2="674.0"><stop offset="0.000" stop-color="#ffffff"/><stop offset="0.250" stop-color="#e7ffef"/><stop offset="0.500" stop-color="#d1ffe1"/><stop offset="0.750" stop-color="#bdffd3"/><stop offset="1.000" stop-color="#abffc7"/></linearGradient><linearGradient id="xy35" gradientUnits="userSpaceOnUse" x1="808.5" y1="775.5" x2="713.6" y2="674.2"><stop offset="0.000" stop-color="#ffffff"/><stop offset="0.250" stop-color="#e5ffef"/><stop offset="0.500" stop-color="#ceffe1"/><stop offset="0.750" stop-color="#baffd4"/><stop offset="1.000" stop-color="#a7ffc8"/></linearGradient><linearGradient id="xy36" gradientUnits="userSpaceOnUse" x1="808.5" y1="775.5" x2="700.5" y2="674.4"><stop offset="0.000" stop-color="#ffffff"/><stop offset="0.250" stop-color="#e4ffef"/><stop offset="0.500" stop-color="#cbffe1"/><stop offset="0.750" stop-color="#b5ffd4"/><stop offset="1.000" stop-color="#a1ffc8"/></linearGradient><linearGradient id="xy37" gradientUnits="userSpaceOnUse" x1="808.5" y1="775.5" x2="685.5" y2="674.6"><stop offset="0.000" stop-color="#ffffff"/><stop offset="0.250" stop-color="#e2ffef"/><stop offset="0.500" stop-color="#c8ffe1"/><stop offset="0.750" stop-color="#b0ffd4"/><stop offset="1.000" stop-color="#9bffc9"/></linearGradient><linearGradient id="xy38" gradientUnits="userSpaceOnUse" x1="808.5" y1="775.5" x2="667.9" y2="674.8"><stop offset="0.000" stop-color="#ffffff"/><stop offset="0.250" stop-color="#e0ffef"/><stop offset="0.500" stop-color="#c4ffe1"/><stop offset="0.750" stop-color="#abffd5"/><stop offset="1.000" stop-color="#95ffc9"/></linearGradient><linearGradient id="xy39" gradientUnits="userSpaceOnUse" x1="808.5" y1="775.5" x2="646.9" y2="675.0"><stop offset="0.000" stop-color="#ffffff"/><stop offset="0.250" stop-color="#ddfff0"/><stop offset="0.500" stop-color="#bfffe2"/><stop offset="0.750" stop-color="#a4ffd5"/><stop offset="1.000" stop-color="#8dffca"/></linearGradient><linearGradient id="xy40" gradientUnits="userSpaceOnUse" x1="808.5" y1="775.5" x2="634.7" y2="682.6"><stop offset="0.000" stop-color="#ffffff"/><stop offset="0.250" stop-color="#dcfff1"/><stop offset="0.500" stop-color="#beffe4"/><stop offset="0.750" stop-color="#a3ffd8"/><stop offset="1.000" stop-color="#8affce"/></linearGradient><linearGradient id="xy41" gradientUnits="userSpaceOnUse" x1="808.5" y1="775.5" x2="634.6" y2="696.7"><stop offset="0.000" stop-color="#ffffff"/><stop offset="0.250" stop-color="#defff3"/><stop offset="0.500" stop-color="#c1ffe8"/><stop offset="0.750" stop-color="#a6ffde"/><stop offset="1.000" stop-color="#8effd5"/></linearGradient><linearGradient id="xy42" gradientUnits="userSpaceOnUse" x1="808.5" y1="775.5" x2="634.5" y2="710.0"><stop offset="0.000" stop-color="#ffffff"/><stop offset="0.250" stop-color="#e0fff5"/><stop offset="0.500" stop-color="#c3ffec"/><stop offset="0.750" stop-color="#a9ffe3"/><stop offset="1.000" stop-color="#92ffdb"/></linearGradient><linearGradient id="xy43" gradientUnits="userSpaceOnUse" x1="808.5" y1="775.5" x2="634.4" y2="722.7"><stop offset="0.000" stop-color="#ffffff"/><stop offset="0.250" stop-color="#e1fff7"/><stop offset="0.500" stop-color="#c6fff0"/><stop offset="0.750" stop-color="#adffe9"/><stop offset="1.000" stop-color="#96ffe2"/></linearGradient><linearGradient id="xy44" gradientUnits="userSpaceOnUse" x1="808.5" y1="775.5" x2="634.3" y2="734.9"><stop offset="0.000" stop-color="#ffffff"/><stop offset="0.250" stop-color="#e3fff9"/><stop offset="0.500" stop-color="#c8fff3"/><stop offset="0.750" stop-color="#b0ffee"/><stop offset="1.000" stop-color="#9affe9"/></linearGradient><linearGradient id="xy45" gradientUnits="userSpaceOnUse" x1="808.5" y1="775.5" x2="634.3" y2="746.7"><stop offset="0.000" stop-color="#ffffff"/><stop offset="0.250" stop-color="#e4fffb"/><stop offset="0.500" stop-color="#cbfff7"/><stop offset="0.750" stop-color="#b4fff3"/><stop offset="1.000" stop-color="#9effef"/></linearGradient><linearGradient id="xy46" gradientUnits="userSpaceOnUse" x1="808.5" y1="775.5" x2="634.2" y2="758.3"><stop offset="0.000" stop-color="#ffffff"/><stop offset="0.250" stop-color="#e5fffd"/><stop offset="0.500" stop-color="#cdfffa"/><stop offset="0.750" stop-color="#b7fff8"/><stop offset="1.000" stop-color="#a2fff6"/></linearGradient><linearGradient id="xy47" gradientUnits="userSpaceOnUse" x1="808.5" y1="775.5" x2="634.2" y2="769.8"><stop offset="0.000" stop-color="#ffffff"/><stop offset="0.250" stop-color="#e7ffff"/><stop offset="0.500" stop-color="#d0fffe"/><stop offset="0.750" stop-color="#bafffe"/><stop offset="1.000" stop-color="#a6fffd"/></linearGradient><linearGradient id="xy48" gradientUnits="userSpaceOnUse" x1="808.5" y1="775.5" x2="634.2" y2="781.2"><stop offset="0.000" stop-color="#ffffff"/><stop offset="0.250" stop-color="#e7feff"/><stop offset="0.500" stop-color="#d0fcff"/><stop offset="0.750" stop-color="#bbfbff"/><stop offset="1.000" stop-color="#a7faff"/></linearGradient><linearGradient id="xy49" gradientUnits="userSpaceOnUse" x1="808.5" y1="775.5" x2="634.2" y2="792.7"><stop offset="0.000" stop-color="#ffffff"/><stop offset="0.250" stop-color="#e7fcff"/><stop offset="0.500" stop-color="#d0f9ff"/><stop offset="0.750" stop-color="#baf6ff"/><stop offset="1.000" stop-color="#a6f3ff"/></linearGradient><linearGradient id="xy50" gradientUnits="userSpaceOnUse" x1="808.5" y1="775.5" x2="634.3" y2="804.3"><stop offset="0.000" stop-color="#ffffff"/><stop offset="0.250" stop-color="#e6faff"/><stop offset="0.500" stop-color="#cff5ff"/><stop offset="0.750" stop-color="#baf1ff"/><stop offset="1.000" stop-color="#a6ecff"/></linearGradient><linearGradient id="xy51" gradientUnits="userSpaceOnUse" x1="808.5" y1="775.5" x2="634.3" y2="816.1"><stop offset="0.000" stop-color="#ffffff"/><stop offset="0.250" stop-color="#e6f8ff"/><stop offset="0.500" stop-color="#cff1ff"/><stop offset="0.750" stop-color="#b9ebff"/><stop offset="1.000" stop-color="#a5e5ff"/></linearGradient><linearGradient id="xy52" gradientUnits="userSpaceOnUse" x1="808.5" y1="775.5" x2="634.4" y2="828.3"><stop offset="0.000" stop-color="#ffffff"/><stop offset="0.250" stop-color="#e6f6ff"/><stop offset="0.500" stop-color="#ceeeff"/><stop offset="0.750" stop-color="#b9e6ff"/><stop offset="1.000" stop-color="#a5deff"/></linearGradient><linearGradient id="xy53" gradientUnits="userSpaceOnUse" x1="808.5" y1="775.5" x2="634.5" y2="841.0"><stop offset="0.000" stop-color="#ffffff"/><stop offset="0.250" stop-color="#e5f4ff"/><stop offset="0.500" stop-color="#ceeaff"/><stop offset="0.750" stop-color="#b8e0ff"/><stop offset="1.000" stop-color="#a4d7ff"/></linearGradient><linearGradient id="xy54" gradientUnits="userSpaceOnUse" x1="808.5" y1="775.5" x2="634.6" y2="854.3"><stop offset="0.000" stop-color="#ffffff"/><stop offset="0.250" stop-color="#e5f2ff"/><stop offset="0.500" stop-color="#cee6ff"/><stop offset="0.750" stop-color="#b8dbff"/><stop offset="1.000" stop-color="#a4d0ff"/></linearGradient><linearGradient id="xy55" gradientUnits="userSpaceOnUse" x1="808.5" y1="775.5" x2="634.7" y2="868.4"><stop offset="0.000" stop-color="#ffffff"/><stop offset="0.250" stop-color="#e5f0ff"/><stop offset="0.500" stop-color="#cde2ff"/><stop offset="0.750" stop-color="#b7d5ff"/><stop offset="1.000" stop-color="#a3c9ff"/></linearGradient><linearGradient id="xy56" gradientUnits="userSpaceOnUse" x1="808.5" y1="775.5" x2="643.6" y2="878.0"><stop offset="0.000" stop-color="#ffffff"/><stop offset="0.250" stop-color="#e6eeff"/><stop offset="0.500" stop-color="#cfdfff"/><stop offset="0.750" stop-color="#bad1ff"/><stop offset="1.000" stop-color="#a7c4ff"/></linearGradient><linearGradient id="xy57" gradientUnits="userSpaceOnUse" x1="808.5" y1="775.5" x2="665.1" y2="878.2"><stop offset="0.000" stop-color="#ffffff"/><stop offset="0.250" stop-color="#e9eeff"/><stop offset="0.500" stop-color="#d4dfff"/><stop offset="0.750" stop-color="#c1d1ff"/><stop offset="1.000" stop-color="#b0c4ff"/></linearGradient><linearGradient id="xy58" gradientUnits="userSpaceOnUse" x1="808.5" y1="775.5" x2="683.1" y2="878.4"><stop offset="0.000" stop-color="#ffffff"/><stop offset="0.250" stop-color="#ebeeff"/><stop offset="0.500" stop-color="#d9dfff"/><stop offset="0.750" stop-color="#c8d1ff"/><stop offset="1.000" stop-color="#b8c3ff"/></linearGradient><linearGradient id="xy59" gradientUnits="userSpaceOnUse" x1="808.5" y1="775.5" x2="698.4" y2="878.6"><stop offset="0.000" stop-color="#ffffff"/><stop offset="0.250" stop-color="#edeeff"/><stop offset="0.500" stop-color="#dcdfff"/><stop offset="0.750" stop-color="#cdd0ff"/><stop offset="1.000" stop-color="#bfc3ff"/></linearGradient><linearGradient id="xy60" gradientUnits="userSpaceOnUse" x1="808.5" y1="775.5" x2="711.7" y2="878.8"><stop offset="0.000" stop-color="#ffffff"/><stop offset="0.250" stop-color="#efeeff"/><stop offset="0.500" stop-color="#e0dfff"/><stop offset="0.750" stop-color="#d2d0ff"/><stop offset="1.000" stop-color="#c5c3ff"/></linearGradient><linearGradient id="xy61" gradientUnits="userSpaceOnUse" x1="808.5" y1="775.5" x2="723.6" y2="879.0"><stop offset="0.000" stop-color="#ffffff"/><stop offset="0.250" stop-color="#f0eeff"/><stop offset="0.500" stop-color="#e3dfff"/><stop offset="0.750" stop-color="#d6d0ff"/><stop offset="1.000" stop-color="#cac2ff"/></linearGradient><linearGradient id="xy62" gradientUnits="userSpaceOnUse" x1="808.5" y1="775.5" x2="734.2" y2="879.2"><stop offset="0.000" stop-color="#ffffff"/><stop offset="0.250" stop-color="#f2eeff"/><stop offset="0.500" stop-color="#e5dfff"/><stop offset="0.750" stop-color="#dad0ff"/><stop offset="1.000" stop-color="#cfc2ff"/></linearGradient><linearGradient id="xy63" gradientUnits="userSpaceOnUse" x1="808.5" y1="775.5" x2="744.0" y2="879.3"><stop offset="0.000" stop-color="#ffffff"/><stop offset="0.250" stop-color="#f3eeff"/><stop offset="0.500" stop-color="#e8deff"/><stop offset="0.750" stop-color="#ddd0ff"/><stop offset="1.000" stop-color="#d4c2ff"/></linearGradient><linearGradient id="xy64" gradientUnits="userSpaceOnUse" x1="808.5" y1="775.5" x2="752.9" y2="879.4"><stop offset="0.000" stop-color="#ffffff"/><stop offset="0.250" stop-color="#f4eeff"/><stop offset="0.500" stop-color="#eadeff"/><stop offset="0.750" stop-color="#e1d0ff"/><stop offset="1.000" stop-color="#d8c2ff"/></linearGradient><linearGradient id="xy65" gradientUnits="userSpaceOnUse" x1="808.5" y1="775.5" x2="761.4" y2="879.5"><stop offset="0.000" stop-color="#ffffff"/><stop offset="0.250" stop-color="#f5eeff"/><stop offset="0.500" stop-color="#ecdeff"/><stop offset="0.750" stop-color="#e4d0ff"/><stop offset="1.000" stop-color="#dcc2ff"/></linearGradient><linearGradient id="xy66" gradientUnits="userSpaceOnUse" x1="808.5" y1="775.5" x2="769.3" y2="879.6"><stop offset="0.000" stop-color="#ffffff"/><stop offset="0.250" stop-color="#f7eeff"/><stop offset="0.500" stop-color="#efdeff"/><stop offset="0.750" stop-color="#e7cfff"/><stop offset="1.000" stop-color="#e0c1ff"/></linearGradient><linearGradient id="xy67" gradientUnits="userSpaceOnUse" x1="808.5" y1="775.5" x2="776.9" y2="879.7"><stop offset="0.000" stop-color="#ffffff"/><stop offset="0.250" stop-color="#f8eeff"/><stop offset="0.500" stop-color="#f1deff"/><stop offset="0.750" stop-color="#eacfff"/><stop offset="1.000" stop-color="#e3c1ff"/></linearGradient><linearGradient id="xy68" gradientUnits="userSpaceOnUse" x1="808.5" y1="775.5" x2="784.2" y2="879.8"><stop offset="0.000" stop-color="#ffffff"/><stop offset="0.250" stop-color="#f9eeff"/><stop offset="0.500" stop-color="#f2deff"/><stop offset="0.750" stop-color="#edcfff"/><stop offset="1.000" stop-color="#e7c1ff"/></linearGradient><linearGradient id="xy69" gradientUnits="userSpaceOnUse" x1="808.5" y1="775.5" x2="791.3" y2="879.8"><stop offset="0.000" stop-color="#ffffff"/><stop offset="0.250" stop-color="#faeeff"/><stop offset="0.500" stop-color="#f4deff"/><stop offset="0.750" stop-color="#efcfff"/><stop offset="1.000" stop-color="#ebc1ff"/></linearGradient><linearGradient id="xy70" gradientUnits="userSpaceOnUse" x1="808.5" y1="775.5" x2="798.2" y2="879.9"><stop offset="0.000" stop-color="#ffffff"/><stop offset="0.250" stop-color="#fbeeff"/><stop offset="0.500" stop-color="#f6deff"/><stop offset="0.750" stop-color="#f2cfff"/><stop offset="1.000" stop-color="#eec1ff"/></linearGradient><linearGradient id="xy71" gradientUnits="userSpaceOnUse" x1="808.5" y1="775.5" x2="805.1" y2="879.9"><stop offset="0.000" stop-color="#ffffff"/><stop offset="0.250" stop-color="#fbeeff"/><stop offset="0.500" stop-color="#f8deff"/><stop offset="0.750" stop-color="#f5cfff"/><stop offset="1.000" stop-color="#f2c1ff"/></linearGradient><linearGradient id="xy72" gradientUnits="userSpaceOnUse" x1="808.5" y1="775.5" x2="811.9" y2="879.9"><stop offset="0.000" stop-color="#ffffff"/><stop offset="0.250" stop-color="#fceeff"/><stop offset="0.500" stop-color="#fadeff"/><stop offset="0.750" stop-color="#f7cfff"/><stop offset="1.000" stop-color="#f5c1ff"/></linearGradient><linearGradient id="xy73" gradientUnits="userSpaceOnUse" x1="808.5" y1="775.5" x2="818.8" y2="879.9"><stop offset="0.000" stop-color="#ffffff"/><stop offset="0.250" stop-color="#fdeeff"/><stop offset="0.500" stop-color="#fcdeff"/><stop offset="0.750" stop-color="#facfff"/><stop offset="1.000" stop-color="#f9c0ff"/></linearGradient><linearGradient id="xy74" gradientUnits="userSpaceOnUse" x1="808.5" y1="775.5" x2="825.7" y2="879.8"><stop offset="0.000" stop-color="#ffffff"/><stop offset="0.250" stop-color="#feeeff"/><stop offset="0.500" stop-color="#fedeff"/><stop offset="0.750" stop-color="#fdcfff"/><stop offset="1.000" stop-color="#fcc0ff"/></linearGradient><linearGradient id="xy75" gradientUnits="userSpaceOnUse" x1="808.5" y1="775.5" x2="832.8" y2="879.8"><stop offset="0.000" stop-color="#ffffff"/><stop offset="0.250" stop-color="#ffeeff"/><stop offset="0.500" stop-color="#ffdefe"/><stop offset="0.750" stop-color="#ffcefe"/><stop offset="1.000" stop-color="#ffc0fe"/></linearGradient><linearGradient id="xy76" gradientUnits="userSpaceOnUse" x1="808.5" y1="775.5" x2="840.1" y2="879.7"><stop offset="0.000" stop-color="#ffffff"/><stop offset="0.250" stop-color="#ffedfe"/><stop offset="0.500" stop-color="#ffdcfc"/><stop offset="0.750" stop-color="#ffccfb"/><stop offset="1.000" stop-color="#ffbdfa"/></linearGradient><linearGradient id="xy77" gradientUnits="userSpaceOnUse" x1="808.5" y1="775.5" x2="847.7" y2="879.6"><stop offset="0.000" stop-color="#ffffff"/><stop offset="0.250" stop-color="#ffecfd"/><stop offset="0.500" stop-color="#ffdafa"/><stop offset="0.750" stop-color="#ffc9f8"/><stop offset="1.000" stop-color="#ffbaf6"/></linearGradient><linearGradient id="xy78" gradientUnits="userSpaceOnUse" x1="808.5" y1="775.5" x2="855.6" y2="879.5"><stop offset="0.000" stop-color="#ffffff"/><stop offset="0.250" stop-color="#ffebfc"/><stop offset="0.500" stop-color="#ffd8f8"/><stop offset="0.750" stop-color="#ffc7f5"/><stop offset="1.000" stop-color="#ffb7f2"/></linearGradient><linearGradient id="xy79" gradientUnits="userSpaceOnUse" x1="808.5" y1="775.5" x2="864.1" y2="879.4"><stop offset="0.000" stop-color="#ffffff"/><stop offset="0.250" stop-color="#ffeafa"/><stop offset="0.500" stop-color="#ffd6f6"/><stop offset="0.750" stop-color="#ffc4f2"/><stop offset="1.000" stop-color="#ffb3ee"/></linearGradient><linearGradient id="xy80" gradientUnits="userSpaceOnUse" x1="808.5" y1="775.5" x2="873.0" y2="879.3"><stop offset="0.000" stop-color="#ffffff"/><stop offset="0.250" stop-color="#ffe9f9"/><stop offset="0.500" stop-color="#ffd4f4"/><stop offset="0.750" stop-color="#ffc2ef"/><stop offset="1.000" stop-color="#ffb0ea"/></linearGradient><linearGradient id="xy81" gradientUnits="userSpaceOnUse" x1="808.5" y1="775.5" x2="882.8" y2="879.2"><stop offset="0.000" stop-color="#ffffff"/><stop offset="0.250" stop-color="#ffe8f8"/><stop offset="0.500" stop-color="#ffd2f1"/><stop offset="0.750" stop-color="#ffbfeb"/><stop offset="1.000" stop-color="#ffade5"/></linearGradient><linearGradient id="xy82" gradientUnits="userSpaceOnUse" x1="808.5" y1="775.5" x2="893.4" y2="879.0"><stop offset="0.000" stop-color="#ffffff"/><stop offset="0.250" stop-color="#ffe6f6"/><stop offset="0.500" stop-color="#ffd0ef"/><stop offset="0.750" stop-color="#ffbce7"/><stop offset="1.000" stop-color="#ffa9e1"/></linearGradient><linearGradient id="xy83" gradientUnits="userSpaceOnUse" x1="808.5" y1="775.5" x2="905.3" y2="878.8"><stop offset="0.000" stop-color="#ffffff"/><stop offset="0.250" stop-color="#ffe5f5"/><stop offset="0.500" stop-color="#ffcdec"/><stop offset="0.750" stop-color="#ffb8e3"/><stop offset="1.000" stop-color="#ffa5db"/></linearGradient><linearGradient id="xy84" gradientUnits="userSpaceOnUse" x1="808.5" y1="775.5" x2="918.6" y2="878.6"><stop offset="0.000" stop-color="#ffffff"/><stop offset="0.250" stop-color="#ffe3f3"/><stop offset="0.500" stop-color="#ffcbe8"/><stop offset="0.750" stop-color="#ffb5df"/><stop offset="1.000" stop-color="#ffa1d6"/></linearGradient><linearGradient id="xy85" gradientUnits="userSpaceOnUse" x1="808.5" y1="775.5" x2="933.9" y2="878.4"><stop offset="0.000" stop-color="#ffffff"/><stop offset="0.250" stop-color="#ffe2f1"/><stop offset="0.500" stop-color="#ffc8e5"/><stop offset="0.750" stop-color="#ffb0da"/><stop offset="1.000" stop-color="#ff9cd0"/></linearGradient><linearGradient id="xy86" gradientUnits="userSpaceOnUse" x1="808.5" y1="775.5" x2="951.9" y2="878.2"><stop offset="0.000" stop-color="#ffffff"/><stop offset="0.250" stop-color="#ffdfef"/><stop offset="0.500" stop-color="#ffc4e1"/><stop offset="0.750" stop-color="#ffacd4"/><stop offset="1.000" stop-color="#ff96c9"/></linearGradient><linearGradient id="xy87" gradientUnits="userSpaceOnUse" x1="808.5" y1="775.5" x2="973.4" y2="878.0"><stop offset="0.000" stop-color="#ffffff"/><stop offset="0.250" stop-color="#ffddec"/><stop offset="0.500" stop-color="#ffc0dc"/><stop offset="0.750" stop-color="#ffa6cd"/><stop offset="1.000" stop-color="#ff90c1"/></linearGradient><linearGradient id="xy88" gradientUnits="userSpaceOnUse" x1="808.5" y1="775.5" x2="983.8" y2="869.2"><stop offset="0.000" stop-color="#ffffff"/><stop offset="0.250" stop-color="#ffddeb"/><stop offset="0.500" stop-color="#ffc0d9"/><stop offset="0.750" stop-color="#ffa6ca"/><stop offset="1.000" stop-color="#ff90bc"/></linearGradient><linearGradient id="xy89" gradientUnits="userSpaceOnUse" x1="808.5" y1="775.5" x2="983.9" y2="855.0"><stop offset="0.000" stop-color="#ffffff"/><stop offset="0.250" stop-color="#ffdeea"/><stop offset="0.500" stop-color="#ffc3d8"/><stop offset="0.750" stop-color="#ffaac8"/><stop offset="1.000" stop-color="#ff95ba"/></linearGradient><linearGradient id="xy90" gradientUnits="userSpaceOnUse" x1="808.5" y1="775.5" x2="984.0" y2="841.6"><stop offset="0.000" stop-color="#ffffff"/><stop offset="0.250" stop-color="#ffe0ea"/><stop offset="0.500" stop-color="#ffc5d7"/><stop offset="0.750" stop-color="#ffaec7"/><stop offset="1.000" stop-color="#ff9ab9"/></linearGradient><linearGradient id="xy91" gradientUnits="userSpaceOnUse" x1="808.5" y1="775.5" x2="984.1" y2="828.8"><stop offset="0.000" stop-color="#ffffff"/><stop offset="0.250" stop-color="#ffe2e9"/><stop offset="0.500" stop-color="#ffc8d7"/><stop offset="0.750" stop-color="#ffb2c6"/><stop offset="1.000" stop-color="#ff9fb7"/></linearGradient><linearGradient id="xy92" gradientUnits="userSpaceOnUse" x1="808.5" y1="775.5" x2="984.2" y2="816.5"><stop offset="0.000" stop-color="#ffffff"/><stop offset="0.250" stop-color="#ffe3e9"/><stop offset="0.500" stop-color="#ffcbd6"/><stop offset="0.750" stop-color="#ffb6c5"/><stop offset="1.000" stop-color="#ffa3b6"/></linearGradient><linearGradient id="xy93" gradientUnits="userSpaceOnUse" x1="808.5" y1="775.5" x2="984.2" y2="804.5"><stop offset="0.000" stop-color="#ffffff"/><stop offset="0.250" stop-color="#ffe5e9"/><stop offset="0.500" stop-color="#ffced5"/><stop offset="0.750" stop-color="#ffb9c4"/><stop offset="1.000" stop-color="#ffa8b5"/></linearGradient><linearGradient id="xy94" gradientUnits="userSpaceOnUse" x1="808.5" y1="775.5" x2="984.3" y2="792.8"><stop offset="0.000" stop-color="#ffffff"/><stop offset="0.250" stop-color="#ffe6e8"/><stop offset="0.500" stop-color="#ffd0d4"/><stop offset="0.750" stop-color="#ffbdc3"/><stop offset="1.000" stop-color="#ffacb3"/></linearGradient><linearGradient id="xy95" gradientUnits="userSpaceOnUse" x1="808.5" y1="775.5" x2="984.3" y2="781.3"><stop offset="0.000" stop-color="#ffffff"/><stop offset="0.250" stop-color="#ffe7e8"/><stop offset="0.500" stop-color="#ffd3d4"/><stop offset="0.750" stop-color="#ffc1c2"/><stop offset="1.000" stop-color="#ffb0b2"/></linearGradient><clipPath id="tblclip"><rect x="997.5" y="662.3" width="632.8" height="203.7"/></clipPath><linearGradient id="bbg" x1="0" x2="0" y1="0" y2="1"><stop offset="0" stop-color="#b2b2b2"/><stop offset="0.12" stop-color="#a0a0a0"/><stop offset="0.6" stop-color="#7c7c7c"/><stop offset="1" stop-color="#595959"/></linearGradient><linearGradient id="bsel" x1="0" x2="0" y1="0" y2="1"><stop offset="0" stop-color="#1e1e1e"/><stop offset="1" stop-color="#343434"/></linearGradient><linearGradient id="cpg" x1="0" x2="0" y1="0" y2="1"><stop offset="0" stop-color="#b8b8b8"/><stop offset="1" stop-color="#6a6a6a"/></linearGradient><linearGradient id="cpc" x1="0" x2="0" y1="0" y2="1"><stop offset="0" stop-color="#727272"/><stop offset="1" stop-color="#b4b4b4"/></linearGradient><linearGradient id="lpg" x1="0" x2="0" y1="0" y2="1"><stop offset="0" stop-color="#b0b0b0"/><stop offset="0.3" stop-color="#9a9a9a"/><stop offset="1" stop-color="#5e5e5e"/></linearGradient><linearGradient id="rsh2" x1="0" x2="1" y1="0" y2="0"><stop offset="0" stop-color="#000" stop-opacity="0"/><stop offset="0.45" stop-color="#000" stop-opacity="0.15"/><stop offset="1" stop-color="#000" stop-opacity="0.55"/></linearGradient></defs>
<rect x="0" y="0" width="1670" height="1006" fill="#333"/>
<rect x="0" y="0" width="1670" height="38.2" fill="#222"/>
<rect x="0" y="0" width="1.5" height="1006" fill="#222"/>
<path d="M1.5,37.5 V5 Q1.5,0.8 5.5,0.8 H111 Q115,0.8 115,5 V37.5 Z" fill="url(#tabg)"/>
<path d="M1.5,37.5 V5 Q1.5,0.8 5.5,0.8 H111 Q115,0.8 115,5 V37.5" fill="none" stroke="#9a9a9a" stroke-width="1"/>
<line x1="74.5" y1="1" x2="74.5" y2="37" stroke="#8a8a8a" stroke-width="1"/>
<circle cx="93.5" cy="21.5" r="12" fill="#3b3b3b"/>
<path d="M90,22.5 H97 M93.5,19 V26" stroke="#8a8a8a" stroke-width="1.2"/>
<text x="9.0" y="25.3" font-size="15.26" textLength="58.0" lengthAdjust="spacingAndGlyphs" fill="#ececec" >History 1</text>
<path d="M1055.7,37.2 V4 Q1055.7,0 1059.7,0 H1228.8 Q1233.8,0 1233.8,5 V37.2 Z" fill="url(#wg)"/>
<path d="M1055.7,37.2 V4 Q1055.7,0 1059.7,0 H1063.2 V37.2 Z" fill="url(#grn)"/>
<text x="1067.0" y="13.8" font-size="13.08" textLength="81.5" lengthAdjust="spacingAndGlyphs" fill="#f0f0f0" >X-Rite i1Pro 3</text>
<text x="1067.0" y="32.3" font-size="13.08" textLength="69.5" lengthAdjust="spacingAndGlyphs" fill="#f0f0f0" >Direct View</text>
<circle cx="1165.2" cy="18.6" r="12.5" fill="url(#ddg)"/>
<path d="M1158.7,16.8 H1171.7 L1165.2,23.400000000000002 Z" fill="#fff"/>
<line x1="1189.3" y1="2" x2="1189.3" y2="37" stroke="#3a3a3a" stroke-width="1.5"/>
<circle cx="1215.3" cy="18.6" r="16" fill="#0000e0" stroke="#e8e8ff" stroke-width="1"/>
<text x="1215.3" y="22.8" font-size="11.34" text-anchor="middle" textLength="19.5" lengthAdjust="spacingAndGlyphs" fill="#fff" >656</text>
<path d="M1241.6,37.2 V4 Q1241.6,0 1245.6,0 H1399 Q1404,0 1404,5 V37.2 Z" fill="url(#wg)"/>
<path d="M1241.6,37.2 V4 Q1241.6,0 1245.6,0 H1249.1 V37.2 Z" fill="url(#grn)"/>
<text x="1253.0" y="13.8" font-size="13.08" textLength="80.0" lengthAdjust="spacingAndGlyphs" fill="#f0f0f0" >Mobile Forge</text>
<circle cx="1384.5" cy="18.6" r="12.5" fill="url(#ddg)"/>
<path d="M1378.0,16.8 H1391.0 L1384.5,23.400000000000002 Z" fill="#fff"/>
<path d="M1412.3,37.2 V4 Q1412.3,0 1416.3,0 H1585.6 Q1590.6,0 1590.6,5 V37.2 Z" fill="url(#wg)"/>
<path d="M1412.3,37.2 V4 Q1412.3,0 1416.3,0 H1419.8 V37.2 Z" fill="url(#yel)"/>
<text x="1423.7" y="14.0" font-size="13.08" textLength="131.0" lengthAdjust="spacingAndGlyphs" fill="#f0f0f0" >Direct Display Control</text>
<circle cx="1571" cy="18.6" r="12.5" fill="url(#ddg)"/>
<path d="M1564.5,16.8 H1577.5 L1571,23.400000000000002 Z" fill="#fff"/>
<rect x="1595" y="0.5" width="41.5" height="34" rx="5" fill="url(#btg)" stroke="#cfcfcf" stroke-width="1"/>
<circle cx="1616" cy="17.5" r="12" fill="url(#btc)"/>
<g transform="translate(1616,17.5)" fill="#d8d8d8"><rect x="-1.6" y="-8.3" width="3.2" height="4" transform="rotate(0)"/><rect x="-1.6" y="-8.3" width="3.2" height="4" transform="rotate(45)"/><rect x="-1.6" y="-8.3" width="3.2" height="4" transform="rotate(90)"/><rect x="-1.6" y="-8.3" width="3.2" height="4" transform="rotate(135)"/><rect x="-1.6" y="-8.3" width="3.2" height="4" transform="rotate(180)"/><rect x="-1.6" y="-8.3" width="3.2" height="4" transform="rotate(225)"/><rect x="-1.6" y="-8.3" width="3.2" height="4" transform="rotate(270)"/><rect x="-1.6" y="-8.3" width="3.2" height="4" transform="rotate(315)"/><circle r="5.4" fill="#7c7c7c" stroke="#d8d8d8" stroke-width="3.2"/></g>
<rect x="1638" y="0.5" width="40" height="34" rx="5" fill="url(#btg)" stroke="#cfcfcf" stroke-width="1"/>
<circle cx="1654.2" cy="17.5" r="12" fill="url(#btc)"/>
<path d="M1651,17.3 L1658,10.3 V24.3 Z" fill="#fff"/>
<text x="10.5" y="124.7" font-size="40.26" textLength="227.5" lengthAdjust="spacingAndGlyphs" fill="#f2f2f2" >Color Gamut</text>
<text x="189.5" y="224.8" font-size="13.95" text-anchor="middle" textLength="78.0" lengthAdjust="spacingAndGlyphs" fill="#dcdcdc" >DeltaE 2000</text>
<rect x="21.5" y="229.5" width="335.9" height="372.5" fill="#232323" stroke="#a0a0a0" stroke-width="1"/>
<path d="M21.5,602V608M65.5,230V602M65.5,602V608M110.1,230V602M110.1,602V608M154.7,230V602M154.7,602V608M199.3,230V602M199.3,602V608M243.9,230V602M243.9,602V608M288.5,230V602M288.5,602V608M333.1,230V602M333.1,602V608" stroke="#9a9a9a" stroke-width="1"/>
<text x="21.5" y="624.0" font-size="14.54" text-anchor="middle" fill="#dedede" >0</text>
<text x="65.5" y="624.0" font-size="14.54" text-anchor="middle" fill="#dedede" >2</text>
<text x="110.1" y="624.0" font-size="14.54" text-anchor="middle" fill="#dedede" >4</text>
<text x="154.7" y="624.0" font-size="14.54" text-anchor="middle" fill="#dedede" >6</text>
<text x="199.3" y="624.0" font-size="14.54" text-anchor="middle" fill="#dedede" >8</text>
<text x="243.9" y="624.0" font-size="14.54" text-anchor="middle" fill="#dedede" >10</text>
<text x="288.5" y="624.0" font-size="14.54" text-anchor="middle" fill="#dedede" >12</text>
<text x="333.1" y="624.0" font-size="14.54" text-anchor="middle" fill="#dedede" >14</text>
<rect x="22.5" y="233.5" width="93.7" height="34.8" fill="url(#deb0)" stroke="#000" stroke-width="1.4"/>
<rect x="22.5" y="281.6" width="122.2" height="34.8" fill="url(#deb1)" stroke="#000" stroke-width="1.4"/>
<rect x="22.5" y="327.5" width="79.3" height="34.8" fill="url(#deb2)" stroke="#000" stroke-width="1.4"/>
<rect x="22.5" y="373.9" width="91.1" height="34.8" fill="url(#deb3)" stroke="#000" stroke-width="1.4"/>
<rect x="22.5" y="419.8" width="27.2" height="34.8" fill="url(#deb4)" stroke="#000" stroke-width="1.4"/>
<rect x="22.5" y="466.2" width="111.2" height="34.8" fill="url(#deb5)" stroke="#000" stroke-width="1.4"/>
<rect x="22.5" y="513.0" width="106.0" height="34.8" fill="url(#deb6)" stroke="#000" stroke-width="1.4"/>
<rect x="22.5" y="559.8" width="84.1" height="34.8" fill="url(#deb7)" stroke="#000" stroke-width="1.4"/>
<text x="468.4" y="116.0" font-size="13.95" text-anchor="middle" textLength="46.0" lengthAdjust="spacingAndGlyphs" fill="#dcdcdc" >Delta L</text>
<rect x="409.5" y="122" width="144.5" height="317.4" fill="#232323" stroke="#b0b0b0" stroke-width="1"/>
<path d="M409.0,120.6H554.5" stroke="#9a9a9a" stroke-width="1"/>
<path d="M404.0,122.0H409.5M409.5,174.9H554.0M404.0,174.9H409.5M409.5,227.8H554.0M404.0,227.8H409.5M409.5,280.7H554.0M404.0,280.7H409.5M409.5,333.6H554.0M404.0,333.6H409.5M409.5,386.5H554.0M404.0,386.5H409.5M404.0,439.4H409.5M409.5,439.4V445M554.0,439.4V445" stroke="#a8a8a8" stroke-width="1"/>
<text x="403.3" y="127.2" font-size="14.24" text-anchor="end" fill="#dedede" >15</text>
<text x="403.3" y="180.1" font-size="14.24" text-anchor="end" fill="#dedede" >10</text>
<text x="403.3" y="233.0" font-size="14.24" text-anchor="end" fill="#dedede" >5</text>
<text x="403.3" y="285.9" font-size="14.24" text-anchor="end" fill="#dedede" >0</text>
<text x="403.3" y="338.8" font-size="14.24" text-anchor="end" fill="#dedede" >-5</text>
<text x="403.3" y="391.7" font-size="14.24" text-anchor="end" fill="#dedede" >-10</text>
<text x="403.3" y="444.6" font-size="14.24" text-anchor="end" fill="#dedede" >-15</text>
<text x="481.8" y="454.0" font-size="13.95" text-anchor="middle" textLength="38.0" lengthAdjust="spacingAndGlyphs" fill="#dedede" >100W</text>
<rect x="423.5" y="279.5" width="115" height="2" fill="#1a1a1a"/>
<text x="666.0" y="116.0" font-size="13.95" text-anchor="middle" textLength="47.0" lengthAdjust="spacingAndGlyphs" fill="#dcdcdc" >Delta C</text>
<rect x="607.0" y="122" width="144.5" height="317.4" fill="#232323" stroke="#b0b0b0" stroke-width="1"/>
<path d="M606.5,120.6H752.0" stroke="#9a9a9a" stroke-width="1"/>
<path d="M601.5,122.0H607.0M607.0,174.9H751.5M601.5,174.9H607.0M607.0,227.8H751.5M601.5,227.8H607.0M607.0,280.7H751.5M601.5,280.7H607.0M607.0,333.6H751.5M601.5,333.6H607.0M607.0,386.5H751.5M601.5,386.5H607.0M601.5,439.4H607.0M607.0,439.4V445M751.5,439.4V445" stroke="#a8a8a8" stroke-width="1"/>
<text x="600.8" y="127.2" font-size="14.24" text-anchor="end" fill="#dedede" >15</text>
<text x="600.8" y="180.1" font-size="14.24" text-anchor="end" fill="#dedede" >10</text>
<text x="600.8" y="233.0" font-size="14.24" text-anchor="end" fill="#dedede" >5</text>
<text x="600.8" y="285.9" font-size="14.24" text-anchor="end" fill="#dedede" >0</text>
<text x="600.8" y="338.8" font-size="14.24" text-anchor="end" fill="#dedede" >-5</text>
<text x="600.8" y="391.7" font-size="14.24" text-anchor="end" fill="#dedede" >-10</text>
<text x="600.8" y="444.6" font-size="14.24" text-anchor="end" fill="#dedede" >-15</text>
<text x="679.2" y="454.0" font-size="13.95" text-anchor="middle" textLength="38.0" lengthAdjust="spacingAndGlyphs" fill="#dedede" >100W</text>
<rect x="621.8" y="246" width="114.2" height="34" fill="url(#dcb)" stroke="#000" stroke-width="1.5"/>
<text x="863.5" y="116.0" font-size="13.95" text-anchor="middle" textLength="48.0" lengthAdjust="spacingAndGlyphs" fill="#dcdcdc" >Delta H</text>
<rect x="804.5" y="122" width="144.5" height="317.4" fill="#232323" stroke="#b0b0b0" stroke-width="1"/>
<path d="M804.0,120.6H949.5" stroke="#9a9a9a" stroke-width="1"/>
<path d="M799.0,122.0H804.5M804.5,174.9H949.0M799.0,174.9H804.5M804.5,227.8H949.0M799.0,227.8H804.5M804.5,280.7H949.0M799.0,280.7H804.5M804.5,333.6H949.0M799.0,333.6H804.5M804.5,386.5H949.0M799.0,386.5H804.5M799.0,439.4H804.5M804.5,439.4V445M949.0,439.4V445" stroke="#a8a8a8" stroke-width="1"/>
<text x="798.3" y="127.2" font-size="14.24" text-anchor="end" fill="#dedede" >15</text>
<text x="798.3" y="180.1" font-size="14.24" text-anchor="end" fill="#dedede" >10</text>
<text x="798.3" y="233.0" font-size="14.24" text-anchor="end" fill="#dedede" >5</text>
<text x="798.3" y="285.9" font-size="14.24" text-anchor="end" fill="#dedede" >0</text>
<text x="798.3" y="338.8" font-size="14.24" text-anchor="end" fill="#dedede" >-5</text>
<text x="798.3" y="391.7" font-size="14.24" text-anchor="end" fill="#dedede" >-10</text>
<text x="798.3" y="444.6" font-size="14.24" text-anchor="end" fill="#dedede" >-15</text>
<text x="876.8" y="454.0" font-size="13.95" text-anchor="middle" textLength="38.0" lengthAdjust="spacingAndGlyphs" fill="#dedede" >100W</text>
<rect x="818.5" y="279.5" width="115" height="2" fill="#1a1a1a"/>
<rect x="377.2" y="470.1" width="591.4" height="163.1" fill="#000"/>
<rect x="394.3" y="478.6" width="61.6" height="130.7" fill="#c3c6c3"/>
<rect x="394.3" y="544.2" width="61.6" height="65.1" fill="#c4c4c4"/>
<rect x="394.3" y="478.6" width="61.6" height="130.7" fill="none" stroke="#f0f0f0" stroke-width="1"/>
<text x="425.1" y="625.0" font-size="13.95" text-anchor="middle" fill="#f4f4f4" >White</text>
<rect x="466.5" y="478.6" width="61.6" height="130.7" fill="#b83232"/>
<rect x="466.5" y="544.2" width="61.6" height="65.1" fill="#d4001e"/>
<rect x="466.5" y="478.6" width="61.6" height="130.7" fill="none" stroke="#f0f0f0" stroke-width="1"/>
<text x="497.3" y="625.0" font-size="13.95" text-anchor="middle" fill="#f4f4f4" >Red</text>
<rect x="538.7" y="478.6" width="61.6" height="130.7" fill="#6ac87a"/>
<rect x="538.7" y="544.2" width="61.6" height="65.1" fill="#00c84c"/>
<rect x="538.7" y="478.6" width="61.6" height="130.7" fill="none" stroke="#f0f0f0" stroke-width="1"/>
<text x="569.5" y="625.0" font-size="13.95" text-anchor="middle" fill="#f4f4f4" >Green</text>
<rect x="610.9" y="478.6" width="61.6" height="130.7" fill="#000cc0"/>
<rect x="610.9" y="544.2" width="61.6" height="65.1" fill="#000cc4"/>
<rect x="610.9" y="478.6" width="61.6" height="130.7" fill="none" stroke="#f0f0f0" stroke-width="1"/>
<text x="641.7" y="625.0" font-size="13.95" text-anchor="middle" fill="#f4f4f4" >Blue</text>
<rect x="683.1" y="478.6" width="61.6" height="130.7" fill="#6ccaca"/>
<rect x="683.1" y="544.2" width="61.6" height="65.1" fill="#00cac8"/>
<rect x="683.1" y="478.6" width="61.6" height="130.7" fill="none" stroke="#f0f0f0" stroke-width="1"/>
<text x="713.9" y="625.0" font-size="13.95" text-anchor="middle" fill="#f4f4f4" >Cyan</text>
<rect x="755.3" y="478.6" width="61.6" height="130.7" fill="#c032c2"/>
<rect x="755.3" y="544.2" width="61.6" height="65.1" fill="#d000cc"/>
<rect x="755.3" y="478.6" width="61.6" height="130.7" fill="none" stroke="#f0f0f0" stroke-width="1"/>
<text x="786.1" y="625.0" font-size="13.95" text-anchor="middle" fill="#f4f4f4" >Magenta</text>
<rect x="827.5" y="478.6" width="61.6" height="130.7" fill="#c0c25a"/>
<rect x="827.5" y="544.2" width="61.6" height="65.1" fill="#c8c800"/>
<rect x="827.5" y="478.6" width="61.6" height="130.7" fill="none" stroke="#f0f0f0" stroke-width="1"/>
<text x="858.3" y="625.0" font-size="13.95" text-anchor="middle" fill="#f4f4f4" >Yellow</text>
<rect x="899.7" y="478.6" width="61.6" height="130.7" fill="#f8fff9"/>
<rect x="899.7" y="544.2" width="61.6" height="65.1" fill="#ffffff"/>
<rect x="899.7" y="478.6" width="61.6" height="130.7" fill="none" stroke="#f0f0f0" stroke-width="1"/>
<text x="930.5" y="625.0" font-size="13.95" text-anchor="middle" fill="#f4f4f4" >100W</text>
<text x="0.0" y="0.0" font-size="13.95" text-anchor="middle" fill="#f4f4f4" transform="translate(389.5,510) rotate(-90)">Actual</text>
<text x="0.0" y="0.0" font-size="13.95" text-anchor="middle" fill="#f4f4f4" transform="translate(389.5,579) rotate(-90)">Target</text>
<rect x="975.7" y="89" width="700" height="557.5" fill="#1c1c1c"/>
<rect x="982" y="96" width="681" height="544.6" fill="#333"/>
<text x="1322.8" y="114.2" font-size="13.81" text-anchor="middle" textLength="84.0" lengthAdjust="spacingAndGlyphs" fill="#dcdcdc" >CIE 1976 u'v'</text>
<rect x="1019.5" y="119.7" width="639.9" height="491.6" fill="#232323" stroke="#ababab" stroke-width="1"/>
<path d="M1014.5,611.3H1019.5M1019.5,611.3V617M1014.5,570.4H1019.5M1072.8,611.3V617M1014.5,529.5H1019.5M1126.1,611.3V617M1014.5,488.6H1019.5M1179.4,611.3V617M1014.5,447.7H1019.5M1232.7,611.3V617M1014.5,406.8H1019.5M1286.0,611.3V617M1014.5,365.9H1019.5M1339.3,611.3V617M1014.5,325.0H1019.5M1392.6,611.3V617M1014.5,284.1H1019.5M1445.9,611.3V617M1014.5,243.2H1019.5M1499.2,611.3V617M1014.5,202.3H1019.5M1552.5,611.3V617M1014.5,161.4H1019.5M1605.8,611.3V617" stroke="#b0b0b0" stroke-width="1"/>
<text x="1014.0" y="618.3" font-size="13.95" text-anchor="end" fill="#dedede" >0</text>
<text x="1019.5" y="633.0" font-size="13.95" text-anchor="middle" fill="#dedede" >0</text>
<text x="1014.0" y="575.4" font-size="13.95" text-anchor="end" fill="#dedede" >0,05</text>
<text x="1072.8" y="633.0" font-size="13.95" text-anchor="middle" fill="#dedede" >0,05</text>
<text x="1014.0" y="534.5" font-size="13.95" text-anchor="end" fill="#dedede" >0,1</text>
<text x="1126.1" y="633.0" font-size="13.95" text-anchor="middle" fill="#dedede" >0,1</text>
<text x="1014.0" y="493.6" font-size="13.95" text-anchor="end" fill="#dedede" >0,15</text>
<text x="1179.4" y="633.0" font-size="13.95" text-anchor="middle" fill="#dedede" >0,15</text>
<text x="1014.0" y="452.7" font-size="13.95" text-anchor="end" fill="#dedede" >0,2</text>
<text x="1232.7" y="633.0" font-size="13.95" text-anchor="middle" fill="#dedede" >0,2</text>
<text x="1014.0" y="411.8" font-size="13.95" text-anchor="end" fill="#dedede" >0,25</text>
<text x="1286.0" y="633.0" font-size="13.95" text-anchor="middle" fill="#dedede" >0,25</text>
<text x="1014.0" y="370.9" font-size="13.95" text-anchor="end" fill="#dedede" >0,3</text>
<text x="1339.3" y="633.0" font-size="13.95" text-anchor="middle" fill="#dedede" >0,3</text>
<text x="1014.0" y="330.0" font-size="13.95" text-anchor="end" fill="#dedede" >0,35</text>
<text x="1392.6" y="633.0" font-size="13.95" text-anchor="middle" fill="#dedede" >0,35</text>
<text x="1014.0" y="289.1" font-size="13.95" text-anchor="end" fill="#dedede" >0,4</text>
<text x="1445.9" y="633.0" font-size="13.95" text-anchor="middle" fill="#dedede" >0,4</text>
<text x="1014.0" y="248.2" font-size="13.95" text-anchor="end" fill="#dedede" >0,45</text>
<text x="1499.2" y="633.0" font-size="13.95" text-anchor="middle" fill="#dedede" >0,45</text>
<text x="1014.0" y="207.3" font-size="13.95" text-anchor="end" fill="#dedede" >0,5</text>
<text x="1552.5" y="633.0" font-size="13.95" text-anchor="middle" fill="#dedede" >0,5</text>
<text x="1014.0" y="166.4" font-size="13.95" text-anchor="end" fill="#dedede" >0,55</text>
<text x="1605.8" y="633.0" font-size="13.95" text-anchor="middle" fill="#dedede" >0,55</text>
<g clip-path="url(#plotclip)"><g clip-path="url(#locclip)">
<path d="M1548.6,179.7 L1628.7,-616.3 L2004.8,33.3 L2076.8,780.5 Z" fill="#990000"/>
<path d="M1124.6,137.1 L1204.7,-658.9 L601.0,-320.7 L346.4,322.7 Z" fill="#009900"/>
<path d="M1206.5,480.4 L1734.7,1081.3 L1019.0,1070.3 L428.3,666.1 Z" fill="#000099"/>
<path d="M1608.1,187.7 L1064.7,133.0 L1145.0,-664.9 L1688.4,-610.3 Z" fill="url(#oe0)"/>
<path d="M1112.6,78.2 L1222.4,538.3 L442.3,724.4 L332.5,264.3 Z" fill="url(#oe1)"/>
<path d="M1160.1,518.6 L1592.4,138.6 L2121.9,740.9 L1689.7,1120.9 Z" fill="url(#oe2)"/>
</g>
<g clip-path="url(#triclip)">
<path d="M1229.4,227.2 L1750.4,227.2 L1749.9,204.0 L1229.4,225.8 Z" fill="url(#in0)"/>
<path d="M1229.4,227.3 L1750.0,205.4 L1748.5,182.3 L1229.3,225.9 Z" fill="url(#in1)"/>
<path d="M1229.5,227.3 L1748.6,183.7 L1746.2,160.6 L1229.3,225.9 Z" fill="url(#in2)"/>
<path d="M1229.5,227.4 L1746.4,162.0 L1743.0,139.1 L1229.3,226.0 Z" fill="url(#in3)"/>
<path d="M1229.5,227.4 L1743.2,140.5 L1738.9,117.7 L1229.3,226.0 Z" fill="url(#in4)"/>
<path d="M1229.6,227.4 L1739.2,119.1 L1733.9,96.5 L1229.2,226.1 Z" fill="url(#in5)"/>
<path d="M1229.6,227.5 L1734.2,97.9 L1728.0,75.5 L1229.2,226.1 Z" fill="url(#in6)"/>
<path d="M1229.6,227.5 L1728.4,76.9 L1721.2,54.8 L1229.2,226.2 Z" fill="url(#in7)"/>
<path d="M1229.7,227.5 L1721.7,56.2 L1713.6,34.4 L1229.2,226.2 Z" fill="url(#in8)"/>
<path d="M1229.7,227.6 L1714.1,35.7 L1705.1,14.4 L1229.2,226.3 Z" fill="url(#in9)"/>
<path d="M1229.8,227.6 L1705.7,15.7 L1695.8,-5.3 L1229.2,226.3 Z" fill="url(#in10)"/>
<path d="M1229.8,227.6 L1696.5,-4.1 L1685.7,-24.6 L1229.2,226.4 Z" fill="url(#in11)"/>
<path d="M1229.9,227.6 L1686.4,-23.4 L1674.8,-43.5 L1229.2,226.4 Z" fill="url(#in12)"/>
<path d="M1229.9,227.6 L1675.5,-42.3 L1663.1,-61.8 L1229.2,226.5 Z" fill="url(#in13)"/>
<path d="M1230.0,227.7 L1663.9,-60.7 L1650.7,-79.7 L1229.2,226.5 Z" fill="url(#in14)"/>
<path d="M1230.0,227.7 L1651.5,-78.6 L1637.5,-97.0 L1229.2,226.6 Z" fill="url(#in15)"/>
<path d="M1230.1,227.7 L1638.3,-95.9 L1623.6,-113.8 L1229.2,226.6 Z" fill="url(#in16)"/>
<path d="M1230.1,227.7 L1624.5,-112.7 L1609.0,-130.0 L1229.2,226.7 Z" fill="url(#in17)"/>
<path d="M1230.2,227.7 L1609.9,-128.9 L1593.7,-145.5 L1229.2,226.7 Z" fill="url(#in18)"/>
<path d="M1230.2,227.7 L1594.7,-144.5 L1577.8,-160.4 L1229.2,226.8 Z" fill="url(#in19)"/>
<path d="M1230.3,227.7 L1578.9,-159.5 L1561.3,-174.6 L1229.2,226.8 Z" fill="url(#in20)"/>
<path d="M1230.3,227.7 L1562.4,-173.7 L1544.2,-188.1 L1229.2,226.9 Z" fill="url(#in21)"/>
<path d="M1230.4,227.7 L1545.3,-187.3 L1526.6,-200.9 L1229.2,226.9 Z" fill="url(#in22)"/>
<path d="M1230.4,227.7 L1527.7,-200.1 L1508.4,-212.9 L1229.2,227.0 Z" fill="url(#in23)"/>
<path d="M1230.5,227.7 L1509.6,-212.2 L1489.8,-224.2 L1229.3,227.0 Z" fill="url(#in24)"/>
<path d="M1230.5,227.7 L1491.0,-223.5 L1470.7,-234.6 L1229.3,227.1 Z" fill="url(#in25)"/>
<path d="M1230.6,227.7 L1471.9,-234.0 L1451.2,-244.3 L1229.3,227.1 Z" fill="url(#in26)"/>
<path d="M1230.6,227.7 L1452.4,-243.7 L1431.2,-253.1 L1229.3,227.2 Z" fill="url(#in27)"/>
<path d="M1230.7,227.7 L1432.5,-252.6 L1411.0,-261.1 L1229.4,227.2 Z" fill="url(#in28)"/>
<path d="M1230.7,227.7 L1412.3,-260.6 L1390.4,-268.3 L1229.4,227.2 Z" fill="url(#in29)"/>
<path d="M1230.8,227.7 L1391.7,-267.8 L1369.6,-274.5 L1229.4,227.3 Z" fill="url(#in30)"/>
<path d="M1230.8,227.7 L1370.9,-274.1 L1348.4,-279.9 L1229.5,227.3 Z" fill="url(#in31)"/>
<path d="M1230.9,227.7 L1349.8,-279.6 L1327.1,-284.4 L1229.5,227.4 Z" fill="url(#in32)"/>
<path d="M1230.9,227.6 L1328.5,-284.1 L1305.7,-288.0 L1229.5,227.4 Z" fill="url(#in33)"/>
<path d="M1231.0,227.6 L1307.0,-287.8 L1284.0,-290.7 L1229.6,227.4 Z" fill="url(#in34)"/>
<path d="M1231.0,227.6 L1285.4,-290.6 L1262.3,-292.5 L1229.6,227.5 Z" fill="url(#in35)"/>
<path d="M1231.0,227.6 L1263.7,-292.4 L1240.6,-293.4 L1229.6,227.5 Z" fill="url(#in36)"/>
<path d="M1231.1,227.5 L1242.0,-293.4 L1218.8,-293.4 L1229.7,227.5 Z" fill="url(#in37)"/>
<path d="M1231.1,227.5 L1220.2,-293.4 L1197.0,-292.4 L1229.7,227.6 Z" fill="url(#in38)"/>
<path d="M1231.2,227.5 L1198.4,-292.5 L1175.3,-290.6 L1229.8,227.6 Z" fill="url(#in39)"/>
<path d="M1231.2,227.4 L1176.7,-290.7 L1153.7,-287.8 L1229.8,227.6 Z" fill="url(#in40)"/>
<path d="M1231.2,227.4 L1155.1,-288.0 L1132.3,-284.1 L1229.9,227.6 Z" fill="url(#in41)"/>
<path d="M1231.3,227.4 L1133.6,-284.4 L1111.0,-279.6 L1229.9,227.7 Z" fill="url(#in42)"/>
<path d="M1231.3,227.3 L1112.3,-279.9 L1089.9,-274.1 L1230.0,227.7 Z" fill="url(#in43)"/>
<path d="M1231.4,227.3 L1091.2,-274.5 L1069.0,-267.8 L1230.0,227.7 Z" fill="url(#in44)"/>
<path d="M1231.4,227.2 L1070.4,-268.3 L1048.5,-260.6 L1230.1,227.7 Z" fill="url(#in45)"/>
<path d="M1231.4,227.2 L1049.8,-261.1 L1028.2,-252.6 L1230.1,227.7 Z" fill="url(#in46)"/>
<path d="M1231.4,227.2 L1029.5,-253.1 L1008.3,-243.7 L1230.2,227.7 Z" fill="url(#in47)"/>
<path d="M1231.5,227.1 L1009.6,-244.3 L988.9,-234.0 L1230.2,227.7 Z" fill="url(#in48)"/>
<path d="M1231.5,227.1 L990.1,-234.6 L969.8,-223.5 L1230.3,227.7 Z" fill="url(#in49)"/>
<path d="M1231.5,227.0 L971.0,-224.2 L951.2,-212.2 L1230.3,227.7 Z" fill="url(#in50)"/>
<path d="M1231.5,227.0 L952.3,-212.9 L933.0,-200.1 L1230.4,227.7 Z" fill="url(#in51)"/>
<path d="M1231.5,226.9 L934.2,-200.9 L915.4,-187.3 L1230.4,227.7 Z" fill="url(#in52)"/>
<path d="M1231.6,226.9 L916.6,-188.1 L898.4,-173.7 L1230.5,227.7 Z" fill="url(#in53)"/>
<path d="M1231.6,226.8 L899.5,-174.6 L881.9,-159.5 L1230.5,227.7 Z" fill="url(#in54)"/>
<path d="M1231.6,226.8 L883.0,-160.4 L866.1,-144.5 L1230.6,227.7 Z" fill="url(#in55)"/>
<path d="M1231.6,226.7 L867.1,-145.5 L850.8,-128.9 L1230.6,227.7 Z" fill="url(#in56)"/>
<path d="M1231.6,226.7 L851.8,-130.0 L836.3,-112.7 L1230.7,227.7 Z" fill="url(#in57)"/>
<path d="M1231.6,226.6 L837.2,-113.8 L822.4,-95.9 L1230.7,227.7 Z" fill="url(#in58)"/>
<path d="M1231.6,226.6 L823.3,-97.0 L809.3,-78.6 L1230.8,227.7 Z" fill="url(#in59)"/>
<path d="M1231.6,226.5 L810.1,-79.7 L796.9,-60.7 L1230.8,227.7 Z" fill="url(#in60)"/>
<path d="M1231.6,226.5 L797.7,-61.8 L785.2,-42.3 L1230.9,227.6 Z" fill="url(#in61)"/>
<path d="M1231.6,226.4 L786.0,-43.5 L774.4,-23.4 L1230.9,227.6 Z" fill="url(#in62)"/>
<path d="M1231.6,226.4 L775.0,-24.6 L764.3,-4.1 L1231.0,227.6 Z" fill="url(#in63)"/>
<path d="M1231.6,226.3 L764.9,-5.3 L755.1,15.7 L1231.0,227.6 Z" fill="url(#in64)"/>
<path d="M1231.6,226.3 L755.6,14.4 L746.6,35.7 L1231.1,227.6 Z" fill="url(#in65)"/>
<path d="M1231.6,226.2 L747.2,34.4 L739.1,56.2 L1231.1,227.5 Z" fill="url(#in66)"/>
<path d="M1231.6,226.2 L739.5,54.8 L732.4,76.9 L1231.1,227.5 Z" fill="url(#in67)"/>
<path d="M1231.6,226.1 L732.8,75.5 L726.5,97.9 L1231.2,227.5 Z" fill="url(#in68)"/>
<path d="M1231.5,226.1 L726.9,96.5 L721.6,119.1 L1231.2,227.4 Z" fill="url(#in69)"/>
<path d="M1231.5,226.0 L721.9,117.7 L717.6,140.5 L1231.3,227.4 Z" fill="url(#in70)"/>
<path d="M1231.5,226.0 L717.8,139.1 L714.4,162.0 L1231.3,227.4 Z" fill="url(#in71)"/>
<path d="M1231.5,225.9 L714.6,160.6 L712.2,183.7 L1231.3,227.3 Z" fill="url(#in72)"/>
<path d="M1231.4,225.9 L712.3,182.3 L710.8,205.4 L1231.4,227.3 Z" fill="url(#in73)"/>
<path d="M1231.4,225.8 L710.9,204.0 L710.4,227.2 L1231.4,227.2 Z" fill="url(#in74)"/>
<path d="M1231.4,225.8 L710.4,225.8 L710.9,249.0 L1231.4,227.2 Z" fill="url(#in75)"/>
<path d="M1231.4,225.8 L710.8,247.6 L712.3,270.7 L1231.4,227.1 Z" fill="url(#in76)"/>
<path d="M1231.3,225.7 L712.2,269.3 L714.6,292.4 L1231.5,227.1 Z" fill="url(#in77)"/>
<path d="M1231.3,225.7 L714.4,291.0 L717.8,313.9 L1231.5,227.1 Z" fill="url(#in78)"/>
<path d="M1231.3,225.6 L717.6,312.5 L721.9,335.3 L1231.5,227.0 Z" fill="url(#in79)"/>
<path d="M1231.2,225.6 L721.6,333.9 L726.9,356.5 L1231.5,227.0 Z" fill="url(#in80)"/>
<path d="M1231.2,225.6 L726.5,355.2 L732.8,377.5 L1231.6,226.9 Z" fill="url(#in81)"/>
<path d="M1231.1,225.5 L732.4,376.1 L739.5,398.2 L1231.6,226.9 Z" fill="url(#in82)"/>
<path d="M1231.1,225.5 L739.1,396.9 L747.2,418.6 L1231.6,226.8 Z" fill="url(#in83)"/>
<path d="M1231.1,225.5 L746.6,417.3 L755.6,438.7 L1231.6,226.8 Z" fill="url(#in84)"/>
<path d="M1231.0,225.4 L755.1,437.4 L764.9,458.4 L1231.6,226.7 Z" fill="url(#in85)"/>
<path d="M1231.0,225.4 L764.3,457.1 L775.0,477.6 L1231.6,226.7 Z" fill="url(#in86)"/>
<path d="M1230.9,225.4 L774.4,476.4 L786.0,496.5 L1231.6,226.6 Z" fill="url(#in87)"/>
<path d="M1230.9,225.4 L785.2,495.3 L797.7,514.9 L1231.6,226.6 Z" fill="url(#in88)"/>
<path d="M1230.8,225.4 L796.9,513.7 L810.1,532.7 L1231.6,226.5 Z" fill="url(#in89)"/>
<path d="M1230.8,225.3 L809.3,531.6 L823.3,550.1 L1231.6,226.5 Z" fill="url(#in90)"/>
<path d="M1230.7,225.3 L822.4,549.0 L837.2,566.8 L1231.6,226.4 Z" fill="url(#in91)"/>
<path d="M1230.7,225.3 L836.3,565.8 L851.8,583.0 L1231.6,226.4 Z" fill="url(#in92)"/>
<path d="M1230.6,225.3 L850.8,582.0 L867.1,598.5 L1231.6,226.3 Z" fill="url(#in93)"/>
<path d="M1230.6,225.3 L866.1,597.6 L883.0,613.4 L1231.6,226.3 Z" fill="url(#in94)"/>
<path d="M1230.5,225.3 L881.9,612.5 L899.5,627.6 L1231.6,226.2 Z" fill="url(#in95)"/>
<path d="M1230.5,225.3 L898.4,626.7 L916.6,641.1 L1231.6,226.2 Z" fill="url(#in96)"/>
<path d="M1230.4,225.3 L915.4,640.3 L934.2,653.9 L1231.5,226.1 Z" fill="url(#in97)"/>
<path d="M1230.4,225.3 L933.0,653.1 L952.3,665.9 L1231.5,226.1 Z" fill="url(#in98)"/>
<path d="M1230.3,225.3 L951.2,665.2 L971.0,677.2 L1231.5,226.0 Z" fill="url(#in99)"/>
<path d="M1230.3,225.3 L969.8,676.5 L990.1,687.7 L1231.5,226.0 Z" fill="url(#in100)"/>
<path d="M1230.2,225.3 L988.9,687.0 L1009.6,697.3 L1231.5,225.9 Z" fill="url(#in101)"/>
<path d="M1230.2,225.3 L1008.3,696.7 L1029.5,706.2 L1231.4,225.9 Z" fill="url(#in102)"/>
<path d="M1230.1,225.3 L1028.2,705.6 L1049.8,714.1 L1231.4,225.8 Z" fill="url(#in103)"/>
<path d="M1230.1,225.3 L1048.5,713.7 L1070.4,721.3 L1231.4,225.8 Z" fill="url(#in104)"/>
<path d="M1230.0,225.3 L1069.0,720.8 L1091.2,727.5 L1231.4,225.7 Z" fill="url(#in105)"/>
<path d="M1230.0,225.4 L1089.9,727.2 L1112.3,732.9 L1231.3,225.7 Z" fill="url(#in106)"/>
<path d="M1229.9,225.4 L1111.0,732.6 L1133.6,737.4 L1231.3,225.7 Z" fill="url(#in107)"/>
<path d="M1229.9,225.4 L1132.3,737.2 L1155.1,741.0 L1231.2,225.6 Z" fill="url(#in108)"/>
<path d="M1229.8,225.4 L1153.7,740.8 L1176.7,743.7 L1231.2,225.6 Z" fill="url(#in109)"/>
<path d="M1229.8,225.4 L1175.3,743.6 L1198.4,745.5 L1231.2,225.6 Z" fill="url(#in110)"/>
<path d="M1229.7,225.5 L1197.0,745.4 L1220.2,746.4 L1231.1,225.5 Z" fill="url(#in111)"/>
<path d="M1229.7,225.5 L1218.8,746.4 L1242.0,746.4 L1231.1,225.5 Z" fill="url(#in112)"/>
<path d="M1229.6,225.5 L1240.6,746.4 L1263.7,745.4 L1231.0,225.5 Z" fill="url(#in113)"/>
<path d="M1229.6,225.6 L1262.3,745.5 L1285.4,743.6 L1231.0,225.4 Z" fill="url(#in114)"/>
<path d="M1229.6,225.6 L1284.0,743.7 L1307.0,740.8 L1231.0,225.4 Z" fill="url(#in115)"/>
<path d="M1229.5,225.6 L1305.7,741.0 L1328.5,737.2 L1230.9,225.4 Z" fill="url(#in116)"/>
<path d="M1229.5,225.7 L1327.1,737.4 L1349.8,732.6 L1230.9,225.4 Z" fill="url(#in117)"/>
<path d="M1229.5,225.7 L1348.4,732.9 L1370.9,727.2 L1230.8,225.4 Z" fill="url(#in118)"/>
<path d="M1229.4,225.7 L1369.6,727.5 L1391.7,720.8 L1230.8,225.3 Z" fill="url(#in119)"/>
<path d="M1229.4,225.8 L1390.4,721.3 L1412.3,713.7 L1230.7,225.3 Z" fill="url(#in120)"/>
<path d="M1229.4,225.8 L1411.0,714.1 L1432.5,705.6 L1230.7,225.3 Z" fill="url(#in121)"/>
<path d="M1229.3,225.9 L1431.2,706.2 L1452.4,696.7 L1230.6,225.3 Z" fill="url(#in122)"/>
<path d="M1229.3,225.9 L1451.2,697.3 L1471.9,687.0 L1230.6,225.3 Z" fill="url(#in123)"/>
<path d="M1229.3,226.0 L1470.7,687.7 L1491.0,676.5 L1230.5,225.3 Z" fill="url(#in124)"/>
<path d="M1229.3,226.0 L1489.8,677.2 L1509.6,665.2 L1230.5,225.3 Z" fill="url(#in125)"/>
<path d="M1229.2,226.1 L1508.4,665.9 L1527.7,653.1 L1230.4,225.3 Z" fill="url(#in126)"/>
<path d="M1229.2,226.1 L1526.6,653.9 L1545.3,640.3 L1230.4,225.3 Z" fill="url(#in127)"/>
<path d="M1229.2,226.2 L1544.2,641.1 L1562.4,626.7 L1230.3,225.3 Z" fill="url(#in128)"/>
<path d="M1229.2,226.2 L1561.3,627.6 L1578.9,612.5 L1230.3,225.3 Z" fill="url(#in129)"/>
<path d="M1229.2,226.3 L1577.8,613.4 L1594.7,597.6 L1230.2,225.3 Z" fill="url(#in130)"/>
<path d="M1229.2,226.3 L1593.7,598.5 L1609.9,582.0 L1230.2,225.3 Z" fill="url(#in131)"/>
<path d="M1229.2,226.4 L1609.0,583.0 L1624.5,565.8 L1230.1,225.3 Z" fill="url(#in132)"/>
<path d="M1229.2,226.4 L1623.6,566.8 L1638.3,549.0 L1230.1,225.3 Z" fill="url(#in133)"/>
<path d="M1229.2,226.5 L1637.5,550.1 L1651.5,531.6 L1230.0,225.3 Z" fill="url(#in134)"/>
<path d="M1229.2,226.5 L1650.7,532.7 L1663.9,513.7 L1230.0,225.4 Z" fill="url(#in135)"/>
<path d="M1229.2,226.6 L1663.1,514.9 L1675.5,495.3 L1229.9,225.4 Z" fill="url(#in136)"/>
<path d="M1229.2,226.6 L1674.8,496.5 L1686.4,476.4 L1229.9,225.4 Z" fill="url(#in137)"/>
<path d="M1229.2,226.7 L1685.7,477.6 L1696.5,457.1 L1229.8,225.4 Z" fill="url(#in138)"/>
<path d="M1229.2,226.7 L1695.8,458.4 L1705.7,437.4 L1229.8,225.4 Z" fill="url(#in139)"/>
<path d="M1229.2,226.8 L1705.1,438.7 L1714.1,417.3 L1229.7,225.5 Z" fill="url(#in140)"/>
<path d="M1229.2,226.8 L1713.6,418.6 L1721.7,396.9 L1229.7,225.5 Z" fill="url(#in141)"/>
<path d="M1229.2,226.9 L1721.2,398.2 L1728.4,376.1 L1229.6,225.5 Z" fill="url(#in142)"/>
<path d="M1229.2,226.9 L1728.0,377.5 L1734.2,355.2 L1229.6,225.6 Z" fill="url(#in143)"/>
<path d="M1229.2,227.0 L1733.9,356.5 L1739.2,333.9 L1229.6,225.6 Z" fill="url(#in144)"/>
<path d="M1229.3,227.0 L1738.9,335.3 L1743.2,312.5 L1229.5,225.6 Z" fill="url(#in145)"/>
<path d="M1229.3,227.1 L1743.0,313.9 L1746.4,291.0 L1229.5,225.7 Z" fill="url(#in146)"/>
<path d="M1229.3,227.1 L1746.2,292.4 L1748.6,269.3 L1229.5,225.7 Z" fill="url(#in147)"/>
<path d="M1229.3,227.1 L1748.5,270.7 L1750.0,247.6 L1229.4,225.8 Z" fill="url(#in148)"/>
<path d="M1229.4,227.2 L1749.9,249.0 L1750.4,225.8 L1229.4,225.8 Z" fill="url(#in149)"/>
</g></g>
<circle cx="1152.7" cy="148.8" r="4.3" fill="#1d8a1d" stroke="#1a1a1a" stroke-width="1.3"/>
<circle cx="1233.3" cy="156.8" r="4.3" fill="#a8a81a" stroke="#1a1a1a" stroke-width="1.3"/>
<circle cx="1166.3" cy="234.7" r="4.3" fill="#1a9a9a" stroke="#1a1a1a" stroke-width="1.3"/>
<circle cx="1504.0" cy="180.9" r="4.3" fill="#c00000" stroke="#1a1a1a" stroke-width="1.3"/>
<circle cx="1341.3" cy="342.4" r="4.3" fill="#9a109a" stroke="#1a1a1a" stroke-width="1.3"/>
<circle cx="1205.9" cy="476.0" r="4.3" fill="#1010a0" stroke="#1a1a1a" stroke-width="1.3"/>
<rect x="1118.0" y="130.5" width="13.2" height="13.2" fill="none" stroke="#f4f4f4" stroke-width="1.8"/>
<rect x="1542.0" y="173.1" width="13.2" height="13.2" fill="none" stroke="#f4f4f4" stroke-width="1.8"/>
<rect x="1199.9" y="473.8" width="13.2" height="13.2" fill="none" stroke="#f4f4f4" stroke-width="1.8"/>
<rect x="1231.1" y="141.8" width="13.2" height="13.2" fill="none" stroke="#f4f4f4" stroke-width="1.8"/>
<rect x="1142.2" y="231.9" width="13.2" height="13.2" fill="none" stroke="#f4f4f4" stroke-width="1.8"/>
<rect x="1358.8" y="334.1" width="13.2" height="13.2" fill="none" stroke="#f4f4f4" stroke-width="1.8"/>
<rect x="1223.8" y="219.9" width="13.2" height="13.2" fill="none" stroke="#000" stroke-width="2.2"/>
<circle cx="1227.0" cy="225.0" r="4.3" fill="#ffffff" stroke="#111" stroke-width="1.3"/>
<rect x="1403" y="580" width="254" height="27" fill="#2e2e2e"/>
<text x="1405.0" y="601.0" font-size="19.62" textLength="222.0" lengthAdjust="spacingAndGlyphs" fill="#f2f2f2" >Gamut Coverage:  74,4%</text>
<text x="15.9" y="712.8" font-size="28.92" textLength="218.7" lengthAdjust="spacingAndGlyphs" fill="#f2f2f2" >Current Reading</text>
<text x="15.9" y="782.4" font-size="24.56" textLength="102.8" lengthAdjust="spacingAndGlyphs" fill="#f2f2f2" >x: 0,3098</text>
<text x="173.0" y="782.4" font-size="24.56" textLength="87.5" lengthAdjust="spacingAndGlyphs" fill="#f2f2f2" >y: 0,332</text>
<text x="15.9" y="823.2" font-size="24.56" textLength="96.0" lengthAdjust="spacingAndGlyphs" fill="#f2f2f2" >fL: 181,3</text>
<text x="15.9" y="863.0" font-size="24.56" textLength="159.0" lengthAdjust="spacingAndGlyphs" fill="#f2f2f2" >cd/m²: 621,17</text>
<text x="468.6" y="681.0" font-size="14.54" text-anchor="middle" textLength="82.3" lengthAdjust="spacingAndGlyphs" fill="#dcdcdc" >RGB Balance</text>
<rect x="358.4" y="685.8" width="250.2" height="180.5" fill="#232323" stroke="#a0a0a0" stroke-width="1"/>
<path d="M358.4,704.1H608.6M352.5,704.1H358.4M358.4,740.4H608.6M352.5,740.4H358.4M358.4,776.7H608.6M352.5,776.7H358.4M358.4,813.0H608.6M352.5,813.0H358.4M358.4,849.3H608.6M352.5,849.3H358.4M358.4,866.3V872M608.6,866.3V872" stroke="#9a9a9a" stroke-width="1"/>
<text x="352.0" y="708.9" font-size="13.95" text-anchor="end" textLength="21.4" lengthAdjust="spacingAndGlyphs" fill="#dedede" >104</text>
<text x="352.0" y="745.2" font-size="13.95" text-anchor="end" textLength="21.4" lengthAdjust="spacingAndGlyphs" fill="#dedede" >102</text>
<text x="352.0" y="781.5" font-size="13.95" text-anchor="end" textLength="21.4" lengthAdjust="spacingAndGlyphs" fill="#dedede" >100</text>
<text x="352.0" y="817.8" font-size="13.95" text-anchor="end" textLength="14.3" lengthAdjust="spacingAndGlyphs" fill="#dedede" >98</text>
<text x="352.0" y="854.1" font-size="13.95" text-anchor="end" textLength="14.3" lengthAdjust="spacingAndGlyphs" fill="#dedede" >96</text>
<text x="483.8" y="882.3" font-size="13.95" text-anchor="middle" textLength="37.3" lengthAdjust="spacingAndGlyphs" fill="#dedede" >100W</text>
<rect x="383.6" y="804.3" width="64.9" height="62" fill="url(#rbr)" stroke="#000" stroke-width="1.6"/>
<rect x="448.5" y="767.7" width="66.5" height="98.6" fill="url(#rbg)" stroke="#000" stroke-width="1.6"/>
<rect x="515" y="783.7" width="66.3" height="82.6" fill="url(#rbb)" stroke="#000" stroke-width="1.6"/>
<path d="M358.4,866.3H608.6" stroke="#a0a0a0" stroke-width="1"/>
<text x="808.7" y="671.1" font-size="13.52" text-anchor="middle" textLength="75.0" lengthAdjust="spacingAndGlyphs" fill="#dcdcdc" >CIE 1931 xy</text>
<g clip-path="url(#xyclip)">
<path d="M807.5,776.2 L994.4,776.2 L993.9,762.6 L807.5,774.8 Z" fill="url(#xy0)"/>
<path d="M807.6,776.3 L994.8,764.0 L993.4,750.4 L807.4,774.9 Z" fill="url(#xy1)"/>
<path d="M807.6,776.4 L995.1,751.6 L992.9,738.1 L807.4,775.0 Z" fill="url(#xy2)"/>
<path d="M807.7,776.4 L995.4,739.0 L992.2,725.5 L807.3,775.1 Z" fill="url(#xy3)"/>
<path d="M807.7,776.5 L995.6,726.1 L991.5,712.6 L807.3,775.1 Z" fill="url(#xy4)"/>
<path d="M807.8,776.5 L995.8,712.7 L990.8,699.2 L807.3,775.2 Z" fill="url(#xy5)"/>
<path d="M807.9,776.6 L996.0,698.6 L989.9,685.3 L807.3,775.3 Z" fill="url(#xy6)"/>
<path d="M807.9,776.6 L996.1,683.8 L989.0,670.5 L807.3,775.4 Z" fill="url(#xy7)"/>
<path d="M808.0,776.6 L982.3,675.9 L974.7,663.6 L807.3,775.4 Z" fill="url(#xy8)"/>
<path d="M808.1,776.7 L961.0,674.4 L953.2,663.6 L807.3,775.5 Z" fill="url(#xy9)"/>
<path d="M808.2,776.7 L943.1,673.1 L935.2,663.5 L807.3,775.6 Z" fill="url(#xy10)"/>
<path d="M808.2,776.7 L927.7,671.9 L919.7,663.3 L807.3,775.7 Z" fill="url(#xy11)"/>
<path d="M808.3,776.7 L914.2,670.8 L906.1,663.1 L807.3,775.8 Z" fill="url(#xy12)"/>
<path d="M808.4,776.7 L902.2,669.7 L894.0,663.0 L807.3,775.8 Z" fill="url(#xy13)"/>
<path d="M808.5,776.7 L891.3,668.8 L883.0,662.8 L807.3,775.9 Z" fill="url(#xy14)"/>
<path d="M808.6,776.7 L881.2,667.9 L872.8,662.7 L807.4,776.0 Z" fill="url(#xy15)"/>
<path d="M808.6,776.7 L871.9,667.1 L863.4,662.6 L807.4,776.1 Z" fill="url(#xy16)"/>
<path d="M808.7,776.7 L863.1,666.4 L854.6,662.5 L807.4,776.1 Z" fill="url(#xy17)"/>
<path d="M808.8,776.7 L854.7,665.7 L846.1,662.5 L807.5,776.2 Z" fill="url(#xy18)"/>
<path d="M808.9,776.7 L846.7,665.1 L838.1,662.5 L807.5,776.3 Z" fill="url(#xy19)"/>
<path d="M808.9,776.7 L839.0,664.6 L830.3,662.5 L807.6,776.3 Z" fill="url(#xy20)"/>
<path d="M809.0,776.6 L831.4,664.1 L822.7,662.6 L807.6,776.4 Z" fill="url(#xy21)"/>
<path d="M809.1,776.6 L823.9,663.7 L815.2,662.8 L807.7,776.4 Z" fill="url(#xy22)"/>
<path d="M809.2,776.5 L816.6,663.3 L807.8,663.0 L807.8,776.5 Z" fill="url(#xy23)"/>
<path d="M809.2,776.5 L809.2,663.0 L800.4,663.3 L807.8,776.5 Z" fill="url(#xy24)"/>
<path d="M809.3,776.4 L801.8,662.8 L793.1,663.7 L807.9,776.6 Z" fill="url(#xy25)"/>
<path d="M809.4,776.4 L794.3,662.6 L785.6,664.1 L808.0,776.6 Z" fill="url(#xy26)"/>
<path d="M809.4,776.3 L786.7,662.5 L778.0,664.6 L808.1,776.7 Z" fill="url(#xy27)"/>
<path d="M809.5,776.3 L778.9,662.5 L770.3,665.1 L808.1,776.7 Z" fill="url(#xy28)"/>
<path d="M809.5,776.2 L770.9,662.5 L762.3,665.7 L808.2,776.7 Z" fill="url(#xy29)"/>
<path d="M809.6,776.1 L762.4,662.5 L753.9,666.4 L808.3,776.7 Z" fill="url(#xy30)"/>
<path d="M809.6,776.1 L753.6,662.6 L745.1,667.1 L808.4,776.7 Z" fill="url(#xy31)"/>
<path d="M809.6,776.0 L744.2,662.7 L735.8,667.9 L808.4,776.7 Z" fill="url(#xy32)"/>
<path d="M809.7,775.9 L734.0,662.8 L725.7,668.8 L808.5,776.7 Z" fill="url(#xy33)"/>
<path d="M809.7,775.8 L723.0,663.0 L714.8,669.7 L808.6,776.7 Z" fill="url(#xy34)"/>
<path d="M809.7,775.8 L710.9,663.1 L702.8,670.8 L808.7,776.7 Z" fill="url(#xy35)"/>
<path d="M809.7,775.7 L697.3,663.3 L689.3,671.9 L808.8,776.7 Z" fill="url(#xy36)"/>
<path d="M809.7,775.6 L681.8,663.5 L673.9,673.1 L808.8,776.7 Z" fill="url(#xy37)"/>
<path d="M809.7,775.5 L663.8,663.6 L656.0,674.4 L808.9,776.7 Z" fill="url(#xy38)"/>
<path d="M809.7,775.4 L642.3,663.6 L634.7,675.9 L809.0,776.6 Z" fill="url(#xy39)"/>
<path d="M809.7,775.4 L629.5,671.3 L622.4,684.5 L809.1,776.6 Z" fill="url(#xy40)"/>
<path d="M809.7,775.3 L628.6,686.0 L622.6,699.2 L809.1,776.6 Z" fill="url(#xy41)"/>
<path d="M809.7,775.2 L627.7,699.9 L622.7,713.2 L809.2,776.5 Z" fill="url(#xy42)"/>
<path d="M809.7,775.1 L626.9,713.1 L622.9,726.5 L809.3,776.5 Z" fill="url(#xy43)"/>
<path d="M809.7,775.1 L626.2,725.9 L623.1,739.3 L809.3,776.4 Z" fill="url(#xy44)"/>
<path d="M809.6,775.0 L625.6,738.4 L623.4,751.8 L809.4,776.4 Z" fill="url(#xy45)"/>
<path d="M809.6,774.9 L625.1,750.6 L623.7,764.1 L809.4,776.3 Z" fill="url(#xy46)"/>
<path d="M809.5,774.8 L624.5,762.7 L624.1,776.2 L809.5,776.2 Z" fill="url(#xy47)"/>
<path d="M809.5,774.8 L624.1,774.8 L624.5,788.3 L809.5,776.2 Z" fill="url(#xy48)"/>
<path d="M809.4,774.7 L623.7,786.9 L625.1,800.4 L809.6,776.1 Z" fill="url(#xy49)"/>
<path d="M809.4,774.6 L623.4,799.2 L625.6,812.6 L809.6,776.0 Z" fill="url(#xy50)"/>
<path d="M809.3,774.6 L623.1,811.7 L626.2,825.1 L809.7,775.9 Z" fill="url(#xy51)"/>
<path d="M809.3,774.5 L622.9,824.5 L626.9,837.9 L809.7,775.9 Z" fill="url(#xy52)"/>
<path d="M809.2,774.5 L622.7,837.8 L627.7,851.1 L809.7,775.8 Z" fill="url(#xy53)"/>
<path d="M809.1,774.4 L622.6,851.8 L628.6,865.0 L809.7,775.7 Z" fill="url(#xy54)"/>
<path d="M809.1,774.4 L622.4,866.5 L629.5,879.7 L809.7,775.6 Z" fill="url(#xy55)"/>
<path d="M809.0,774.4 L631.4,877.0 L639.2,889.5 L809.7,775.6 Z" fill="url(#xy56)"/>
<path d="M808.9,774.3 L653.2,878.5 L661.1,889.5 L809.7,775.5 Z" fill="url(#xy57)"/>
<path d="M808.8,774.3 L671.4,879.8 L679.4,889.6 L809.7,775.4 Z" fill="url(#xy58)"/>
<path d="M808.8,774.3 L687.1,881.0 L695.2,889.7 L809.7,775.3 Z" fill="url(#xy59)"/>
<path d="M808.7,774.3 L700.8,882.2 L709.1,889.9 L809.7,775.2 Z" fill="url(#xy60)"/>
<path d="M808.6,774.3 L713.1,883.2 L721.5,890.1 L809.7,775.2 Z" fill="url(#xy61)"/>
<path d="M808.5,774.3 L724.2,884.2 L732.7,890.2 L809.7,775.1 Z" fill="url(#xy62)"/>
<path d="M808.4,774.3 L734.5,885.1 L743.0,890.4 L809.6,775.0 Z" fill="url(#xy63)"/>
<path d="M808.4,774.3 L744.0,885.9 L752.6,890.5 L809.6,774.9 Z" fill="url(#xy64)"/>
<path d="M808.3,774.3 L752.9,886.6 L761.6,890.5 L809.6,774.9 Z" fill="url(#xy65)"/>
<path d="M808.2,774.3 L761.4,887.3 L770.2,890.6 L809.5,774.8 Z" fill="url(#xy66)"/>
<path d="M808.1,774.3 L769.6,887.9 L778.4,890.5 L809.5,774.7 Z" fill="url(#xy67)"/>
<path d="M808.1,774.3 L777.5,888.4 L786.3,890.5 L809.4,774.7 Z" fill="url(#xy68)"/>
<path d="M808.0,774.4 L785.2,888.9 L794.1,890.4 L809.4,774.6 Z" fill="url(#xy69)"/>
<path d="M807.9,774.4 L792.8,889.3 L801.7,890.2 L809.3,774.6 Z" fill="url(#xy70)"/>
<path d="M807.8,774.5 L800.3,889.7 L809.2,890.0 L809.2,774.5 Z" fill="url(#xy71)"/>
<path d="M807.8,774.5 L807.8,890.0 L816.7,889.7 L809.2,774.5 Z" fill="url(#xy72)"/>
<path d="M807.7,774.6 L815.3,890.2 L824.2,889.3 L809.1,774.4 Z" fill="url(#xy73)"/>
<path d="M807.6,774.6 L822.9,890.4 L831.8,888.9 L809.0,774.4 Z" fill="url(#xy74)"/>
<path d="M807.6,774.7 L830.7,890.5 L839.5,888.4 L808.9,774.3 Z" fill="url(#xy75)"/>
<path d="M807.5,774.7 L838.6,890.5 L847.4,887.9 L808.9,774.3 Z" fill="url(#xy76)"/>
<path d="M807.5,774.8 L846.8,890.6 L855.6,887.3 L808.8,774.3 Z" fill="url(#xy77)"/>
<path d="M807.4,774.9 L855.4,890.5 L864.1,886.6 L808.7,774.3 Z" fill="url(#xy78)"/>
<path d="M807.4,774.9 L864.4,890.5 L873.0,885.9 L808.6,774.3 Z" fill="url(#xy79)"/>
<path d="M807.4,775.0 L874.0,890.4 L882.5,885.1 L808.6,774.3 Z" fill="url(#xy80)"/>
<path d="M807.3,775.1 L884.3,890.2 L892.8,884.2 L808.5,774.3 Z" fill="url(#xy81)"/>
<path d="M807.3,775.2 L895.5,890.1 L903.9,883.2 L808.4,774.3 Z" fill="url(#xy82)"/>
<path d="M807.3,775.2 L907.9,889.9 L916.2,882.2 L808.3,774.3 Z" fill="url(#xy83)"/>
<path d="M807.3,775.3 L921.8,889.7 L929.9,881.0 L808.2,774.3 Z" fill="url(#xy84)"/>
<path d="M807.3,775.4 L937.6,889.6 L945.6,879.8 L808.2,774.3 Z" fill="url(#xy85)"/>
<path d="M807.3,775.5 L955.9,889.5 L963.8,878.5 L808.1,774.3 Z" fill="url(#xy86)"/>
<path d="M807.3,775.6 L977.8,889.5 L985.6,877.0 L808.0,774.4 Z" fill="url(#xy87)"/>
<path d="M807.3,775.6 L989.0,880.5 L996.1,867.2 L807.9,774.4 Z" fill="url(#xy88)"/>
<path d="M807.3,775.7 L989.9,865.7 L996.0,852.4 L807.9,774.4 Z" fill="url(#xy89)"/>
<path d="M807.3,775.8 L990.8,851.8 L995.8,838.3 L807.8,774.5 Z" fill="url(#xy90)"/>
<path d="M807.3,775.9 L991.5,838.4 L995.6,824.9 L807.7,774.5 Z" fill="url(#xy91)"/>
<path d="M807.3,775.9 L992.2,825.5 L995.4,812.0 L807.7,774.6 Z" fill="url(#xy92)"/>
<path d="M807.4,776.0 L992.9,812.9 L995.1,799.4 L807.6,774.6 Z" fill="url(#xy93)"/>
<path d="M807.4,776.1 L993.4,800.6 L994.8,787.0 L807.6,774.7 Z" fill="url(#xy94)"/>
<path d="M807.5,776.2 L993.9,788.4 L994.4,774.8 L807.5,774.8 Z" fill="url(#xy95)"/>
</g>
<rect x="638.2" y="677.1" width="342.1" height="198.8" fill="none" stroke="#9a9a9a" stroke-width="1"/>
<circle cx="792.8" cy="758.9" r="4.2" fill="#bdbdbd" stroke="#111" stroke-width="1.3"/>
<circle cx="788.6" cy="763.1" r="4.2" fill="#fff" stroke="#111" stroke-width="1.3"/>
<rect x="802" y="769" width="13" height="13" fill="#fff" stroke="#000" stroke-width="1.8"/>
<path d="M996.8,885.2 V661.7 H1648.8 V885.2" fill="none" stroke="#000" stroke-width="1.5"/>
<g clip-path="url(#tblclip)">
<rect x="997.5" y="662.3" width="633" height="17" fill="#2b2b2b"/>
<rect x="997.5" y="679.3" width="633" height="17" fill="#141414"/>
<text x="1129.0" y="685.3" font-size="17.30" text-anchor="middle" textLength="38.9" lengthAdjust="spacingAndGlyphs" fill="#f0f0f0" >White</text>
<text x="1201.7" y="685.3" font-size="17.30" text-anchor="middle" textLength="27.9" lengthAdjust="spacingAndGlyphs" fill="#f0f0f0" >Red</text>
<text x="1275.0" y="685.3" font-size="17.30" text-anchor="middle" textLength="42.3" lengthAdjust="spacingAndGlyphs" fill="#f0f0f0" >Green</text>
<text x="1348.3" y="685.3" font-size="17.30" text-anchor="middle" textLength="30.5" lengthAdjust="spacingAndGlyphs" fill="#f0f0f0" >Blue</text>
<text x="1421.2" y="685.3" font-size="17.30" text-anchor="middle" textLength="35.5" lengthAdjust="spacingAndGlyphs" fill="#f0f0f0" >Cyan</text>
<text x="1499.0" y="685.3" font-size="17.30" text-anchor="middle" textLength="59.2" lengthAdjust="spacingAndGlyphs" fill="#f0f0f0" >Magenta</text>
<text x="1576.7" y="685.3" font-size="17.30" text-anchor="middle" textLength="44.8" lengthAdjust="spacingAndGlyphs" fill="#f0f0f0" >Yellow</text>
<rect x="997.5" y="696.3" width="633" height="31" fill="#3b3b3b"/>
<text x="1010.4" y="719.2" font-size="19.77" textLength="62.8" lengthAdjust="spacingAndGlyphs" fill="#f4f4f4" font-weight="bold" >x: CIE31</text>
<text x="1094.6" y="719.2" font-size="20.35" textLength="49.6" lengthAdjust="spacingAndGlyphs" fill="#f4f4f4" >0,3103</text>
<text x="1172.0" y="719.2" font-size="20.35" textLength="49.6" lengthAdjust="spacingAndGlyphs" fill="#f4f4f4" >0,6449</text>
<text x="1240.4" y="719.2" font-size="20.35" textLength="49.6" lengthAdjust="spacingAndGlyphs" fill="#f4f4f4" >0,3010</text>
<text x="1318.2" y="719.2" font-size="20.35" textLength="49.6" lengthAdjust="spacingAndGlyphs" fill="#f4f4f4" >0,1508</text>
<text x="1387.0" y="719.2" font-size="20.35" textLength="49.6" lengthAdjust="spacingAndGlyphs" fill="#f4f4f4" >0,2257</text>
<text x="1464.8" y="719.2" font-size="20.35" textLength="49.6" lengthAdjust="spacingAndGlyphs" fill="#f4f4f4" >0,3165</text>
<text x="1542.0" y="719.2" font-size="20.35" textLength="49.6" lengthAdjust="spacingAndGlyphs" fill="#f4f4f4" >0,4153</text>
<text x="1619.0" y="719.2" font-size="20.35" textLength="49.6" lengthAdjust="spacingAndGlyphs" fill="#f4f4f4" >0,3098</text>
<rect x="997.5" y="727.2" width="633" height="31" fill="#828282"/>
<text x="1010.4" y="750.1" font-size="19.77" textLength="62.8" lengthAdjust="spacingAndGlyphs" fill="#f4f4f4" font-weight="bold" >y: CIE31</text>
<text x="1094.6" y="750.1" font-size="20.35" textLength="49.6" lengthAdjust="spacingAndGlyphs" fill="#f4f4f4" >0,3331</text>
<text x="1172.0" y="750.1" font-size="20.35" textLength="49.6" lengthAdjust="spacingAndGlyphs" fill="#f4f4f4" >0,3305</text>
<text x="1240.4" y="750.1" font-size="20.35" textLength="49.6" lengthAdjust="spacingAndGlyphs" fill="#f4f4f4" >0,6030</text>
<text x="1318.2" y="750.1" font-size="20.35" textLength="49.6" lengthAdjust="spacingAndGlyphs" fill="#f4f4f4" >0,0626</text>
<text x="1387.0" y="750.1" font-size="20.35" textLength="49.6" lengthAdjust="spacingAndGlyphs" fill="#f4f4f4" >0,3338</text>
<text x="1464.8" y="750.1" font-size="20.35" textLength="49.6" lengthAdjust="spacingAndGlyphs" fill="#f4f4f4" >0,1522</text>
<text x="1542.0" y="750.1" font-size="20.35" textLength="49.6" lengthAdjust="spacingAndGlyphs" fill="#f4f4f4" >0,5096</text>
<text x="1619.0" y="750.1" font-size="20.35" textLength="49.6" lengthAdjust="spacingAndGlyphs" fill="#f4f4f4" >0,3320</text>
<rect x="997.5" y="758.1" width="633" height="31" fill="#3b3b3b"/>
<text x="1010.4" y="781.0" font-size="19.77" textLength="10.6" lengthAdjust="spacingAndGlyphs" fill="#f4f4f4" font-weight="bold" >Y</text>
<text x="1094.6" y="781.0" font-size="20.35" textLength="67.6" lengthAdjust="spacingAndGlyphs" fill="#f4f4f4" >329,2648</text>
<text x="1172.0" y="781.0" font-size="20.35" textLength="58.6" lengthAdjust="spacingAndGlyphs" fill="#f4f4f4" >65,1995</text>
<text x="1240.4" y="781.0" font-size="20.35" textLength="67.6" lengthAdjust="spacingAndGlyphs" fill="#f4f4f4" >234,8803</text>
<text x="1318.2" y="781.0" font-size="20.35" textLength="58.6" lengthAdjust="spacingAndGlyphs" fill="#f4f4f4" >24,3649</text>
<text x="1387.0" y="781.0" font-size="20.35" textLength="67.6" lengthAdjust="spacingAndGlyphs" fill="#f4f4f4" >261,2263</text>
<text x="1464.8" y="781.0" font-size="20.35" textLength="58.6" lengthAdjust="spacingAndGlyphs" fill="#f4f4f4" >89,8160</text>
<text x="1542.0" y="781.0" font-size="20.35" textLength="67.6" lengthAdjust="spacingAndGlyphs" fill="#f4f4f4" >301,5093</text>
<text x="1619.0" y="781.0" font-size="20.35" textLength="49.6" lengthAdjust="spacingAndGlyphs" fill="#f4f4f4" >6,2117</text>
<rect x="997.5" y="789.0" width="633" height="31" fill="#828282"/>
<text x="1010.4" y="811.9" font-size="19.77" textLength="63.7" lengthAdjust="spacingAndGlyphs" fill="#f4f4f4" font-weight="bold" >Target Y</text>
<text x="1094.6" y="811.9" font-size="20.35" textLength="67.6" lengthAdjust="spacingAndGlyphs" fill="#f4f4f4" >328,9987</text>
<text x="1172.0" y="811.9" font-size="20.35" textLength="58.6" lengthAdjust="spacingAndGlyphs" fill="#f4f4f4" >75,3371</text>
<text x="1240.4" y="811.9" font-size="20.35" textLength="67.6" lengthAdjust="spacingAndGlyphs" fill="#f4f4f4" >227,5786</text>
<text x="1318.2" y="811.9" font-size="20.35" textLength="58.6" lengthAdjust="spacingAndGlyphs" fill="#f4f4f4" >26,0831</text>
<text x="1387.0" y="811.9" font-size="20.35" textLength="67.6" lengthAdjust="spacingAndGlyphs" fill="#f4f4f4" >253,6616</text>
<text x="1464.8" y="811.9" font-size="20.35" textLength="67.6" lengthAdjust="spacingAndGlyphs" fill="#f4f4f4" >101,4202</text>
<text x="1542.0" y="811.9" font-size="20.35" textLength="67.6" lengthAdjust="spacingAndGlyphs" fill="#f4f4f4" >302,9156</text>
<text x="1619.0" y="811.9" font-size="20.35" textLength="49.6" lengthAdjust="spacingAndGlyphs" fill="#f4f4f4" >6,2117</text>
<rect x="997.5" y="819.9" width="633" height="31" fill="#3b3b3b"/>
<text x="1010.4" y="842.8" font-size="19.77" textLength="61.9" lengthAdjust="spacingAndGlyphs" fill="#f4f4f4" font-weight="bold" >ΔE 2000</text>
<text x="1094.6" y="842.8" font-size="20.35" textLength="49.6" lengthAdjust="spacingAndGlyphs" fill="#f4f4f4" >3,7907</text>
<text x="1172.0" y="842.8" font-size="20.35" textLength="49.6" lengthAdjust="spacingAndGlyphs" fill="#f4f4f4" >4,7828</text>
<text x="1240.4" y="842.8" font-size="20.35" textLength="49.6" lengthAdjust="spacingAndGlyphs" fill="#f4f4f4" >5,0305</text>
<text x="1318.2" y="842.8" font-size="20.35" textLength="49.6" lengthAdjust="spacingAndGlyphs" fill="#f4f4f4" >1,2355</text>
<text x="1387.0" y="842.8" font-size="20.35" textLength="49.6" lengthAdjust="spacingAndGlyphs" fill="#f4f4f4" >4,1088</text>
<text x="1464.8" y="842.8" font-size="20.35" textLength="49.6" lengthAdjust="spacingAndGlyphs" fill="#f4f4f4" >3,5577</text>
<text x="1542.0" y="842.8" font-size="20.35" textLength="49.6" lengthAdjust="spacingAndGlyphs" fill="#f4f4f4" >5,5106</text>
<text x="1619.0" y="842.8" font-size="20.35" textLength="49.6" lengthAdjust="spacingAndGlyphs" fill="#f4f4f4" >4,2000</text>
<rect x="997.5" y="850.8" width="633" height="31" fill="#828282"/>
<text x="1010.4" y="873.7" font-size="19.77" textLength="51.2" lengthAdjust="spacingAndGlyphs" fill="#f4f4f4" font-weight="bold" >ΔE ITP</text>
<text x="1094.6" y="873.7" font-size="20.35" textLength="49.6" lengthAdjust="spacingAndGlyphs" fill="#f4f4f4" >3,1330</text>
<text x="1172.0" y="873.7" font-size="20.35" textLength="58.6" lengthAdjust="spacingAndGlyphs" fill="#f4f4f4" >41,7202</text>
<text x="1240.4" y="873.7" font-size="20.35" textLength="58.6" lengthAdjust="spacingAndGlyphs" fill="#f4f4f4" >24,0300</text>
<text x="1318.2" y="873.7" font-size="20.35" textLength="49.6" lengthAdjust="spacingAndGlyphs" fill="#f4f4f4" >6,6400</text>
<text x="1387.0" y="873.7" font-size="20.35" textLength="58.6" lengthAdjust="spacingAndGlyphs" fill="#f4f4f4" >18,5131</text>
<text x="1464.8" y="873.7" font-size="20.35" textLength="58.6" lengthAdjust="spacingAndGlyphs" fill="#f4f4f4" >27,5881</text>
<text x="1542.0" y="873.7" font-size="20.35" textLength="58.6" lengthAdjust="spacingAndGlyphs" fill="#f4f4f4" >30,2177</text>
<text x="1619.0" y="873.7" font-size="20.35" textLength="49.6" lengthAdjust="spacingAndGlyphs" fill="#f4f4f4" >3,5000</text>
</g>
<rect x="1630.3" y="696.3" width="17.6" height="169.7" fill="#575757"/>
<rect x="1633" y="717" width="12.5" height="106" rx="6" fill="#3c3c3c"/>
<rect x="1633" y="698" width="12.5" height="15" rx="2.5" fill="#6a6a6a" stroke="#4a4a4a" stroke-width="1"/>
<path d="M1634.8,708.5 L1639.2,703.2 L1643.6,708.5 Z" fill="#333"/>
<rect x="1633" y="848" width="12.5" height="15.5" rx="2.5" fill="#6a6a6a" stroke="#4a4a4a" stroke-width="1"/>
<path d="M1634.8,852.5 L1643.6,852.5 L1639.2,858 Z" fill="#333"/>
<rect x="997.5" y="866" width="632.8" height="19" fill="#575757"/>
<rect x="1017" y="868.6" width="540" height="15" rx="7" fill="#3c3c3c"/>
<rect x="999" y="868.6" width="13.8" height="15" rx="2.5" fill="#6a6a6a" stroke="#4a4a4a" stroke-width="1"/>
<path d="M1003.6,876.1 L1008.8,871.3 V880.9 Z" fill="#333"/>
<rect x="1615.5" y="868.6" width="13.8" height="15" rx="2.5" fill="#6a6a6a" stroke="#4a4a4a" stroke-width="1"/>
<path d="M1625,876.1 L1619.8,871.3 V880.9 Z" fill="#333"/>
<rect x="2.2" y="929.6" width="155.6" height="80" rx="4.5" fill="url(#bbg)"/>
<rect x="8.1" y="935.7" width="143.6" height="45.3" rx="4.5" fill="#c0c0c0"/>
<rect x="8.6" y="936.2" width="142.6" height="44.3" rx="4" fill="none" stroke="#000" stroke-opacity="0.22" stroke-width="1"/>
<path d="M10.1,937.6 H149.7" stroke="#000" stroke-opacity="0.15" stroke-width="2"/>
<text x="80.0" y="999.8" font-size="12.94" text-anchor="middle" textLength="37.0" lengthAdjust="spacingAndGlyphs" fill="#2c2c2c" font-weight="bold" >White</text>
<rect x="160.2" y="929.6" width="155.6" height="80" rx="4.5" fill="url(#bbg)"/>
<rect x="166.1" y="935.7" width="143.6" height="45.3" rx="4.5" fill="#c00000"/>
<rect x="166.6" y="936.2" width="142.6" height="44.3" rx="4" fill="none" stroke="#000" stroke-opacity="0.22" stroke-width="1"/>
<path d="M168.1,937.6 H307.7" stroke="#000" stroke-opacity="0.15" stroke-width="2"/>
<text x="238.0" y="999.8" font-size="12.94" text-anchor="middle" textLength="25.7" lengthAdjust="spacingAndGlyphs" fill="#2c2c2c" font-weight="bold" >Red</text>
<rect x="318.1" y="929.6" width="155.6" height="80" rx="4.5" fill="url(#bbg)"/>
<rect x="324.0" y="935.7" width="143.6" height="45.3" rx="4.5" fill="#00c000"/>
<rect x="324.5" y="936.2" width="142.6" height="44.3" rx="4" fill="none" stroke="#000" stroke-opacity="0.22" stroke-width="1"/>
<path d="M326.0,937.6 H465.6" stroke="#000" stroke-opacity="0.15" stroke-width="2"/>
<text x="395.9" y="999.8" font-size="12.94" text-anchor="middle" textLength="39.3" lengthAdjust="spacingAndGlyphs" fill="#2c2c2c" font-weight="bold" >Green</text>
<rect x="476.1" y="929.6" width="155.6" height="80" rx="4.5" fill="url(#bbg)"/>
<rect x="482.0" y="935.7" width="143.6" height="45.3" rx="4.5" fill="#0000c0"/>
<rect x="482.5" y="936.2" width="142.6" height="44.3" rx="4" fill="none" stroke="#000" stroke-opacity="0.22" stroke-width="1"/>
<path d="M484.0,937.6 H623.6" stroke="#000" stroke-opacity="0.15" stroke-width="2"/>
<text x="553.9" y="999.8" font-size="12.94" text-anchor="middle" textLength="29.4" lengthAdjust="spacingAndGlyphs" fill="#2c2c2c" font-weight="bold" >Blue</text>
<rect x="634.1" y="929.6" width="155.6" height="80" rx="4.5" fill="url(#bbg)"/>
<rect x="640.0" y="935.7" width="143.6" height="45.3" rx="4.5" fill="#00c0c0"/>
<rect x="640.5" y="936.2" width="142.6" height="44.3" rx="4" fill="none" stroke="#000" stroke-opacity="0.22" stroke-width="1"/>
<path d="M642.0,937.6 H781.6" stroke="#000" stroke-opacity="0.15" stroke-width="2"/>
<text x="711.9" y="999.8" font-size="12.94" text-anchor="middle" textLength="33.2" lengthAdjust="spacingAndGlyphs" fill="#2c2c2c" font-weight="bold" >Cyan</text>
<rect x="792.1" y="929.6" width="155.6" height="80" rx="4.5" fill="url(#bbg)"/>
<rect x="798.0" y="935.7" width="143.6" height="45.3" rx="4.5" fill="#c000c0"/>
<rect x="798.5" y="936.2" width="142.6" height="44.3" rx="4" fill="none" stroke="#000" stroke-opacity="0.22" stroke-width="1"/>
<path d="M800.0,937.6 H939.6" stroke="#000" stroke-opacity="0.15" stroke-width="2"/>
<text x="869.9" y="999.8" font-size="12.94" text-anchor="middle" textLength="55.1" lengthAdjust="spacingAndGlyphs" fill="#2c2c2c" font-weight="bold" >Magenta</text>
<rect x="950.0" y="929.6" width="155.6" height="80" rx="4.5" fill="url(#bbg)"/>
<rect x="955.9" y="935.7" width="143.6" height="45.3" rx="4.5" fill="#c0c000"/>
<rect x="956.4" y="936.2" width="142.6" height="44.3" rx="4" fill="none" stroke="#000" stroke-opacity="0.22" stroke-width="1"/>
<path d="M957.9,937.6 H1097.5" stroke="#000" stroke-opacity="0.15" stroke-width="2"/>
<text x="1027.8" y="999.8" font-size="12.94" text-anchor="middle" textLength="43.0" lengthAdjust="spacingAndGlyphs" fill="#2c2c2c" font-weight="bold" >Yellow</text>
<rect x="1108.0" y="929.6" width="155.6" height="80" rx="4.5" fill="url(#bsel)"/>
<rect x="1113.9" y="935.7" width="143.6" height="45.3" rx="4.5" fill="#ffffff"/>
<path d="M1116.9,937 H1254.5" stroke="#ccc" stroke-width="1.2"/>
<text x="1185.8" y="999.8" font-size="12.94" text-anchor="middle" textLength="33.8" lengthAdjust="spacingAndGlyphs" fill="#f8f8f8" font-weight="bold" >100W</text>
<rect x="1265" y="927" width="406" height="79" fill="#2e2e2e"/>
<rect x="1267.2" y="929.6" width="59.8" height="80" rx="4" fill="url(#lpg)"/>
<rect x="1267.2" y="929.6" width="59.8" height="22.4" rx="4" fill="url(#cpg)"/>
<path d="M1267.2,952.3 H1327" stroke="#3a3a3a" stroke-width="1.4"/>
<circle cx="1297" cy="940.6" r="9.2" fill="url(#cpc)"/>
<path d="M1291.6,943.2 L1297,937.6 L1302.4,943.2 Z" fill="#2e2e2e"/>
<rect x="1278.6" y="961.2" width="36.6" height="36" rx="5" fill="#a2a2a2" stroke="#1c1c1c" stroke-width="2.6"/>
<rect x="1280" y="979.5" width="33.8" height="16.5" fill="#000" opacity="0.12"/>
<rect x="1289" y="971.2" width="17" height="17" fill="#050505"/>
<rect x="1328.3" y="929.3" width="282.9" height="37" fill="url(#cpg)"/>
<path d="M1386.5,929V966.3M1442.6,929V966.3M1499,929V966.3M1555.4,929V966.3" stroke="#2e2e2e" stroke-width="1.5"/>
<circle cx="1356.5" cy="948.2" r="12.4" fill="url(#cpc)"/>
<circle cx="1413.5" cy="948.2" r="12.4" fill="url(#cpc)"/>
<circle cx="1471" cy="948.2" r="12.4" fill="url(#cpc)"/>
<circle cx="1527" cy="948.2" r="12.4" fill="url(#cpc)"/>
<circle cx="1583.5" cy="948.2" r="12.4" fill="url(#cpc)"/>
<rect x="1351.5" y="942.7" width="10" height="10" fill="#2e2e2e"/>
<path d="M1410.5,941.5 L1419.5,948.5 L1410.5,955.5 Z" fill="#2e2e2e"/>
<path d="M1466.6,941.2 H1464.6 V954.2 H1466.6 M1475.4,941.2 H1477.4 V954.2 H1475.4" fill="none" stroke="#2e2e2e" stroke-width="2.2"/>
<path d="M1468.5,947.7 H1473.5" stroke="#2e2e2e" stroke-width="1.4" stroke-dasharray="1.4 1.2"/>
<path d="M1527,947.7 C1524,943.5 1519.3,943.5 1519.3,947.7 C1519.3,951.9 1524,951.9 1527,947.7 C1530,943.5 1534.7,943.5 1534.7,947.7 C1534.7,951.9 1530,951.9 1527,947.7 Z" fill="none" stroke="#2e2e2e" stroke-width="2.2"/>
<path d="M1578.3,946.5 A5.6,5.6 0 0 1 1588.2,944.2 M1588.7,949 A5.6,5.6 0 0 1 1578.8,951.3" fill="none" stroke="#2e2e2e" stroke-width="2.3"/>
<path d="M1589.6,940.6 V946.2 H1584 Z M1577.4,954.8 V949.2 H1583 Z" fill="#2e2e2e"/>
<rect x="1328.3" y="968.2" width="338.3" height="40" fill="url(#cpg)"/>
<path d="M1499,968V1006" stroke="#2e2e2e" stroke-width="1.5"/>
<circle cx="1367" cy="987" r="12" fill="url(#cpc)"/>
<circle cx="1633.5" cy="987" r="12" fill="url(#cpc)"/>
<path d="M1367.6,982 L1363.2,987 L1367.6,992 M1372,982 L1367.6,987 L1372,992" fill="none" stroke="#2e2e2e" stroke-width="1.8"/>
<path d="M1631.4,982 L1635.8,987 L1631.4,992 M1627,982 L1631.4,987 L1627,992" fill="none" stroke="#2e2e2e" stroke-width="1.8"/>
<text x="1401.3" y="995.8" font-size="27.33" textLength="62.0" lengthAdjust="spacingAndGlyphs" fill="#2e2e2e" stroke="#2e2e2e" stroke-width="0.9">Back</text>
<text x="1535.0" y="996.6" font-size="27.91" textLength="63.4" lengthAdjust="spacingAndGlyphs" fill="#2e2e2e" stroke="#2e2e2e" stroke-width="0.9">Next</text>
<path transform="translate(1639.6,948.4)" d="M0.00,-13.70L-0.00,13.70M11.86,-6.85L-11.86,6.85M11.86,6.85L-11.86,-6.85" stroke="#200000" stroke-opacity="0.55" stroke-width="7.6" stroke-linecap="round"/>
<path transform="translate(1638.3,947)" d="M0.00,-13.70L-0.00,13.70M11.86,-6.85L-11.86,6.85M11.86,6.85L-11.86,-6.85" stroke="#e00a0a" stroke-width="7.2" stroke-linecap="round"/>
<rect x="1658" y="0" width="12" height="1006" fill="url(#rsh2)"/>
</svg></body></html>
